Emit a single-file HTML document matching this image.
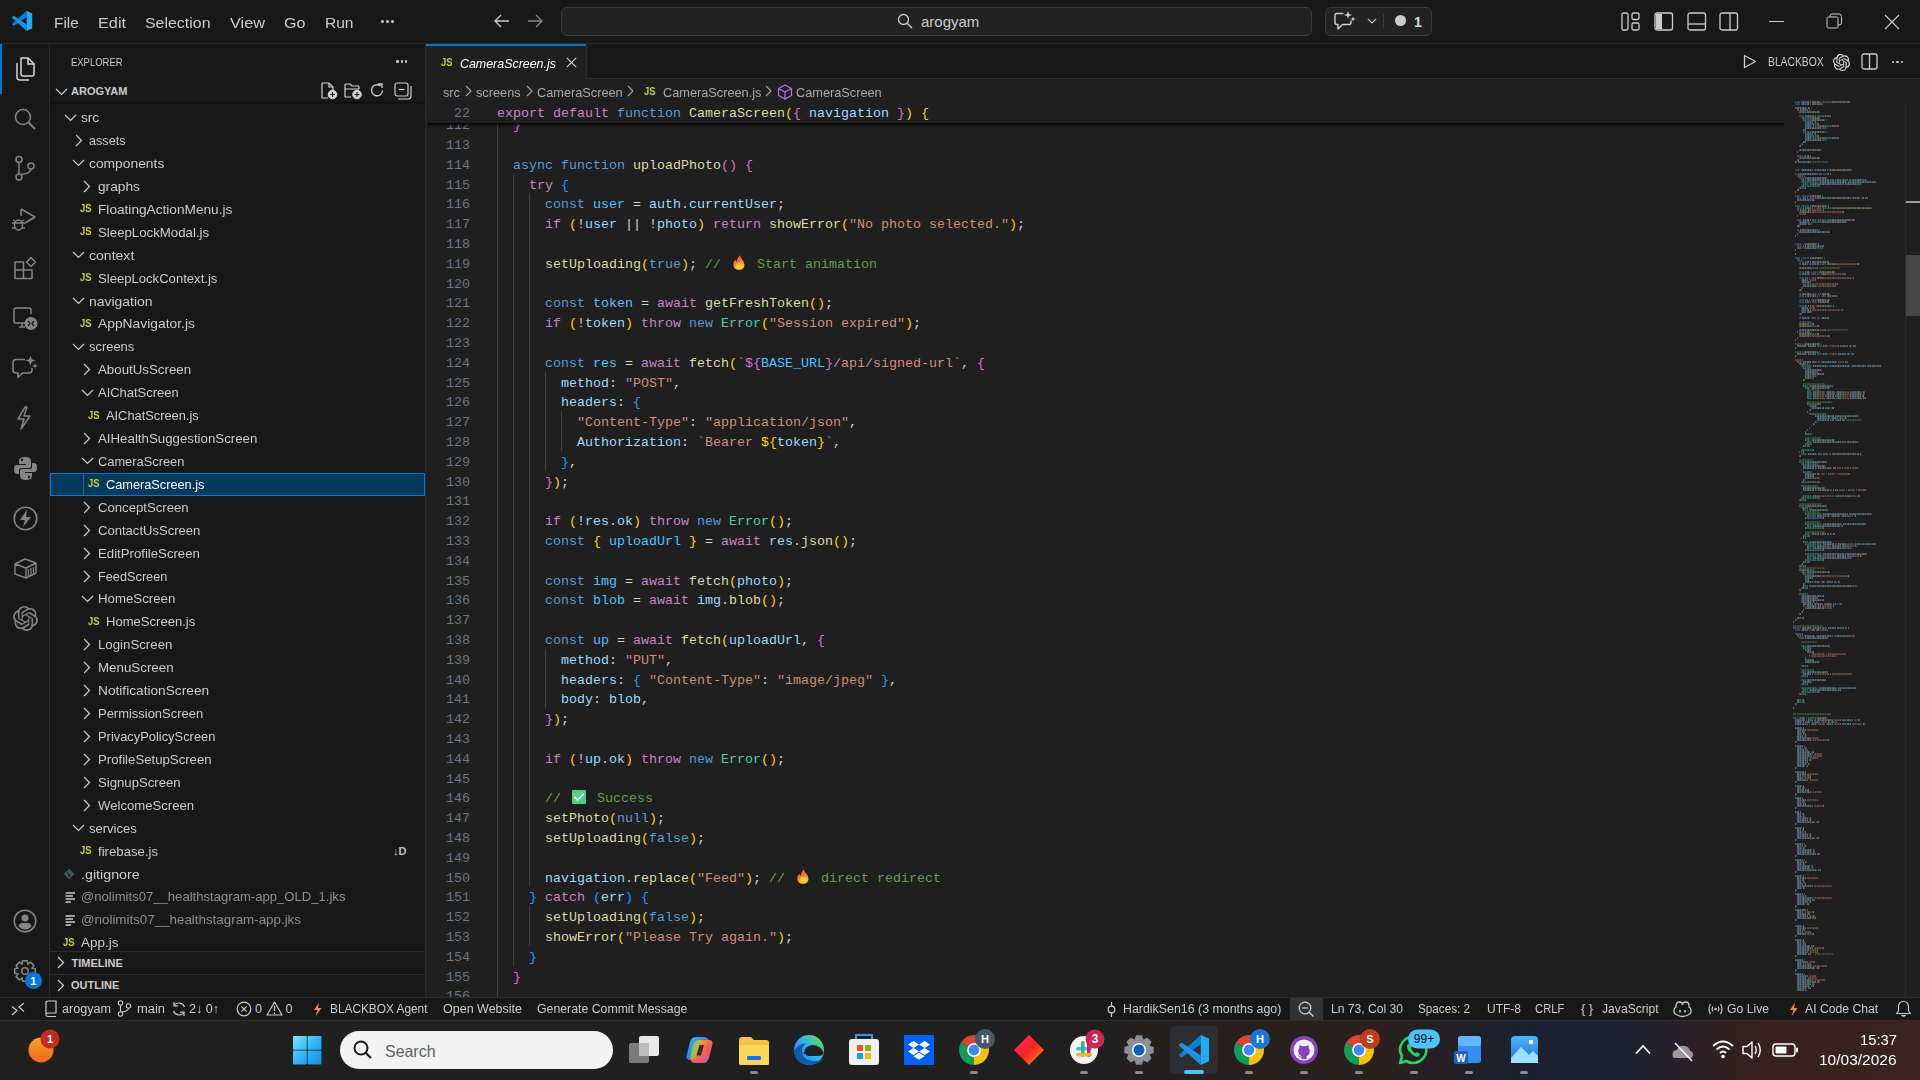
<!DOCTYPE html>
<html><head><meta charset="utf-8"><title>VS Code</title>
<style>
html,body{margin:0;padding:0;}
body{width:1920px;height:1080px;overflow:hidden;position:relative;background:#1f1f1f;font-family:"Liberation Sans",sans-serif;}
body div, body svg{position:absolute;}
svg{overflow:visible;}
</style></head><body>
<div style="left:0px;top:0px;width:1920px;height:43px;background:#181818;"></div>
<div style="left:0px;top:43px;width:1920px;height:1px;background:#2b2b2b;"></div>
<svg style="left:0px;top:0px;" width="44" height="44" viewBox="0 0 44 44"><polygon points="26.69,10.80 26.69,17.20 13.80,25.99 11.80,24.29" fill="#0f7fcf"/><polygon points="26.69,31.00 26.69,24.60 13.80,15.81 11.80,17.51" fill="#1b93e3"/><polygon points="26.69,10.80 32.20,13.39 32.20,28.41 26.69,31.00" fill="#24aaf2"/></svg>
<div style="left:53.5px;top:15.30px;font-family:'Liberation Sans', sans-serif;font-size:15px;line-height:15px;color:#cccccc;white-space:pre;transform:scaleX(1.0240496508921644);transform-origin:0 0;">File</div>
<div style="left:97.5px;top:15.30px;font-family:'Liberation Sans', sans-serif;font-size:15px;line-height:15px;color:#cccccc;white-space:pre;transform:scaleX(1.0833031072421715);transform-origin:0 0;">Edit</div>
<div style="left:145.0px;top:15.30px;font-family:'Liberation Sans', sans-serif;font-size:15px;line-height:15px;color:#cccccc;white-space:pre;transform:scaleX(1.0615211253339412);transform-origin:0 0;">Selection</div>
<div style="left:230.0px;top:15.30px;font-family:'Liberation Sans', sans-serif;font-size:15px;line-height:15px;color:#cccccc;white-space:pre;transform:scaleX(1.0855868954153338);transform-origin:0 0;">View</div>
<div style="left:284.0px;top:15.30px;font-family:'Liberation Sans', sans-serif;font-size:15px;line-height:15px;color:#cccccc;white-space:pre;transform:scaleX(1.0745382843309514);transform-origin:0 0;">Go</div>
<div style="left:325.0px;top:15.30px;font-family:'Liberation Sans', sans-serif;font-size:15px;line-height:15px;color:#cccccc;white-space:pre;transform:scaleX(1.0357751277683134);transform-origin:0 0;">Run</div>
<div style="left:381px;top:19.5px;width:3px;height:3px;background:#cccccc;border-radius:50%;"></div>
<div style="left:386px;top:19.5px;width:3px;height:3px;background:#cccccc;border-radius:50%;"></div>
<div style="left:391px;top:19.5px;width:3px;height:3px;background:#cccccc;border-radius:50%;"></div>
<svg style="left:493px;top:12px;" width="18" height="18" viewBox="0 0 18 18"><path d="M16 9 H2 M8 3 L2 9 L8 15" stroke="#cccccc" stroke-width="1.4" fill="none"/></svg>
<svg style="left:526px;top:12px;" width="18" height="18" viewBox="0 0 18 18"><path d="M2 9 H16 M10 3 L16 9 L10 15" stroke="#858585" stroke-width="1.4" fill="none"/></svg>
<div style="left:561px;top:7px;width:751px;height:29px;background:#222222;box-sizing:border-box;border:1px solid #3a3a3a;border-radius:6px;"></div>
<svg style="left:897px;top:13px;" width="16" height="16" viewBox="0 0 16 16"><circle cx="6.5" cy="6.5" r="5" stroke="#cccccc" stroke-width="1.3" fill="none"/><path d="M10.2 10.2 L15 15" stroke="#cccccc" stroke-width="1.4"/></svg>
<div style="left:921px;top:13.80px;font-family:'Liberation Sans', sans-serif;font-size:15px;line-height:15px;color:#cccccc;white-space:pre;">arogyam</div>
<div style="left:1325px;top:7px;width:107px;height:29px;background:#222222;box-sizing:border-box;border:1px solid #3a3a3a;border-radius:6px;"></div>
<svg style="left:1333px;top:10px;" width="24" height="22" viewBox="0 0 24 22"><path d="M10.5 3.5 H4 Q2 3.5 2 5.5 V12.5 Q2 14.5 4 14.5 H5 V19 L9.5 14.5 H16 Q18 14.5 18 12.5 V10.5" stroke="#d0d0d0" stroke-width="1.4" fill="none" stroke-linejoin="round"/><path d="M15 1 L16 4 L19 5 L16 6 L15 9 L14 6 L11 5 L14 4 Z M20 6.5 L20.7 8.3 L22.5 9 L20.7 9.7 L20 11.5 L19.3 9.7 L17.5 9 L19.3 8.3 Z" fill="#d0d0d0"/></svg>
<svg style="left:1367px;top:18px;" width="10" height="6" viewBox="0 0 10 6"><path d="M0.8 0.8 L5 5 L9.2 0.8" stroke="#cccccc" stroke-width="1.1" fill="none"/></svg>
<div style="left:1383px;top:14px;width:1px;height:14px;background:#3a3a3a;"></div>
<div style="left:1395px;top:15px;width:11px;height:11px;background:#cccccc;border-radius:50%;"></div>
<div style="left:1414px;top:15.15px;font-family:'Liberation Sans', sans-serif;font-size:14px;line-height:14px;color:#d8d8d8;white-space:pre;font-weight:700;">1</div>
<svg style="left:1621px;top:12px;" width="20" height="19" viewBox="0 0 20 19"><rect x="1" y="1" width="6" height="17" rx="1.5" stroke="#cccccc" stroke-width="1.3" fill="none"/><rect x="11" y="1" width="7" height="6.5" rx="1.5" stroke="#cccccc" stroke-width="1.3" fill="none"/><rect x="11" y="11" width="7" height="7" rx="1.5" stroke="#cccccc" stroke-width="1.3" fill="none"/></svg>
<svg style="left:1654px;top:12px;" width="20" height="19" viewBox="0 0 20 19"><rect x="1" y="1" width="17.5" height="17" rx="2" stroke="#cccccc" stroke-width="1.3" fill="none"/><path d="M2 2 H8 V17 H2 Z" fill="#cccccc"/></svg>
<svg style="left:1687px;top:12px;" width="20" height="19" viewBox="0 0 20 19"><rect x="1" y="1" width="17.5" height="17" rx="2" stroke="#cccccc" stroke-width="1.3" fill="none"/><path d="M1 12 H18.5" stroke="#cccccc" stroke-width="1.3"/></svg>
<svg style="left:1719px;top:12px;" width="20" height="19" viewBox="0 0 20 19"><rect x="1" y="1" width="17.5" height="17" rx="2" stroke="#cccccc" stroke-width="1.3" fill="none"/><path d="M11 1 V18" stroke="#cccccc" stroke-width="1.3"/></svg>
<div style="left:1769px;top:20.5px;width:15px;height:1px;background:#cccccc;"></div>
<svg style="left:1826px;top:13px;" width="17" height="17" viewBox="0 0 17 17"><rect x="1" y="4" width="11" height="11" rx="1.5" stroke="#cccccc" stroke-width="1" fill="none"/><path d="M4 4 V3 Q4 1 6 1 H13 Q15.5 1 15.5 3.5 V10 Q15.5 12 13 12 H12" stroke="#cccccc" stroke-width="1" fill="none"/></svg>
<svg style="left:1884px;top:14px;" width="16" height="16" viewBox="0 0 16 16"><path d="M1 1 L15 15 M15 1 L1 15" stroke="#cccccc" stroke-width="1.1"/></svg>
<div style="left:0px;top:44px;width:49px;height:953px;background:#181818;"></div>
<div style="left:49px;top:44px;width:1px;height:953px;background:#2b2b2b;"></div>
<div style="left:0px;top:44px;width:2px;height:50px;background:#0078d4;"></div>
<svg style="left:13px;top:56px;" width="24" height="26" viewBox="0 0 24 26"><path d="M8 2 H15 L21 8 V18 Q21 20 19 20 H10 Q8 20 8 18 Z" stroke="#d7d7d7" stroke-width="1.5" fill="none"/>
      <path d="M15 2 V8 H21" stroke="#d7d7d7" stroke-width="1.5" fill="none"/>
      <path d="M4 7 V21 Q4 24 7 24 H16" stroke="#d7d7d7" stroke-width="1.5" fill="none"/></svg>
<svg style="left:13px;top:107px;" width="24" height="24" viewBox="0 0 24 24"><circle cx="10" cy="10" r="7.5" stroke="#858585" stroke-width="1.6" fill="none"/><path d="M15.5 15.5 L22 22" stroke="#858585" stroke-width="1.8"/></svg>
<svg style="left:14px;top:155px;" width="22" height="27" viewBox="0 0 22 27"><circle cx="5" cy="4.5" r="3" stroke="#858585" stroke-width="1.5" fill="none"/><circle cx="5" cy="22" r="3" stroke="#858585" stroke-width="1.5" fill="none"/><circle cx="17" cy="11" r="3" stroke="#858585" stroke-width="1.5" fill="none"/><path d="M5 7.5 V19 M17 14 Q17 18 7.5 19.5" stroke="#858585" stroke-width="1.5" fill="none"/></svg>
<svg style="left:11px;top:207px;" width="26" height="26" viewBox="0 0 26 26"><path d="M10 2 L24 10 L14 16" stroke="#858585" stroke-width="1.5" fill="none" stroke-linejoin="round"/><path d="M10 2 V9" stroke="#858585" stroke-width="1.5"/><ellipse cx="7.5" cy="18" rx="4" ry="5" stroke="#858585" stroke-width="1.5" fill="none"/><path d="M1 16 H14 M1 21 H4 M11 21 H14 M2 13 L4 14 M13 13 L11 14" stroke="#858585" stroke-width="1.3"/></svg>
<svg style="left:13px;top:256px;" width="24" height="24" viewBox="0 0 24 24"><path d="M2 6 H10.5 V14 H19 V22.5 H2 Z M2 14 H10.5 V22.5" stroke="#858585" stroke-width="1.5" fill="none" stroke-linejoin="round"/><path d="M18 1.5 L22.5 6 L18 10.5 L13.5 6 Z" stroke="#858585" stroke-width="1.5" fill="none" stroke-linejoin="round"/></svg>
<svg style="left:12px;top:306px;" width="26" height="26" viewBox="0 0 26 26"><path d="M15 17 H4 Q2 17 2 15 V4 Q2 2 4 2 H17 Q19 2 19 4 V8" stroke="#858585" stroke-width="1.5" fill="none"/><path d="M7 21 H13 M10 17 V21" stroke="#858585" stroke-width="1.5"/><circle cx="19" cy="17.5" r="6.5" fill="#858585"/><path d="M16 15 L18 17.5 L16 20 M22 15 L20 17.5 L22 20" stroke="#181818" stroke-width="1.3" fill="none"/></svg>
<svg style="left:11px;top:355px;" width="27" height="25" viewBox="0 0 27 25"><path d="M14 4.5 H5 Q2 4.5 2 7.5 V15 Q2 18 5 18 H7 V22.5 L11.5 18 H18 Q21 18 21 15 V13" stroke="#858585" stroke-width="1.6" fill="none" stroke-linejoin="round"/><path d="M19.5 0.5 L20.8 4.2 L24.5 5.5 L20.8 6.8 L19.5 10.5 L18.2 6.8 L14.5 5.5 L18.2 4.2 Z M24 8 L24.8 10.2 L27 11 L24.8 11.8 L24 14 L23.2 11.8 L21 11 L23.2 10.2 Z" fill="#858585"/></svg>
<svg style="left:15px;top:406px;" width="18" height="24" viewBox="0 0 18 24"><path d="M10 1 L3 13 H9 L6 23 L15 10 H9 L12 1 Z" stroke="#858585" stroke-width="1.5" fill="none" stroke-linejoin="round"/></svg>
<svg style="left:13px;top:456px;" width="25" height="25" viewBox="0 0 25 25"><path d="M12 1 Q6 1 6 5 V8 H13 V9 H4 Q1 9 1 13 Q1 18 4 18 H6 V14 Q6 12 9 12 H16 Q18 12 18 10 V5 Q18 1 12 1 Z" fill="#858585"/><path d="M13 24 Q19 24 19 20 V17 H12 V16 H21 Q24 16 24 12 Q24 7 21 7 H19 V11 Q19 13 16 13 H9 Q7 13 7 15 V20 Q7 24 13 24 Z" fill="#858585"/><circle cx="9" cy="4" r="1.2" fill="#181818"/><circle cx="16" cy="21" r="1.2" fill="#181818"/></svg>
<svg style="left:13px;top:506px;" width="26" height="26" viewBox="0 0 26 26"><circle cx="12.5" cy="12.5" r="11.3" stroke="#858585" stroke-width="1.6" fill="none"/><path d="M14 4 L7 14 H12 L10 21 L18 11 H13 Z" fill="#858585"/></svg>
<svg style="left:13px;top:557px;" width="25" height="23" viewBox="0 0 25 23"><path d="M2 7 L12 2 L23 6 V16 L13 21 L2 17 Z M2 7 L13 11 L23 6 M13 11 V21" stroke="#858585" stroke-width="1.4" fill="none" stroke-linejoin="round"/><path d="M15.5 12 V19 M18 11 V18 M20.5 10 V17" stroke="#858585" stroke-width="1.2"/></svg>
<svg style="left:13px;top:606px;" width="25" height="25" viewBox="0 0 24 24"><path d="M22.2819 9.8211a5.9847 5.9847 0 0 0-.5157-4.9108 6.0462 6.0462 0 0 0-6.5098-2.9A6.0651 6.0651 0 0 0 4.9807 4.1818a5.9847 5.9847 0 0 0-3.9977 2.9 6.0462 6.0462 0 0 0 .7427 7.0966 5.98 5.98 0 0 0 .511 4.9107 6.051 6.051 0 0 0 6.5146 2.9001A5.9847 5.9847 0 0 0 13.2599 24a6.0557 6.0557 0 0 0 5.7718-4.2058 5.9894 5.9894 0 0 0 3.9977-2.9001 6.0557 6.0557 0 0 0-.7475-7.0729zm-9.022 12.6081a4.4755 4.4755 0 0 1-2.8764-1.0408l.1419-.0804 4.7783-2.7582a.7948.7948 0 0 0 .3927-.6813v-6.7369l2.02 1.1686a.071.071 0 0 1 .038.052v5.5826a4.504 4.504 0 0 1-4.4945 4.4944zm-9.6607-4.1254a4.4708 4.4708 0 0 1-.5346-3.0137l.142.0852 4.783 2.7582a.7712.7712 0 0 0 .7806 0l5.8428-3.3685v2.3324a.0804.0804 0 0 1-.0332.0615L9.74 19.9502a4.4992 4.4992 0 0 1-6.1408-1.6464zM2.3408 7.8956a4.485 4.485 0 0 1 2.3655-1.9728V11.6a.7664.7664 0 0 0 .3879.6765l5.8144 3.3543-2.0201 1.1685a.0757.0757 0 0 1-.071 0l-4.8303-2.7865A4.504 4.504 0 0 1 2.3408 7.872zm16.5963 3.8558L13.1038 8.364 15.1192 7.2a.0757.0757 0 0 1 .071 0l4.8303 2.7913a4.4944 4.4944 0 0 1-.6765 8.1042v-5.6772a.79.79 0 0 0-.407-.667zm2.0107-3.0231l-.142-.0852-4.7735-2.7818a.7759.7759 0 0 0-.7854 0L9.409 9.2297V6.8974a.0662.0662 0 0 1 .0284-.0615l4.8303-2.7866a4.4992 4.4992 0 0 1 6.6802 4.66zM8.3065 12.863l-2.02-1.1638a.0804.0804 0 0 1-.038-.0567V6.0742a4.4992 4.4992 0 0 1 7.3757-3.4537l-.142.0805L8.704 5.459a.7948.7948 0 0 0-.3927.6813zm1.0976-2.3654l2.602-1.4998 2.6069 1.4998v2.9994l-2.5974 1.5-2.6067-1.5Z" fill="#858585"/></svg>
<svg style="left:13px;top:909px;" width="24" height="24" viewBox="0 0 24 24"><circle cx="12" cy="12" r="10.8" stroke="#858585" stroke-width="1.5" fill="none"/><circle cx="12" cy="9" r="3.5" fill="#858585"/><path d="M5.5 17.5 Q6 14 9 14 H15 Q18 14 18.5 17.5 Q15.5 20.5 12 20.5 Q8.5 20.5 5.5 17.5 Z" fill="#858585"/></svg>
<svg style="left:14px;top:960px;" width="23" height="23" viewBox="0 0 23 23"><polygon points="21.25,8.71 21.25,13.29 17.85,14.06 18.00,13.68 19.87,16.63 16.63,19.87 13.68,18.00 14.06,17.85 13.29,21.25 8.71,21.25 7.94,17.85 8.32,18.00 5.37,19.87 2.13,16.63 4.00,13.68 4.15,14.06 0.75,13.29 0.75,8.71 4.15,7.94 4.00,8.32 2.13,5.37 5.37,2.13 8.32,4.00 7.94,4.15 8.71,0.75 13.29,0.75 14.06,4.15 13.68,4.00 16.63,2.13 19.87,5.37 18.00,8.32 17.85,7.94" stroke="#858585" stroke-width="1.5" fill="none" stroke-linejoin="round"/><circle cx="11" cy="11" r="3.3" stroke="#858585" stroke-width="1.5" fill="none"/></svg>
<div style="left:25px;top:972px;width:17px;height:17px;background:#0078d4;border-radius:50%;"></div>
<div style="left:30.3px;top:975.69px;font-family:'Liberation Sans', sans-serif;font-size:11px;line-height:11px;color:#ffffff;white-space:pre;font-weight:700;">1</div>
<div style="left:50px;top:44px;width:375px;height:953px;background:#181818;"></div>
<div style="left:425px;top:44px;width:1px;height:953px;background:#2b2b2b;"></div>
<div style="left:71px;top:56.69px;font-family:'Liberation Sans', sans-serif;font-size:11px;line-height:11px;color:#cccccc;white-space:pre;transform:scaleX(0.86);transform-origin:0 0;">EXPLORER</div>
<div style="left:396.2px;top:60.2px;width:2.6px;height:2.6px;background:#cccccc;border-radius:50%;"></div>
<div style="left:400.5px;top:60.2px;width:2.6px;height:2.6px;background:#cccccc;border-radius:50%;"></div>
<div style="left:404.8px;top:60.2px;width:2.6px;height:2.6px;background:#cccccc;border-radius:50%;"></div>
<svg style="left:54.5px;top:87.5px;" width="13" height="8" viewBox="0 0 13 8"><path d="M1 1 L6.5 6.5 L12 1" stroke="#cccccc" stroke-width="1.2" fill="none"/></svg>
<div style="left:71px;top:85.69px;font-family:'Liberation Sans', sans-serif;font-size:11px;line-height:11px;color:#cccccc;white-space:pre;font-weight:700;">AROGYAM</div>
<svg style="left:320px;top:81px;" width="18" height="19" viewBox="0 0 18 19"><path d="M8 17 H3 Q2 17 2 16 V3 Q2 2 3 2 H9 L13 6 V9" stroke="#d4d4d4" stroke-width="1.2" fill="none"/><path d="M9 2 V6 H13" stroke="#d4d4d4" stroke-width="1.2" fill="none"/><circle cx="12.5" cy="13.5" r="4.3" stroke="#d4d4d4" stroke-width="1" fill="#d4d4d4"/><path d="M12.5 11 V16 M10 13.5 H15" stroke="#181818" stroke-width="1.1"/></svg>
<svg style="left:343px;top:81px;" width="20" height="19" viewBox="0 0 20 19"><path d="M8 16 H3 Q2 16 2 15 V4 Q2 3 3 3 H7 L9 5 H15 Q16 5 16 6 V8 M2 8 H16" stroke="#d4d4d4" stroke-width="1.2" fill="none"/><circle cx="14" cy="13.5" r="4.3" stroke="#d4d4d4" stroke-width="1" fill="#d4d4d4"/><path d="M14 11 V16 M11.5 13.5 H16.5" stroke="#181818" stroke-width="1.1"/></svg>
<svg style="left:369px;top:82px;" width="17" height="17" viewBox="0 0 17 17"><path d="M13.5 8.5 A5.5 5.5 0 1 1 11.5 4" stroke="#d4d4d4" stroke-width="1.3" fill="none"/><path d="M9 2 H13 V6" stroke="#d4d4d4" stroke-width="1.3" fill="none"/></svg>
<svg style="left:394px;top:82px;" width="18" height="17" viewBox="0 0 18 17"><rect x="1" y="1" width="13" height="13" rx="2" stroke="#d4d4d4" stroke-width="1.2" fill="none"/><path d="M4 17 H14 Q17 17 17 14 V4" stroke="#d4d4d4" stroke-width="1.2" fill="none"/><path d="M4.5 7.5 H10.5" stroke="#d4d4d4" stroke-width="1.2"/></svg>
<div style="left:50px;top:102px;width:375px;height:3px;background:linear-gradient(#0e0e0e,rgba(24,24,24,0));"></div>
<svg style="left:63.75px;top:113.6px;" width="13" height="8" viewBox="0 0 13 8"><path d="M1 1 L6.5 6.5 L12 1" stroke="#cccccc" stroke-width="1.2" fill="none"/></svg>
<div style="left:80.75px;top:111.17px;font-family:'Liberation Sans', sans-serif;font-size:13.5px;line-height:13.5px;color:#cccccc;white-space:pre;transform:scaleX(1.0113876624250555);transform-origin:0 0;">src</div>
<svg style="left:74.67px;top:134.22px;" width="8" height="13" viewBox="0 0 8 13"><path d="M1 1 L6.5 6.5 L1 12" stroke="#cccccc" stroke-width="1.2" fill="none"/></svg>
<div style="left:89.17px;top:134.09px;font-family:'Liberation Sans', sans-serif;font-size:13.5px;line-height:13.5px;color:#cccccc;white-space:pre;transform:scaleX(0.9363065487632962);transform-origin:0 0;">assets</div>
<svg style="left:72.17px;top:159.44px;" width="13" height="8" viewBox="0 0 13 8"><path d="M1 1 L6.5 6.5 L12 1" stroke="#cccccc" stroke-width="1.2" fill="none"/></svg>
<div style="left:89.17px;top:157.01px;font-family:'Liberation Sans', sans-serif;font-size:13.5px;line-height:13.5px;color:#cccccc;white-space:pre;transform:scaleX(1.0236725553250237);transform-origin:0 0;">components</div>
<svg style="left:83.09px;top:180.06px;" width="8" height="13" viewBox="0 0 8 13"><path d="M1 1 L6.5 6.5 L1 12" stroke="#cccccc" stroke-width="1.2" fill="none"/></svg>
<div style="left:97.59px;top:179.93px;font-family:'Liberation Sans', sans-serif;font-size:13.5px;line-height:13.5px;color:#cccccc;white-space:pre;transform:scaleX(1.0141943445975747);transform-origin:0 0;">graphs</div>
<div style="left:79.59px;top:203.39px;font-family:'Liberation Sans', sans-serif;font-size:10.5px;line-height:10.5px;color:#cbcb41;white-space:pre;font-weight:700;transform:scaleX(0.9);transform-origin:0 0;">JS</div>
<div style="left:97.59px;top:202.85px;font-family:'Liberation Sans', sans-serif;font-size:13.5px;line-height:13.5px;color:#cccccc;white-space:pre;transform:scaleX(1.0116672372636286);transform-origin:0 0;">FloatingActionMenu.js</div>
<div style="left:79.59px;top:226.31px;font-family:'Liberation Sans', sans-serif;font-size:10.5px;line-height:10.5px;color:#cbcb41;white-space:pre;font-weight:700;transform:scaleX(0.9);transform-origin:0 0;">JS</div>
<div style="left:97.59px;top:225.77px;font-family:'Liberation Sans', sans-serif;font-size:13.5px;line-height:13.5px;color:#cccccc;white-space:pre;transform:scaleX(0.9806085778980261);transform-origin:0 0;">SleepLockModal.js</div>
<svg style="left:72.17px;top:251.12px;" width="13" height="8" viewBox="0 0 13 8"><path d="M1 1 L6.5 6.5 L12 1" stroke="#cccccc" stroke-width="1.2" fill="none"/></svg>
<div style="left:89.17px;top:248.69px;font-family:'Liberation Sans', sans-serif;font-size:13.5px;line-height:13.5px;color:#cccccc;white-space:pre;transform:scaleX(1.040375809338151);transform-origin:0 0;">context</div>
<div style="left:79.59px;top:272.15px;font-family:'Liberation Sans', sans-serif;font-size:10.5px;line-height:10.5px;color:#cbcb41;white-space:pre;font-weight:700;transform:scaleX(0.9);transform-origin:0 0;">JS</div>
<div style="left:97.59px;top:271.61px;font-family:'Liberation Sans', sans-serif;font-size:13.5px;line-height:13.5px;color:#cccccc;white-space:pre;transform:scaleX(0.9699093515963298);transform-origin:0 0;">SleepLockContext.js</div>
<svg style="left:72.17px;top:296.96000000000004px;" width="13" height="8" viewBox="0 0 13 8"><path d="M1 1 L6.5 6.5 L12 1" stroke="#cccccc" stroke-width="1.2" fill="none"/></svg>
<div style="left:89.17px;top:294.53px;font-family:'Liberation Sans', sans-serif;font-size:13.5px;line-height:13.5px;color:#cccccc;white-space:pre;transform:scaleX(1.032284272207497);transform-origin:0 0;">navigation</div>
<div style="left:79.59px;top:317.99px;font-family:'Liberation Sans', sans-serif;font-size:10.5px;line-height:10.5px;color:#cbcb41;white-space:pre;font-weight:700;transform:scaleX(0.9);transform-origin:0 0;">JS</div>
<div style="left:97.59px;top:317.45px;font-family:'Liberation Sans', sans-serif;font-size:13.5px;line-height:13.5px;color:#cccccc;white-space:pre;transform:scaleX(1.0244476008927295);transform-origin:0 0;">AppNavigator.js</div>
<svg style="left:72.17px;top:342.8px;" width="13" height="8" viewBox="0 0 13 8"><path d="M1 1 L6.5 6.5 L12 1" stroke="#cccccc" stroke-width="1.2" fill="none"/></svg>
<div style="left:89.17px;top:340.37px;font-family:'Liberation Sans', sans-serif;font-size:13.5px;line-height:13.5px;color:#cccccc;white-space:pre;transform:scaleX(0.9579647480397212);transform-origin:0 0;">screens</div>
<svg style="left:83.09px;top:363.42px;" width="8" height="13" viewBox="0 0 8 13"><path d="M1 1 L6.5 6.5 L1 12" stroke="#cccccc" stroke-width="1.2" fill="none"/></svg>
<div style="left:97.59px;top:363.29px;font-family:'Liberation Sans', sans-serif;font-size:13.5px;line-height:13.5px;color:#cccccc;white-space:pre;transform:scaleX(0.9847854234887676);transform-origin:0 0;">AboutUsScreen</div>
<svg style="left:80.59px;top:388.64000000000004px;" width="13" height="8" viewBox="0 0 13 8"><path d="M1 1 L6.5 6.5 L12 1" stroke="#cccccc" stroke-width="1.2" fill="none"/></svg>
<div style="left:97.59px;top:386.21px;font-family:'Liberation Sans', sans-serif;font-size:13.5px;line-height:13.5px;color:#cccccc;white-space:pre;transform:scaleX(0.9591664853950883);transform-origin:0 0;">AIChatScreen</div>
<div style="left:88.00999999999999px;top:409.67px;font-family:'Liberation Sans', sans-serif;font-size:10.5px;line-height:10.5px;color:#cbcb41;white-space:pre;font-weight:700;transform:scaleX(0.9);transform-origin:0 0;">JS</div>
<div style="left:106.00999999999999px;top:409.13px;font-family:'Liberation Sans', sans-serif;font-size:13.5px;line-height:13.5px;color:#cccccc;white-space:pre;transform:scaleX(0.9502600650042371);transform-origin:0 0;">AIChatScreen.js</div>
<svg style="left:83.09px;top:432.18px;" width="8" height="13" viewBox="0 0 8 13"><path d="M1 1 L6.5 6.5 L1 12" stroke="#cccccc" stroke-width="1.2" fill="none"/></svg>
<div style="left:97.59px;top:432.05px;font-family:'Liberation Sans', sans-serif;font-size:13.5px;line-height:13.5px;color:#cccccc;white-space:pre;transform:scaleX(0.9831148588663617);transform-origin:0 0;">AIHealthSuggestionScreen</div>
<svg style="left:80.59px;top:457.40000000000003px;" width="13" height="8" viewBox="0 0 13 8"><path d="M1 1 L6.5 6.5 L12 1" stroke="#cccccc" stroke-width="1.2" fill="none"/></svg>
<div style="left:97.59px;top:454.97px;font-family:'Liberation Sans', sans-serif;font-size:13.5px;line-height:13.5px;color:#cccccc;white-space:pre;transform:scaleX(0.9512764774626385);transform-origin:0 0;">CameraScreen</div>
<div style="left:50px;top:473px;width:375px;height:23px;background:#04395e;box-sizing:border-box;border:1px solid #0078d4;"></div>
<div style="left:83px;top:474px;width:1px;height:21px;background:#585858;"></div>
<div style="left:88.00999999999999px;top:478.43px;font-family:'Liberation Sans', sans-serif;font-size:10.5px;line-height:10.5px;color:#cbcb41;white-space:pre;font-weight:700;transform:scaleX(0.9);transform-origin:0 0;">JS</div>
<div style="left:106.00999999999999px;top:477.89px;font-family:'Liberation Sans', sans-serif;font-size:13.5px;line-height:13.5px;color:#ffffff;white-space:pre;transform:scaleX(0.9439672286874845);transform-origin:0 0;">CameraScreen.js</div>
<svg style="left:83.09px;top:500.94000000000005px;" width="8" height="13" viewBox="0 0 8 13"><path d="M1 1 L6.5 6.5 L1 12" stroke="#cccccc" stroke-width="1.2" fill="none"/></svg>
<div style="left:97.59px;top:500.81px;font-family:'Liberation Sans', sans-serif;font-size:13.5px;line-height:13.5px;color:#cccccc;white-space:pre;transform:scaleX(0.9737685455954447);transform-origin:0 0;">ConceptScreen</div>
<svg style="left:83.09px;top:523.86px;" width="8" height="13" viewBox="0 0 8 13"><path d="M1 1 L6.5 6.5 L1 12" stroke="#cccccc" stroke-width="1.2" fill="none"/></svg>
<div style="left:97.59px;top:523.73px;font-family:'Liberation Sans', sans-serif;font-size:13.5px;line-height:13.5px;color:#cccccc;white-space:pre;transform:scaleX(0.9675444076688244);transform-origin:0 0;">ContactUsScreen</div>
<svg style="left:83.09px;top:546.78px;" width="8" height="13" viewBox="0 0 8 13"><path d="M1 1 L6.5 6.5 L1 12" stroke="#cccccc" stroke-width="1.2" fill="none"/></svg>
<div style="left:97.59px;top:546.65px;font-family:'Liberation Sans', sans-serif;font-size:13.5px;line-height:13.5px;color:#cccccc;white-space:pre;transform:scaleX(0.9766242326865241);transform-origin:0 0;">EditProfileScreen</div>
<svg style="left:83.09px;top:569.7px;" width="8" height="13" viewBox="0 0 8 13"><path d="M1 1 L6.5 6.5 L1 12" stroke="#cccccc" stroke-width="1.2" fill="none"/></svg>
<div style="left:97.59px;top:569.57px;font-family:'Liberation Sans', sans-serif;font-size:13.5px;line-height:13.5px;color:#cccccc;white-space:pre;transform:scaleX(0.9431712066597188);transform-origin:0 0;">FeedScreen</div>
<svg style="left:80.59px;top:594.92px;" width="13" height="8" viewBox="0 0 13 8"><path d="M1 1 L6.5 6.5 L12 1" stroke="#cccccc" stroke-width="1.2" fill="none"/></svg>
<div style="left:97.59px;top:592.49px;font-family:'Liberation Sans', sans-serif;font-size:13.5px;line-height:13.5px;color:#cccccc;white-space:pre;transform:scaleX(0.981963434999742);transform-origin:0 0;">HomeScreen</div>
<div style="left:88.00999999999999px;top:615.95px;font-family:'Liberation Sans', sans-serif;font-size:10.5px;line-height:10.5px;color:#cbcb41;white-space:pre;font-weight:700;transform:scaleX(0.9);transform-origin:0 0;">JS</div>
<div style="left:106.00999999999999px;top:615.41px;font-family:'Liberation Sans', sans-serif;font-size:13.5px;line-height:13.5px;color:#cccccc;white-space:pre;transform:scaleX(0.9665051354728598);transform-origin:0 0;">HomeScreen.js</div>
<svg style="left:83.09px;top:638.46px;" width="8" height="13" viewBox="0 0 8 13"><path d="M1 1 L6.5 6.5 L1 12" stroke="#cccccc" stroke-width="1.2" fill="none"/></svg>
<div style="left:97.59px;top:638.33px;font-family:'Liberation Sans', sans-serif;font-size:13.5px;line-height:13.5px;color:#cccccc;white-space:pre;transform:scaleX(0.9809975830846848);transform-origin:0 0;">LoginScreen</div>
<svg style="left:83.09px;top:661.38px;" width="8" height="13" viewBox="0 0 8 13"><path d="M1 1 L6.5 6.5 L1 12" stroke="#cccccc" stroke-width="1.2" fill="none"/></svg>
<div style="left:97.59px;top:661.25px;font-family:'Liberation Sans', sans-serif;font-size:13.5px;line-height:13.5px;color:#cccccc;white-space:pre;transform:scaleX(0.9878666319619881);transform-origin:0 0;">MenuScreen</div>
<svg style="left:83.09px;top:684.3px;" width="8" height="13" viewBox="0 0 8 13"><path d="M1 1 L6.5 6.5 L1 12" stroke="#cccccc" stroke-width="1.2" fill="none"/></svg>
<div style="left:97.59px;top:684.17px;font-family:'Liberation Sans', sans-serif;font-size:13.5px;line-height:13.5px;color:#cccccc;white-space:pre;transform:scaleX(1.0142364565393351);transform-origin:0 0;">NotificationScreen</div>
<svg style="left:83.09px;top:707.22px;" width="8" height="13" viewBox="0 0 8 13"><path d="M1 1 L6.5 6.5 L1 12" stroke="#cccccc" stroke-width="1.2" fill="none"/></svg>
<div style="left:97.59px;top:707.09px;font-family:'Liberation Sans', sans-serif;font-size:13.5px;line-height:13.5px;color:#cccccc;white-space:pre;transform:scaleX(0.9595779993053194);transform-origin:0 0;">PermissionScreen</div>
<svg style="left:83.09px;top:730.14px;" width="8" height="13" viewBox="0 0 8 13"><path d="M1 1 L6.5 6.5 L1 12" stroke="#cccccc" stroke-width="1.2" fill="none"/></svg>
<div style="left:97.59px;top:730.01px;font-family:'Liberation Sans', sans-serif;font-size:13.5px;line-height:13.5px;color:#cccccc;white-space:pre;transform:scaleX(0.9538373621349793);transform-origin:0 0;">PrivacyPolicyScreen</div>
<svg style="left:83.09px;top:753.06px;" width="8" height="13" viewBox="0 0 8 13"><path d="M1 1 L6.5 6.5 L1 12" stroke="#cccccc" stroke-width="1.2" fill="none"/></svg>
<div style="left:97.59px;top:752.93px;font-family:'Liberation Sans', sans-serif;font-size:13.5px;line-height:13.5px;color:#cccccc;white-space:pre;transform:scaleX(0.9767605875039546);transform-origin:0 0;">ProfileSetupScreen</div>
<svg style="left:83.09px;top:775.98px;" width="8" height="13" viewBox="0 0 8 13"><path d="M1 1 L6.5 6.5 L1 12" stroke="#cccccc" stroke-width="1.2" fill="none"/></svg>
<div style="left:97.59px;top:775.85px;font-family:'Liberation Sans', sans-serif;font-size:13.5px;line-height:13.5px;color:#cccccc;white-space:pre;transform:scaleX(0.974113502618129);transform-origin:0 0;">SignupScreen</div>
<svg style="left:83.09px;top:798.9px;" width="8" height="13" viewBox="0 0 8 13"><path d="M1 1 L6.5 6.5 L1 12" stroke="#cccccc" stroke-width="1.2" fill="none"/></svg>
<div style="left:97.59px;top:798.77px;font-family:'Liberation Sans', sans-serif;font-size:13.5px;line-height:13.5px;color:#cccccc;white-space:pre;transform:scaleX(0.9729086790924851);transform-origin:0 0;">WelcomeScreen</div>
<svg style="left:72.17px;top:824.12px;" width="13" height="8" viewBox="0 0 13 8"><path d="M1 1 L6.5 6.5 L12 1" stroke="#cccccc" stroke-width="1.2" fill="none"/></svg>
<div style="left:89.17px;top:821.69px;font-family:'Liberation Sans', sans-serif;font-size:13.5px;line-height:13.5px;color:#cccccc;white-space:pre;transform:scaleX(0.965074315506764);transform-origin:0 0;">services</div>
<div style="left:79.59px;top:845.15px;font-family:'Liberation Sans', sans-serif;font-size:10.5px;line-height:10.5px;color:#cbcb41;white-space:pre;font-weight:700;transform:scaleX(0.9);transform-origin:0 0;">JS</div>
<div style="left:97.59px;top:844.61px;font-family:'Liberation Sans', sans-serif;font-size:13.5px;line-height:13.5px;color:#cccccc;white-space:pre;transform:scaleX(0.9770148658618505);transform-origin:0 0;">firebase.js</div>
<svg style="left:63.25px;top:867.66px;" width="12" height="12" viewBox="0 0 12 12"><path d="M6 0.5 L11.5 6 L6 11.5 L0.5 6 Z" fill="#41535b"/><path d="M4 4 L7.5 7.5 M6 6 V9" stroke="#181818" stroke-width="1"/></svg>
<div style="left:80.75px;top:867.53px;font-family:'Liberation Sans', sans-serif;font-size:13.5px;line-height:13.5px;color:#cccccc;white-space:pre;transform:scaleX(1.0570594905472974);transform-origin:0 0;">.gitignore</div>
<svg style="left:64.75px;top:891.58px;" width="11" height="11" viewBox="0 0 11 11"><path d="M0.5 1 H10 M0.5 4 H8 M0.5 7 H10 M0.5 10 H6" stroke="#cccccc" stroke-width="1.3"/></svg>
<div style="left:80.75px;top:890.45px;font-family:'Liberation Sans', sans-serif;font-size:13.5px;line-height:13.5px;color:#8f8f8f;white-space:pre;transform:scaleX(0.9701747280970794);transform-origin:0 0;">@nolimits07__healthstagram-app_OLD_1.jks</div>
<svg style="left:64.75px;top:914.5px;" width="11" height="11" viewBox="0 0 11 11"><path d="M0.5 1 H10 M0.5 4 H8 M0.5 7 H10 M0.5 10 H6" stroke="#cccccc" stroke-width="1.3"/></svg>
<div style="left:80.75px;top:913.37px;font-family:'Liberation Sans', sans-serif;font-size:13.5px;line-height:13.5px;color:#8f8f8f;white-space:pre;transform:scaleX(0.9894255704459999);transform-origin:0 0;">@nolimits07__healthstagram-app.jks</div>
<div style="left:62.75px;top:936.83px;font-family:'Liberation Sans', sans-serif;font-size:10.5px;line-height:10.5px;color:#cbcb41;white-space:pre;font-weight:700;transform:scaleX(0.9);transform-origin:0 0;">JS</div>
<div style="left:80.75px;top:936.29px;font-family:'Liberation Sans', sans-serif;font-size:13.5px;line-height:13.5px;color:#cccccc;white-space:pre;transform:scaleX(0.9981488769367558);transform-origin:0 0;">App.js</div>
<div style="left:393px;top:846.43px;font-family:'Liberation Sans', sans-serif;font-size:11px;line-height:11px;color:#c5c5c5;white-space:pre;font-weight:700;">↓D</div>
<div style="left:50px;top:951px;width:375px;height:1px;background:#2b2b2b;"></div>
<svg style="left:57px;top:956px;" width="8" height="13" viewBox="0 0 8 13"><path d="M1 1 L6.5 6.5 L1 12" stroke="#cccccc" stroke-width="1.2" fill="none"/></svg>
<div style="left:71.5px;top:958.19px;font-family:'Liberation Sans', sans-serif;font-size:11px;line-height:11px;color:#cccccc;white-space:pre;font-weight:700;">TIMELINE</div>
<div style="left:50px;top:974px;width:375px;height:1px;background:#2b2b2b;"></div>
<svg style="left:57px;top:979px;" width="8" height="13" viewBox="0 0 8 13"><path d="M1 1 L6.5 6.5 L1 12" stroke="#cccccc" stroke-width="1.2" fill="none"/></svg>
<div style="left:71px;top:980.19px;font-family:'Liberation Sans', sans-serif;font-size:11px;line-height:11px;color:#cccccc;white-space:pre;font-weight:700;">OUTLINE</div>
<div style="left:426px;top:44px;width:1494px;height:35px;background:#181818;"></div>
<div style="left:426px;top:78px;width:1494px;height:1px;background:#2b2b2b;"></div>
<div style="left:426px;top:44px;width:160px;height:35px;background:#1f1f1f;"></div>
<div style="left:426px;top:44px;width:160px;height:2px;background:#0078d4;"></div>
<div style="left:586px;top:44px;width:1px;height:35px;background:#2b2b2b;"></div>
<div style="left:440.5px;top:57.11px;font-family:'Liberation Sans', sans-serif;font-size:10.5px;line-height:10.5px;color:#cbcb41;white-space:pre;font-weight:700;transform:scaleX(0.9);transform-origin:0 0;">JS</div>
<div style="left:459.5px;top:56.50px;font-family:'Liberation Sans', sans-serif;font-size:13px;line-height:13px;color:#ffffff;white-space:pre;font-style:italic;transform:scaleX(0.955);transform-origin:0 0;">CameraScreen.js</div>
<svg style="left:566px;top:56.5px;" width="11" height="11" viewBox="0 0 11 11"><path d="M0.8 0.8 L10.2 10.2 M10.2 0.8 L0.8 10.2" stroke="#cccccc" stroke-width="1.2"/></svg>
<svg style="left:1743px;top:54px;" width="14" height="15" viewBox="0 0 14 15"><path d="M1.5 1.5 L12.5 7.5 L1.5 13.5 Z" stroke="#cccccc" stroke-width="1.3" fill="none" stroke-linejoin="round"/></svg>
<div style="left:1768px;top:56.34px;font-family:'Liberation Sans', sans-serif;font-size:12px;line-height:12px;color:#cccccc;white-space:pre;transform:scaleX(0.86);transform-origin:0 0;">BLACKBOX</div>
<svg style="left:1833px;top:54px;" width="17" height="17" viewBox="0 0 24 24"><path d="M22.2819 9.8211a5.9847 5.9847 0 0 0-.5157-4.9108 6.0462 6.0462 0 0 0-6.5098-2.9A6.0651 6.0651 0 0 0 4.9807 4.1818a5.9847 5.9847 0 0 0-3.9977 2.9 6.0462 6.0462 0 0 0 .7427 7.0966 5.98 5.98 0 0 0 .511 4.9107 6.051 6.051 0 0 0 6.5146 2.9001A5.9847 5.9847 0 0 0 13.2599 24a6.0557 6.0557 0 0 0 5.7718-4.2058 5.9894 5.9894 0 0 0 3.9977-2.9001 6.0557 6.0557 0 0 0-.7475-7.0729zm-9.022 12.6081a4.4755 4.4755 0 0 1-2.8764-1.0408l.1419-.0804 4.7783-2.7582a.7948.7948 0 0 0 .3927-.6813v-6.7369l2.02 1.1686a.071.071 0 0 1 .038.052v5.5826a4.504 4.504 0 0 1-4.4945 4.4944zm-9.6607-4.1254a4.4708 4.4708 0 0 1-.5346-3.0137l.142.0852 4.783 2.7582a.7712.7712 0 0 0 .7806 0l5.8428-3.3685v2.3324a.0804.0804 0 0 1-.0332.0615L9.74 19.9502a4.4992 4.4992 0 0 1-6.1408-1.6464zM2.3408 7.8956a4.485 4.485 0 0 1 2.3655-1.9728V11.6a.7664.7664 0 0 0 .3879.6765l5.8144 3.3543-2.0201 1.1685a.0757.0757 0 0 1-.071 0l-4.8303-2.7865A4.504 4.504 0 0 1 2.3408 7.872zm16.5963 3.8558L13.1038 8.364 15.1192 7.2a.0757.0757 0 0 1 .071 0l4.8303 2.7913a4.4944 4.4944 0 0 1-.6765 8.1042v-5.6772a.79.79 0 0 0-.407-.667zm2.0107-3.0231l-.142-.0852-4.7735-2.7818a.7759.7759 0 0 0-.7854 0L9.409 9.2297V6.8974a.0662.0662 0 0 1 .0284-.0615l4.8303-2.7866a4.4992 4.4992 0 0 1 6.6802 4.66zM8.3065 12.863l-2.02-1.1638a.0804.0804 0 0 1-.038-.0567V6.0742a4.4992 4.4992 0 0 1 7.3757-3.4537l-.142.0805L8.704 5.459a.7948.7948 0 0 0-.3927.6813zm1.0976-2.3654l2.602-1.4998 2.6069 1.4998v2.9994l-2.5974 1.5-2.6067-1.5Z" fill="#e8e8e8"/></svg>
<svg style="left:1861px;top:53px;" width="17" height="17" viewBox="0 0 17 17"><rect x="1" y="1" width="15" height="15" rx="2" stroke="#cccccc" stroke-width="1.3" fill="none"/><path d="M8.5 1 V16" stroke="#cccccc" stroke-width="1.3"/></svg>
<div style="left:1891.5px;top:60.5px;width:2.6px;height:2.6px;background:#cccccc;border-radius:50%;"></div>
<div style="left:1896.1px;top:60.5px;width:2.6px;height:2.6px;background:#cccccc;border-radius:50%;"></div>
<div style="left:1900.7px;top:60.5px;width:2.6px;height:2.6px;background:#cccccc;border-radius:50%;"></div>
<div style="left:0px;top:997px;width:1920px;height:23px;background:#181818;"></div>
<div style="left:0px;top:997px;width:1920px;height:1px;background:#2b2b2b;"></div>
<svg style="left:11px;top:1002px;" width="14" height="14" viewBox="0 0 14 14"><path d="M1 13 L6 8.5 L1 4.5 M13 1 L8 5 L13 9.5" stroke="#cccccc" stroke-width="1.2" fill="none"/></svg>
<svg style="left:44px;top:1000px;" width="13" height="17" viewBox="0 0 13 17"><path d="M2 14 V3 Q2 1 4 1 H12 V13 H4 Q2 13 2 15 Q2 16.5 4 16.5 H12" stroke="#cccccc" stroke-width="1.2" fill="none"/></svg>
<div style="left:61.5px;top:1002.72px;font-family:'Liberation Sans', sans-serif;font-size:12.5px;line-height:12.5px;color:#cccccc;white-space:pre;transform:scaleX(1.0076311350309262);transform-origin:0 0;">arogyam</div>
<svg style="left:117px;top:1000px;" width="15" height="17" viewBox="0 0 15 17"><circle cx="3.5" cy="3" r="2.2" stroke="#cccccc" stroke-width="1.1" fill="none"/><circle cx="3.5" cy="14" r="2.2" stroke="#cccccc" stroke-width="1.1" fill="none"/><circle cx="11.5" cy="6" r="2.2" stroke="#cccccc" stroke-width="1.1" fill="none"/><path d="M3.5 5.2 V11.8 M11.5 8.2 Q11.5 11 4.5 12" stroke="#cccccc" stroke-width="1.1" fill="none"/></svg>
<div style="left:136.5px;top:1002.72px;font-family:'Liberation Sans', sans-serif;font-size:12.5px;line-height:12.5px;color:#cccccc;white-space:pre;transform:scaleX(1.0335231778530747);transform-origin:0 0;">main</div>
<svg style="left:171px;top:1001px;" width="16" height="16" viewBox="0 0 16 16"><path d="M13.5 6 A6 6 0 0 0 3 4.5 M2.5 10 A6 6 0 0 0 13 11.5" stroke="#cccccc" stroke-width="1.2" fill="none"/><path d="M3 1 V4.8 H6.8 M13 15 V11.2 H9.2" stroke="#cccccc" stroke-width="1.2" fill="none"/></svg>
<div style="left:189px;top:1002.72px;font-family:'Liberation Sans', sans-serif;font-size:12.5px;line-height:12.5px;color:#cccccc;white-space:pre;transform:scaleX(1.00418410041841);transform-origin:0 0;">2↓ 0↑</div>
<svg style="left:236px;top:1001px;" width="16" height="16" viewBox="0 0 16 16"><circle cx="8" cy="8" r="6.8" stroke="#cccccc" stroke-width="1.2" fill="none"/><path d="M5.3 5.3 L10.7 10.7 M10.7 5.3 L5.3 10.7" stroke="#cccccc" stroke-width="1.2"/></svg>
<div style="left:255px;top:1002.72px;font-family:'Liberation Sans', sans-serif;font-size:12.5px;line-height:12.5px;color:#cccccc;white-space:pre;">0</div>
<svg style="left:266px;top:1001px;" width="17" height="15" viewBox="0 0 17 15"><path d="M8.5 1 L16 14 H1 Z" stroke="#cccccc" stroke-width="1.2" fill="none" stroke-linejoin="round"/><path d="M8.5 5 V10 M8.5 11.5 V13" stroke="#cccccc" stroke-width="1.3"/></svg>
<div style="left:285.5px;top:1002.72px;font-family:'Liberation Sans', sans-serif;font-size:12.5px;line-height:12.5px;color:#cccccc;white-space:pre;">0</div>
<svg style="left:313px;top:1002px;" width="9" height="15" viewBox="0 0 9 15"><path d="M6 0.5 L1 8 H4.5 L2.5 14.5 L8.5 6 H5 Z" fill="#f0883e"/></svg>
<div style="left:329.5px;top:1002.72px;font-family:'Liberation Sans', sans-serif;font-size:12.5px;line-height:12.5px;color:#cccccc;white-space:pre;transform:scaleX(0.9480941256908438);transform-origin:0 0;">BLACKBOX Agent</div>
<div style="left:442.5px;top:1002.72px;font-family:'Liberation Sans', sans-serif;font-size:12.5px;line-height:12.5px;color:#cccccc;white-space:pre;transform:scaleX(1.00032150364783);transform-origin:0 0;">Open Website</div>
<div style="left:537.2px;top:1002.72px;font-family:'Liberation Sans', sans-serif;font-size:12.5px;line-height:12.5px;color:#cccccc;white-space:pre;transform:scaleX(0.9834577241590841);transform-origin:0 0;">Generate Commit Message</div>
<svg style="left:1106px;top:1001px;" width="11" height="17" viewBox="0 0 11 17"><circle cx="5.5" cy="8.5" r="3.3" stroke="#cccccc" stroke-width="1.2" fill="none"/><path d="M5.5 1 V5.2 M5.5 11.8 V16" stroke="#cccccc" stroke-width="1.2"/></svg>
<div style="left:1123.2px;top:1002.72px;font-family:'Liberation Sans', sans-serif;font-size:12.5px;line-height:12.5px;color:#cccccc;white-space:pre;transform:scaleX(0.9906326390925981);transform-origin:0 0;">HardikSen16 (3 months ago)</div>
<div style="left:1290px;top:998px;width:33px;height:22px;background:#333333;"></div>
<svg style="left:1298px;top:1001px;" width="17" height="17" viewBox="0 0 17 17"><circle cx="7" cy="7" r="5.8" stroke="#cccccc" stroke-width="1.3" fill="none"/><path d="M4.3 7 H9.7" stroke="#cccccc" stroke-width="1.3"/><path d="M11.2 11.2 L15.5 15.5" stroke="#cccccc" stroke-width="1.4"/></svg>
<div style="left:1330.5px;top:1002.72px;font-family:'Liberation Sans', sans-serif;font-size:12.5px;line-height:12.5px;color:#cccccc;white-space:pre;transform:scaleX(0.968346948961097);transform-origin:0 0;">Ln 73, Col 30</div>
<div style="left:1418.1px;top:1002.72px;font-family:'Liberation Sans', sans-serif;font-size:12.5px;line-height:12.5px;color:#cccccc;white-space:pre;transform:scaleX(0.935455535645269);transform-origin:0 0;">Spaces: 2</div>
<div style="left:1486.5px;top:1002.72px;font-family:'Liberation Sans', sans-serif;font-size:12.5px;line-height:12.5px;color:#cccccc;white-space:pre;transform:scaleX(0.9601765030336459);transform-origin:0 0;">UTF-8</div>
<div style="left:1534.5px;top:1002.72px;font-family:'Liberation Sans', sans-serif;font-size:12.5px;line-height:12.5px;color:#cccccc;white-space:pre;transform:scaleX(0.9007180469123982);transform-origin:0 0;">CRLF</div>
<div style="left:1581px;top:1002.72px;font-family:'Liberation Sans', sans-serif;font-size:12.5px;line-height:12.5px;color:#cccccc;white-space:pre;">{ }</div>
<div style="left:1601.5px;top:1002.72px;font-family:'Liberation Sans', sans-serif;font-size:12.5px;line-height:12.5px;color:#cccccc;white-space:pre;transform:scaleX(0.9716638216688424);transform-origin:0 0;">JavaScript</div>
<svg style="left:1673px;top:1001px;" width="19" height="16" viewBox="0 0 19 16"><path d="M3 5 Q3 1 6.5 1 Q9.5 1 9.5 4 Q9.5 1 12.5 1 Q16 1 16 5 V6 Q18 7 18 9 V11 Q18 12 16 13.5 Q12 15.5 9.5 15.5 Q7 15.5 3 13.5 Q1 12 1 11 V9 Q1 7 3 6 Z" stroke="#cccccc" stroke-width="1.3" fill="none"/><path d="M7 9 V11.5 M12 9 V11.5" stroke="#cccccc" stroke-width="1.6"/></svg>
<svg style="left:1707px;top:1002px;" width="17" height="14" viewBox="0 0 17 14"><path d="M3.5 2 Q0.5 7 3.5 12 M13.5 2 Q16.5 7 13.5 12 M5.8 4.5 Q4.3 7 5.8 9.5 M11.2 4.5 Q12.7 7 11.2 9.5" stroke="#cccccc" stroke-width="1.2" fill="none"/><circle cx="8.5" cy="7" r="1.3" fill="#cccccc"/></svg>
<div style="left:1727.2px;top:1002.72px;font-family:'Liberation Sans', sans-serif;font-size:12.5px;line-height:12.5px;color:#cccccc;white-space:pre;transform:scaleX(0.9773384720018137);transform-origin:0 0;">Go Live</div>
<svg style="left:1789px;top:1002px;" width="9" height="15" viewBox="0 0 9 15"><path d="M6 0.5 L1 8 H4.5 L2.5 14.5 L8.5 6 H5 Z" fill="#f0883e"/></svg>
<div style="left:1805px;top:1002.72px;font-family:'Liberation Sans', sans-serif;font-size:12.5px;line-height:12.5px;color:#cccccc;white-space:pre;transform:scaleX(0.9754919312857887);transform-origin:0 0;">AI Code Chat</div>
<svg style="left:1895px;top:1000px;" width="17" height="17" viewBox="0 0 17 17"><path d="M8.5 1.5 Q3.5 1.5 3.5 7 V11 L1.5 13.5 H15.5 L13.5 11 V7 Q13.5 1.5 8.5 1.5 Z" stroke="#cccccc" stroke-width="1.2" fill="none" stroke-linejoin="round"/><path d="M6.5 15 Q8.5 17 10.5 15" stroke="#cccccc" stroke-width="1.2" fill="none"/></svg>
<div style="left:426px;top:102px;width:1494px;height:895px;overflow:hidden;">
<div style="left:71.0px;top:12.1px;width:1px;height:891.0px;background:#404040"></div>
<div style="left:87.0px;top:71.5px;width:1px;height:792.0px;background:#404040"></div>
<div style="left:103.0px;top:91.3px;width:1px;height:693.0px;background:#404040"></div>
<div style="left:103.0px;top:804.1px;width:1px;height:39.6px;background:#404040"></div>
<div style="left:119.0px;top:269.5px;width:1px;height:99.0px;background:#404040"></div>
<div style="left:135.0px;top:309.1px;width:1px;height:39.6px;background:#404040"></div>
<div style="left:119.0px;top:546.7px;width:1px;height:59.4px;background:#404040"></div>
<div style="left:20.0px;top:17.18px;font-family:'Liberation Mono', monospace;font-size:13.33px;line-height:13.33px;color:#6e7681;white-space:pre">112</div>
<div style="left:71px;top:17.18px;font-family:'Liberation Mono', monospace;font-size:13.33px;line-height:13.33px;color:#d4d4d4;white-space:pre">  <span style="color:#da70d6">}</span></div>
<div style="left:20.0px;top:36.98px;font-family:'Liberation Mono', monospace;font-size:13.33px;line-height:13.33px;color:#6e7681;white-space:pre">113</div>
<div style="left:20.0px;top:56.78px;font-family:'Liberation Mono', monospace;font-size:13.33px;line-height:13.33px;color:#6e7681;white-space:pre">114</div>
<div style="left:71px;top:56.78px;font-family:'Liberation Mono', monospace;font-size:13.33px;line-height:13.33px;color:#d4d4d4;white-space:pre">  <span style="color:#569cd6">async</span> <span style="color:#569cd6">function</span> <span style="color:#dcdcaa">uploadPhoto</span><span style="color:#da70d6">(</span><span style="color:#da70d6">)</span> <span style="color:#da70d6">{</span></div>
<div style="left:20.0px;top:76.58px;font-family:'Liberation Mono', monospace;font-size:13.33px;line-height:13.33px;color:#6e7681;white-space:pre">115</div>
<div style="left:71px;top:76.58px;font-family:'Liberation Mono', monospace;font-size:13.33px;line-height:13.33px;color:#d4d4d4;white-space:pre">    <span style="color:#c586c0">try</span> <span style="color:#179fff">{</span></div>
<div style="left:20.0px;top:96.38px;font-family:'Liberation Mono', monospace;font-size:13.33px;line-height:13.33px;color:#6e7681;white-space:pre">116</div>
<div style="left:71px;top:96.38px;font-family:'Liberation Mono', monospace;font-size:13.33px;line-height:13.33px;color:#d4d4d4;white-space:pre">      <span style="color:#569cd6">const</span> <span style="color:#4fc1ff">user</span> <span style="color:#d4d4d4">=</span> <span style="color:#9cdcfe">auth</span><span style="color:#d4d4d4">.</span><span style="color:#9cdcfe">currentUser</span><span style="color:#d4d4d4">;</span></div>
<div style="left:20.0px;top:116.18px;font-family:'Liberation Mono', monospace;font-size:13.33px;line-height:13.33px;color:#6e7681;white-space:pre">117</div>
<div style="left:71px;top:116.18px;font-family:'Liberation Mono', monospace;font-size:13.33px;line-height:13.33px;color:#d4d4d4;white-space:pre">      <span style="color:#c586c0">if</span> <span style="color:#ffd700">(</span><span style="color:#d4d4d4">!</span><span style="color:#9cdcfe">user</span> <span style="color:#d4d4d4">|</span><span style="color:#d4d4d4">|</span> <span style="color:#d4d4d4">!</span><span style="color:#9cdcfe">photo</span><span style="color:#ffd700">)</span> <span style="color:#c586c0">return</span> <span style="color:#dcdcaa">showError</span><span style="color:#ffd700">(</span><span style="color:#ce9178">"No photo selected."</span><span style="color:#ffd700">)</span><span style="color:#d4d4d4">;</span></div>
<div style="left:20.0px;top:135.98px;font-family:'Liberation Mono', monospace;font-size:13.33px;line-height:13.33px;color:#6e7681;white-space:pre">118</div>
<div style="left:20.0px;top:155.78px;font-family:'Liberation Mono', monospace;font-size:13.33px;line-height:13.33px;color:#6e7681;white-space:pre">119</div>
<div style="left:71px;top:155.78px;font-family:'Liberation Mono', monospace;font-size:13.33px;line-height:13.33px;color:#d4d4d4;white-space:pre">      <span style="color:#dcdcaa">setUploading</span><span style="color:#ffd700">(</span><span style="color:#569cd6">true</span><span style="color:#ffd700">)</span><span style="color:#d4d4d4">;</span> <span style="color:#6a9955">// </span><span style="display:inline-block;position:relative;width:20px;height:0px"><svg width="12" height="15" viewBox="0 0 12 15" style="position:absolute;left:4.5px;top:-13px"><defs><linearGradient id="fg" x1="0" y1="0" x2="0.3" y2="1"><stop offset="0" stop-color="#f0473a"/><stop offset="0.55" stop-color="#f57a2a"/><stop offset="1" stop-color="#fdc62e"/></linearGradient></defs><path d="M6.8 0.3 Q7.2 2.2 9 4.2 Q11.8 7.2 11.5 10.3 Q11 14.6 6 14.8 Q0.8 14.6 0.3 10 Q0.1 7 2.3 4.6 Q2.6 6.3 3.6 6.8 Q3.8 3.2 6.8 0.3 Z" fill="url(#fg)"/><ellipse cx="6.5" cy="11" rx="3.3" ry="3.4" fill="#ffd23a" opacity="0.7"/></svg></span><span style="color:#6a9955"> Start animation</span></div>
<div style="left:20.0px;top:175.58px;font-family:'Liberation Mono', monospace;font-size:13.33px;line-height:13.33px;color:#6e7681;white-space:pre">120</div>
<div style="left:20.0px;top:195.38px;font-family:'Liberation Mono', monospace;font-size:13.33px;line-height:13.33px;color:#6e7681;white-space:pre">121</div>
<div style="left:71px;top:195.38px;font-family:'Liberation Mono', monospace;font-size:13.33px;line-height:13.33px;color:#d4d4d4;white-space:pre">      <span style="color:#569cd6">const</span> <span style="color:#4fc1ff">token</span> <span style="color:#d4d4d4">=</span> <span style="color:#c586c0">await</span> <span style="color:#dcdcaa">getFreshToken</span><span style="color:#ffd700">(</span><span style="color:#ffd700">)</span><span style="color:#d4d4d4">;</span></div>
<div style="left:20.0px;top:215.18px;font-family:'Liberation Mono', monospace;font-size:13.33px;line-height:13.33px;color:#6e7681;white-space:pre">122</div>
<div style="left:71px;top:215.18px;font-family:'Liberation Mono', monospace;font-size:13.33px;line-height:13.33px;color:#d4d4d4;white-space:pre">      <span style="color:#c586c0">if</span> <span style="color:#ffd700">(</span><span style="color:#d4d4d4">!</span><span style="color:#9cdcfe">token</span><span style="color:#ffd700">)</span> <span style="color:#c586c0">throw</span> <span style="color:#569cd6">new</span> <span style="color:#4ec9b0">Error</span><span style="color:#ffd700">(</span><span style="color:#ce9178">"Session expired"</span><span style="color:#ffd700">)</span><span style="color:#d4d4d4">;</span></div>
<div style="left:20.0px;top:234.98px;font-family:'Liberation Mono', monospace;font-size:13.33px;line-height:13.33px;color:#6e7681;white-space:pre">123</div>
<div style="left:20.0px;top:254.78px;font-family:'Liberation Mono', monospace;font-size:13.33px;line-height:13.33px;color:#6e7681;white-space:pre">124</div>
<div style="left:71px;top:254.78px;font-family:'Liberation Mono', monospace;font-size:13.33px;line-height:13.33px;color:#d4d4d4;white-space:pre">      <span style="color:#569cd6">const</span> <span style="color:#4fc1ff">res</span> <span style="color:#d4d4d4">=</span> <span style="color:#c586c0">await</span> <span style="color:#dcdcaa">fetch</span><span style="color:#ffd700">(</span><span style="color:#ce9178">`</span><span style="color:#da70d6">$</span><span style="color:#da70d6">{</span><span style="color:#4fc1ff">BASE_URL</span><span style="color:#da70d6">}</span><span style="color:#ce9178">/api/signed-url`</span><span style="color:#d4d4d4">,</span> <span style="color:#da70d6">{</span></div>
<div style="left:20.0px;top:274.58px;font-family:'Liberation Mono', monospace;font-size:13.33px;line-height:13.33px;color:#6e7681;white-space:pre">125</div>
<div style="left:71px;top:274.58px;font-family:'Liberation Mono', monospace;font-size:13.33px;line-height:13.33px;color:#d4d4d4;white-space:pre">        <span style="color:#9cdcfe">method</span><span style="color:#d4d4d4">:</span> <span style="color:#ce9178">"POST"</span><span style="color:#d4d4d4">,</span></div>
<div style="left:20.0px;top:294.38px;font-family:'Liberation Mono', monospace;font-size:13.33px;line-height:13.33px;color:#6e7681;white-space:pre">126</div>
<div style="left:71px;top:294.38px;font-family:'Liberation Mono', monospace;font-size:13.33px;line-height:13.33px;color:#d4d4d4;white-space:pre">        <span style="color:#9cdcfe">headers</span><span style="color:#d4d4d4">:</span> <span style="color:#179fff">{</span></div>
<div style="left:20.0px;top:314.18px;font-family:'Liberation Mono', monospace;font-size:13.33px;line-height:13.33px;color:#6e7681;white-space:pre">127</div>
<div style="left:71px;top:314.18px;font-family:'Liberation Mono', monospace;font-size:13.33px;line-height:13.33px;color:#d4d4d4;white-space:pre">          <span style="color:#ce9178">"Content-Type"</span><span style="color:#d4d4d4">:</span> <span style="color:#ce9178">"application/json"</span><span style="color:#d4d4d4">,</span></div>
<div style="left:20.0px;top:333.98px;font-family:'Liberation Mono', monospace;font-size:13.33px;line-height:13.33px;color:#6e7681;white-space:pre">128</div>
<div style="left:71px;top:333.98px;font-family:'Liberation Mono', monospace;font-size:13.33px;line-height:13.33px;color:#d4d4d4;white-space:pre">          <span style="color:#9cdcfe">Authorization</span><span style="color:#d4d4d4">:</span> <span style="color:#ce9178">`Bearer </span><span style="color:#ffd700">$</span><span style="color:#ffd700">{</span><span style="color:#9cdcfe">token</span><span style="color:#ffd700">}</span><span style="color:#ce9178">`</span><span style="color:#d4d4d4">,</span></div>
<div style="left:20.0px;top:353.78px;font-family:'Liberation Mono', monospace;font-size:13.33px;line-height:13.33px;color:#6e7681;white-space:pre">129</div>
<div style="left:71px;top:353.78px;font-family:'Liberation Mono', monospace;font-size:13.33px;line-height:13.33px;color:#d4d4d4;white-space:pre">        <span style="color:#179fff">}</span><span style="color:#d4d4d4">,</span></div>
<div style="left:20.0px;top:373.58px;font-family:'Liberation Mono', monospace;font-size:13.33px;line-height:13.33px;color:#6e7681;white-space:pre">130</div>
<div style="left:71px;top:373.58px;font-family:'Liberation Mono', monospace;font-size:13.33px;line-height:13.33px;color:#d4d4d4;white-space:pre">      <span style="color:#da70d6">}</span><span style="color:#ffd700">)</span><span style="color:#d4d4d4">;</span></div>
<div style="left:20.0px;top:393.38px;font-family:'Liberation Mono', monospace;font-size:13.33px;line-height:13.33px;color:#6e7681;white-space:pre">131</div>
<div style="left:20.0px;top:413.18px;font-family:'Liberation Mono', monospace;font-size:13.33px;line-height:13.33px;color:#6e7681;white-space:pre">132</div>
<div style="left:71px;top:413.18px;font-family:'Liberation Mono', monospace;font-size:13.33px;line-height:13.33px;color:#d4d4d4;white-space:pre">      <span style="color:#c586c0">if</span> <span style="color:#ffd700">(</span><span style="color:#d4d4d4">!</span><span style="color:#9cdcfe">res</span><span style="color:#d4d4d4">.</span><span style="color:#9cdcfe">ok</span><span style="color:#ffd700">)</span> <span style="color:#c586c0">throw</span> <span style="color:#569cd6">new</span> <span style="color:#4ec9b0">Error</span><span style="color:#ffd700">(</span><span style="color:#ffd700">)</span><span style="color:#d4d4d4">;</span></div>
<div style="left:20.0px;top:432.98px;font-family:'Liberation Mono', monospace;font-size:13.33px;line-height:13.33px;color:#6e7681;white-space:pre">133</div>
<div style="left:71px;top:432.98px;font-family:'Liberation Mono', monospace;font-size:13.33px;line-height:13.33px;color:#d4d4d4;white-space:pre">      <span style="color:#569cd6">const</span> <span style="color:#ffd700">{</span> <span style="color:#4fc1ff">uploadUrl</span> <span style="color:#ffd700">}</span> <span style="color:#d4d4d4">=</span> <span style="color:#c586c0">await</span> <span style="color:#9cdcfe">res</span><span style="color:#d4d4d4">.</span><span style="color:#dcdcaa">json</span><span style="color:#ffd700">(</span><span style="color:#ffd700">)</span><span style="color:#d4d4d4">;</span></div>
<div style="left:20.0px;top:452.78px;font-family:'Liberation Mono', monospace;font-size:13.33px;line-height:13.33px;color:#6e7681;white-space:pre">134</div>
<div style="left:20.0px;top:472.58px;font-family:'Liberation Mono', monospace;font-size:13.33px;line-height:13.33px;color:#6e7681;white-space:pre">135</div>
<div style="left:71px;top:472.58px;font-family:'Liberation Mono', monospace;font-size:13.33px;line-height:13.33px;color:#d4d4d4;white-space:pre">      <span style="color:#569cd6">const</span> <span style="color:#4fc1ff">img</span> <span style="color:#d4d4d4">=</span> <span style="color:#c586c0">await</span> <span style="color:#dcdcaa">fetch</span><span style="color:#ffd700">(</span><span style="color:#9cdcfe">photo</span><span style="color:#ffd700">)</span><span style="color:#d4d4d4">;</span></div>
<div style="left:20.0px;top:492.38px;font-family:'Liberation Mono', monospace;font-size:13.33px;line-height:13.33px;color:#6e7681;white-space:pre">136</div>
<div style="left:71px;top:492.38px;font-family:'Liberation Mono', monospace;font-size:13.33px;line-height:13.33px;color:#d4d4d4;white-space:pre">      <span style="color:#569cd6">const</span> <span style="color:#4fc1ff">blob</span> <span style="color:#d4d4d4">=</span> <span style="color:#c586c0">await</span> <span style="color:#9cdcfe">img</span><span style="color:#d4d4d4">.</span><span style="color:#dcdcaa">blob</span><span style="color:#ffd700">(</span><span style="color:#ffd700">)</span><span style="color:#d4d4d4">;</span></div>
<div style="left:20.0px;top:512.18px;font-family:'Liberation Mono', monospace;font-size:13.33px;line-height:13.33px;color:#6e7681;white-space:pre">137</div>
<div style="left:20.0px;top:531.98px;font-family:'Liberation Mono', monospace;font-size:13.33px;line-height:13.33px;color:#6e7681;white-space:pre">138</div>
<div style="left:71px;top:531.98px;font-family:'Liberation Mono', monospace;font-size:13.33px;line-height:13.33px;color:#d4d4d4;white-space:pre">      <span style="color:#569cd6">const</span> <span style="color:#4fc1ff">up</span> <span style="color:#d4d4d4">=</span> <span style="color:#c586c0">await</span> <span style="color:#dcdcaa">fetch</span><span style="color:#ffd700">(</span><span style="color:#9cdcfe">uploadUrl</span><span style="color:#d4d4d4">,</span> <span style="color:#da70d6">{</span></div>
<div style="left:20.0px;top:551.78px;font-family:'Liberation Mono', monospace;font-size:13.33px;line-height:13.33px;color:#6e7681;white-space:pre">139</div>
<div style="left:71px;top:551.78px;font-family:'Liberation Mono', monospace;font-size:13.33px;line-height:13.33px;color:#d4d4d4;white-space:pre">        <span style="color:#9cdcfe">method</span><span style="color:#d4d4d4">:</span> <span style="color:#ce9178">"PUT"</span><span style="color:#d4d4d4">,</span></div>
<div style="left:20.0px;top:571.58px;font-family:'Liberation Mono', monospace;font-size:13.33px;line-height:13.33px;color:#6e7681;white-space:pre">140</div>
<div style="left:71px;top:571.58px;font-family:'Liberation Mono', monospace;font-size:13.33px;line-height:13.33px;color:#d4d4d4;white-space:pre">        <span style="color:#9cdcfe">headers</span><span style="color:#d4d4d4">:</span> <span style="color:#179fff">{</span> <span style="color:#ce9178">"Content-Type"</span><span style="color:#d4d4d4">:</span> <span style="color:#ce9178">"image/jpeg"</span> <span style="color:#179fff">}</span><span style="color:#d4d4d4">,</span></div>
<div style="left:20.0px;top:591.38px;font-family:'Liberation Mono', monospace;font-size:13.33px;line-height:13.33px;color:#6e7681;white-space:pre">141</div>
<div style="left:71px;top:591.38px;font-family:'Liberation Mono', monospace;font-size:13.33px;line-height:13.33px;color:#d4d4d4;white-space:pre">        <span style="color:#9cdcfe">body</span><span style="color:#d4d4d4">:</span> <span style="color:#9cdcfe">blob</span><span style="color:#d4d4d4">,</span></div>
<div style="left:20.0px;top:611.18px;font-family:'Liberation Mono', monospace;font-size:13.33px;line-height:13.33px;color:#6e7681;white-space:pre">142</div>
<div style="left:71px;top:611.18px;font-family:'Liberation Mono', monospace;font-size:13.33px;line-height:13.33px;color:#d4d4d4;white-space:pre">      <span style="color:#da70d6">}</span><span style="color:#ffd700">)</span><span style="color:#d4d4d4">;</span></div>
<div style="left:20.0px;top:630.98px;font-family:'Liberation Mono', monospace;font-size:13.33px;line-height:13.33px;color:#6e7681;white-space:pre">143</div>
<div style="left:20.0px;top:650.78px;font-family:'Liberation Mono', monospace;font-size:13.33px;line-height:13.33px;color:#6e7681;white-space:pre">144</div>
<div style="left:71px;top:650.78px;font-family:'Liberation Mono', monospace;font-size:13.33px;line-height:13.33px;color:#d4d4d4;white-space:pre">      <span style="color:#c586c0">if</span> <span style="color:#ffd700">(</span><span style="color:#d4d4d4">!</span><span style="color:#9cdcfe">up</span><span style="color:#d4d4d4">.</span><span style="color:#9cdcfe">ok</span><span style="color:#ffd700">)</span> <span style="color:#c586c0">throw</span> <span style="color:#569cd6">new</span> <span style="color:#4ec9b0">Error</span><span style="color:#ffd700">(</span><span style="color:#ffd700">)</span><span style="color:#d4d4d4">;</span></div>
<div style="left:20.0px;top:670.58px;font-family:'Liberation Mono', monospace;font-size:13.33px;line-height:13.33px;color:#6e7681;white-space:pre">145</div>
<div style="left:20.0px;top:690.38px;font-family:'Liberation Mono', monospace;font-size:13.33px;line-height:13.33px;color:#6e7681;white-space:pre">146</div>
<div style="left:71px;top:690.38px;font-family:'Liberation Mono', monospace;font-size:13.33px;line-height:13.33px;color:#d4d4d4;white-space:pre">      <span style="color:#6a9955">// </span><span style="display:inline-block;position:relative;width:20px;height:0px"><svg width="14" height="14" viewBox="0 0 14 14" style="position:absolute;left:3px;top:-12.4px"><rect x="0" y="0" width="14" height="14" rx="1" fill="#4fcf86"/><path d="M2.6 7.2 L5.6 10 L11.6 4" stroke="#ffffff" stroke-width="1.6" fill="none" stroke-linecap="round" stroke-linejoin="round"/></svg></span><span style="color:#6a9955"> Success</span></div>
<div style="left:20.0px;top:710.18px;font-family:'Liberation Mono', monospace;font-size:13.33px;line-height:13.33px;color:#6e7681;white-space:pre">147</div>
<div style="left:71px;top:710.18px;font-family:'Liberation Mono', monospace;font-size:13.33px;line-height:13.33px;color:#d4d4d4;white-space:pre">      <span style="color:#dcdcaa">setPhoto</span><span style="color:#ffd700">(</span><span style="color:#569cd6">null</span><span style="color:#ffd700">)</span><span style="color:#d4d4d4">;</span></div>
<div style="left:20.0px;top:729.98px;font-family:'Liberation Mono', monospace;font-size:13.33px;line-height:13.33px;color:#6e7681;white-space:pre">148</div>
<div style="left:71px;top:729.98px;font-family:'Liberation Mono', monospace;font-size:13.33px;line-height:13.33px;color:#d4d4d4;white-space:pre">      <span style="color:#dcdcaa">setUploading</span><span style="color:#ffd700">(</span><span style="color:#569cd6">false</span><span style="color:#ffd700">)</span><span style="color:#d4d4d4">;</span></div>
<div style="left:20.0px;top:749.78px;font-family:'Liberation Mono', monospace;font-size:13.33px;line-height:13.33px;color:#6e7681;white-space:pre">149</div>
<div style="left:20.0px;top:769.58px;font-family:'Liberation Mono', monospace;font-size:13.33px;line-height:13.33px;color:#6e7681;white-space:pre">150</div>
<div style="left:71px;top:769.58px;font-family:'Liberation Mono', monospace;font-size:13.33px;line-height:13.33px;color:#d4d4d4;white-space:pre">      <span style="color:#9cdcfe">navigation</span><span style="color:#d4d4d4">.</span><span style="color:#dcdcaa">replace</span><span style="color:#ffd700">(</span><span style="color:#ce9178">"Feed"</span><span style="color:#ffd700">)</span><span style="color:#d4d4d4">;</span> <span style="color:#6a9955">// </span><span style="display:inline-block;position:relative;width:20px;height:0px"><svg width="12" height="15" viewBox="0 0 12 15" style="position:absolute;left:4.5px;top:-13px"><defs><linearGradient id="fg" x1="0" y1="0" x2="0.3" y2="1"><stop offset="0" stop-color="#f0473a"/><stop offset="0.55" stop-color="#f57a2a"/><stop offset="1" stop-color="#fdc62e"/></linearGradient></defs><path d="M6.8 0.3 Q7.2 2.2 9 4.2 Q11.8 7.2 11.5 10.3 Q11 14.6 6 14.8 Q0.8 14.6 0.3 10 Q0.1 7 2.3 4.6 Q2.6 6.3 3.6 6.8 Q3.8 3.2 6.8 0.3 Z" fill="url(#fg)"/><ellipse cx="6.5" cy="11" rx="3.3" ry="3.4" fill="#ffd23a" opacity="0.7"/></svg></span><span style="color:#6a9955"> direct redirect</span></div>
<div style="left:20.0px;top:789.38px;font-family:'Liberation Mono', monospace;font-size:13.33px;line-height:13.33px;color:#6e7681;white-space:pre">151</div>
<div style="left:71px;top:789.38px;font-family:'Liberation Mono', monospace;font-size:13.33px;line-height:13.33px;color:#d4d4d4;white-space:pre">    <span style="color:#179fff">}</span> <span style="color:#c586c0">catch</span> <span style="color:#179fff">(</span><span style="color:#9cdcfe">err</span><span style="color:#179fff">)</span> <span style="color:#179fff">{</span></div>
<div style="left:20.0px;top:809.18px;font-family:'Liberation Mono', monospace;font-size:13.33px;line-height:13.33px;color:#6e7681;white-space:pre">152</div>
<div style="left:71px;top:809.18px;font-family:'Liberation Mono', monospace;font-size:13.33px;line-height:13.33px;color:#d4d4d4;white-space:pre">      <span style="color:#dcdcaa">setUploading</span><span style="color:#ffd700">(</span><span style="color:#569cd6">false</span><span style="color:#ffd700">)</span><span style="color:#d4d4d4">;</span></div>
<div style="left:20.0px;top:828.98px;font-family:'Liberation Mono', monospace;font-size:13.33px;line-height:13.33px;color:#6e7681;white-space:pre">153</div>
<div style="left:71px;top:828.98px;font-family:'Liberation Mono', monospace;font-size:13.33px;line-height:13.33px;color:#d4d4d4;white-space:pre">      <span style="color:#dcdcaa">showError</span><span style="color:#ffd700">(</span><span style="color:#ce9178">"Please Try again."</span><span style="color:#ffd700">)</span><span style="color:#d4d4d4">;</span></div>
<div style="left:20.0px;top:848.78px;font-family:'Liberation Mono', monospace;font-size:13.33px;line-height:13.33px;color:#6e7681;white-space:pre">154</div>
<div style="left:71px;top:848.78px;font-family:'Liberation Mono', monospace;font-size:13.33px;line-height:13.33px;color:#d4d4d4;white-space:pre">    <span style="color:#179fff">}</span></div>
<div style="left:20.0px;top:868.58px;font-family:'Liberation Mono', monospace;font-size:13.33px;line-height:13.33px;color:#6e7681;white-space:pre">155</div>
<div style="left:71px;top:868.58px;font-family:'Liberation Mono', monospace;font-size:13.33px;line-height:13.33px;color:#d4d4d4;white-space:pre">  <span style="color:#da70d6">}</span></div>
<div style="left:20.0px;top:888.38px;font-family:'Liberation Mono', monospace;font-size:13.33px;line-height:13.33px;color:#6e7681;white-space:pre">156</div>
</div>
<div style="left:442.5px;top:85.50px;font-family:'Liberation Sans', sans-serif;font-size:13px;line-height:13px;color:#a9a9a9;white-space:pre;transform:scaleX(0.98);transform-origin:0 0;">src</div>
<svg style="left:465px;top:85px;" width="7" height="12" viewBox="0 0 7 12"><path d="M1 1 L6 6 L1 11" stroke="#a9a9a9" stroke-width="1.1" fill="none"/></svg>
<div style="left:475.8px;top:85.50px;font-family:'Liberation Sans', sans-serif;font-size:13px;line-height:13px;color:#a9a9a9;white-space:pre;transform:scaleX(0.98);transform-origin:0 0;">screens</div>
<svg style="left:526px;top:85px;" width="7" height="12" viewBox="0 0 7 12"><path d="M1 1 L6 6 L1 11" stroke="#a9a9a9" stroke-width="1.1" fill="none"/></svg>
<div style="left:536.7px;top:85.50px;font-family:'Liberation Sans', sans-serif;font-size:13px;line-height:13px;color:#a9a9a9;white-space:pre;transform:scaleX(0.98);transform-origin:0 0;">CameraScreen</div>
<svg style="left:627px;top:85px;" width="7" height="12" viewBox="0 0 7 12"><path d="M1 1 L6 6 L1 11" stroke="#a9a9a9" stroke-width="1.1" fill="none"/></svg>
<div style="left:644px;top:86.11px;font-family:'Liberation Sans', sans-serif;font-size:10.5px;line-height:10.5px;color:#cbcb41;white-space:pre;font-weight:700;transform:scaleX(0.9);transform-origin:0 0;">JS</div>
<div style="left:662.5px;top:85.50px;font-family:'Liberation Sans', sans-serif;font-size:13px;line-height:13px;color:#a9a9a9;white-space:pre;transform:scaleX(0.98);transform-origin:0 0;">CameraScreen.js</div>
<svg style="left:765px;top:85px;" width="7" height="12" viewBox="0 0 7 12"><path d="M1 1 L6 6 L1 11" stroke="#a9a9a9" stroke-width="1.1" fill="none"/></svg>
<svg style="left:777px;top:84px;" width="16" height="16" viewBox="0 0 16 16"><path d="M8 1 L14.5 4.5 V11.5 L8 15 L1.5 11.5 V4.5 Z M1.5 4.5 L8 8 L14.5 4.5 M8 8 V15" stroke="#b180d7" stroke-width="1.2" fill="none" stroke-linejoin="round"/></svg>
<div style="left:796px;top:85.50px;font-family:'Liberation Sans', sans-serif;font-size:13px;line-height:13px;color:#a9a9a9;white-space:pre;transform:scaleX(0.98);transform-origin:0 0;">CameraScreen</div>
<div style="left:426px;top:102px;width:1358px;height:21px;background:#1f1f1f;"></div>
<div style="left:454px;top:107.38px;font-family:'Liberation Mono', monospace;font-size:13.33px;line-height:13.33px;color:#6e7681;white-space:pre">22</div>
<div style="left:497px;top:107.38px;font-family:'Liberation Mono', monospace;font-size:13.33px;line-height:13.33px;color:#d4d4d4;white-space:pre"><span style="color:#c586c0">export</span> <span style="color:#c586c0">default</span> <span style="color:#569cd6">function</span> <span style="color:#dcdcaa">CameraScreen</span><span style="color:#ffd700">(</span><span style="color:#da70d6">{</span> <span style="color:#9cdcfe">navigation</span> <span style="color:#da70d6">}</span><span style="color:#ffd700">)</span> <span style="color:#ffd700">{</span></div>
<div style="left:428px;top:123px;width:1356px;height:4px;background:linear-gradient(rgba(0,0,0,0.95),rgba(0,0,0,0));"></div>
<div style="left:1905px;top:102px;width:1px;height:895px;background:#2b2b2b;"></div>
<div style="left:1906px;top:255px;width:14px;height:61px;background:#464646;"></div>
<div style="left:1906px;top:201px;width:14px;height:2px;background:#a0a0a0;"></div>
<svg style="left:1793px;top:101px;opacity:0.58" width="100" height="895" viewBox="0 0 100 895"><defs><pattern id="mmtx" width="5" height="2" patternUnits="userSpaceOnUse"><rect x="0" y="0" width="1" height="2" fill="#fff" fill-opacity="0.95"/><rect x="1" y="0" width="1" height="2" fill="#fff" fill-opacity="0.55"/><rect x="2" y="0" width="1" height="2" fill="#fff" fill-opacity="0.85"/><rect x="3" y="0" width="1" height="2" fill="#fff" fill-opacity="0.45"/><rect x="4" y="0" width="1" height="2" fill="#fff" fill-opacity="0.75"/></pattern><mask id="mmmask" maskUnits="userSpaceOnUse" x="0" y="0" width="100" height="895"><rect x="0" y="0" width="100" height="895" fill="url(#mmtx)"/></mask></defs><g mask="url(#mmmask)"><rect x="2" y="0.3" width="5" height="1.5" fill="#569cd6"/><rect x="8" y="0.3" width="8" height="1.5" fill="#9cdcfe"/><rect x="17" y="0.3" width="1" height="1.5" fill="#d4d4d4"/><rect x="19" y="0.3" width="6" height="1.5" fill="#dcdcaa"/><rect x="25" y="0.3" width="1" height="1.5" fill="#d4d4d4"/><rect x="26" y="0.3" width="3" height="1.5" fill="#569cd6"/><rect x="30" y="0.3" width="8" height="1.5" fill="#4ec9b0"/><rect x="38" y="0.3" width="1" height="1.5" fill="#d4d4d4"/><rect x="39" y="0.3" width="5" height="1.5" fill="#dcdcaa"/><rect x="44" y="0.3" width="1" height="1.5" fill="#d4d4d4"/><rect x="45" y="0.3" width="1" height="1.5" fill="#b5cea8"/><rect x="46" y="0.3" width="1" height="1.5" fill="#d4d4d4"/><rect x="47" y="0.3" width="1" height="1.5" fill="#d4d4d4"/><rect x="48" y="0.3" width="1" height="1.5" fill="#d4d4d4"/><rect x="49" y="0.3" width="7" height="1.5" fill="#9cdcfe"/><rect x="56" y="0.3" width="1" height="1.5" fill="#d4d4d4"/><rect x="2" y="2.3" width="5" height="1.5" fill="#569cd6"/><rect x="8" y="2.3" width="8" height="1.5" fill="#9cdcfe"/><rect x="17" y="2.3" width="1" height="1.5" fill="#d4d4d4"/><rect x="19" y="2.3" width="8" height="1.5" fill="#dcdcaa"/><rect x="27" y="2.3" width="1" height="1.5" fill="#d4d4d4"/><rect x="28" y="2.3" width="1" height="1.5" fill="#d4d4d4"/><rect x="29" y="2.3" width="1" height="1.5" fill="#d4d4d4"/><rect x="2" y="6.3" width="9" height="1.5" fill="#dcdcaa"/><rect x="11" y="6.3" width="1" height="1.5" fill="#d4d4d4"/><rect x="12" y="6.3" width="1" height="1.5" fill="#d4d4d4"/><rect x="13" y="6.3" width="1" height="1.5" fill="#d4d4d4"/><rect x="15" y="6.3" width="1" height="1.5" fill="#d4d4d4"/><rect x="16" y="6.3" width="1" height="1.5" fill="#d4d4d4"/><rect x="18" y="6.3" width="1" height="1.5" fill="#d4d4d4"/><rect x="4" y="8.3" width="2" height="1.5" fill="#c586c0"/><rect x="7" y="8.3" width="1" height="1.5" fill="#d4d4d4"/><rect x="8" y="8.3" width="6" height="1.5" fill="#9cdcfe"/><rect x="14" y="8.3" width="1" height="1.5" fill="#d4d4d4"/><rect x="16" y="8.3" width="1" height="1.5" fill="#d4d4d4"/><rect x="6" y="10.3" width="8" height="1.5" fill="#9cdcfe"/><rect x="14" y="10.3" width="1" height="1.5" fill="#d4d4d4"/><rect x="15" y="10.3" width="8" height="1.5" fill="#dcdcaa"/><rect x="23" y="10.3" width="1" height="1.5" fill="#d4d4d4"/><rect x="24" y="10.3" width="1" height="1.5" fill="#b5cea8"/><rect x="25" y="10.3" width="1" height="1.5" fill="#d4d4d4"/><rect x="26" y="10.3" width="1" height="1.5" fill="#d4d4d4"/><rect x="6" y="14.3" width="5" height="1.5" fill="#569cd6"/><rect x="12" y="14.3" width="9" height="1.5" fill="#9cdcfe"/><rect x="22" y="14.3" width="1" height="1.5" fill="#d4d4d4"/><rect x="24" y="14.3" width="8" height="1.5" fill="#4ec9b0"/><rect x="32" y="14.3" width="1" height="1.5" fill="#d4d4d4"/><rect x="33" y="14.3" width="4" height="1.5" fill="#dcdcaa"/><rect x="37" y="14.3" width="1" height="1.5" fill="#d4d4d4"/><rect x="8" y="16.3" width="8" height="1.5" fill="#4ec9b0"/><rect x="16" y="16.3" width="1" height="1.5" fill="#d4d4d4"/><rect x="17" y="16.3" width="8" height="1.5" fill="#dcdcaa"/><rect x="25" y="16.3" width="1" height="1.5" fill="#d4d4d4"/><rect x="26" y="16.3" width="1" height="1.5" fill="#d4d4d4"/><rect x="10" y="18.3" width="8" height="1.5" fill="#4ec9b0"/><rect x="18" y="18.3" width="1" height="1.5" fill="#d4d4d4"/><rect x="19" y="18.3" width="6" height="1.5" fill="#dcdcaa"/><rect x="25" y="18.3" width="1" height="1.5" fill="#d4d4d4"/><rect x="26" y="18.3" width="5" height="1.5" fill="#9cdcfe"/><rect x="31" y="18.3" width="1" height="1.5" fill="#d4d4d4"/><rect x="33" y="18.3" width="1" height="1.5" fill="#d4d4d4"/><rect x="12" y="20.3" width="7" height="1.5" fill="#9cdcfe"/><rect x="19" y="20.3" width="1" height="1.5" fill="#d4d4d4"/><rect x="21" y="20.3" width="1" height="1.5" fill="#b5cea8"/><rect x="22" y="20.3" width="1" height="1.5" fill="#d4d4d4"/><rect x="12" y="22.3" width="8" height="1.5" fill="#9cdcfe"/><rect x="20" y="22.3" width="1" height="1.5" fill="#d4d4d4"/><rect x="22" y="22.3" width="3" height="1.5" fill="#b5cea8"/><rect x="25" y="22.3" width="1" height="1.5" fill="#d4d4d4"/><rect x="12" y="24.3" width="6" height="1.5" fill="#9cdcfe"/><rect x="18" y="24.3" width="1" height="1.5" fill="#d4d4d4"/><rect x="20" y="24.3" width="6" height="1.5" fill="#4ec9b0"/><rect x="26" y="24.3" width="1" height="1.5" fill="#d4d4d4"/><rect x="27" y="24.3" width="5" height="1.5" fill="#dcdcaa"/><rect x="32" y="24.3" width="1" height="1.5" fill="#d4d4d4"/><rect x="33" y="24.3" width="6" height="1.5" fill="#4ec9b0"/><rect x="39" y="24.3" width="1" height="1.5" fill="#d4d4d4"/><rect x="40" y="24.3" width="4" height="1.5" fill="#9cdcfe"/><rect x="44" y="24.3" width="1" height="1.5" fill="#d4d4d4"/><rect x="45" y="24.3" width="1" height="1.5" fill="#d4d4d4"/><rect x="12" y="26.3" width="15" height="1.5" fill="#9cdcfe"/><rect x="27" y="26.3" width="1" height="1.5" fill="#d4d4d4"/><rect x="29" y="26.3" width="4" height="1.5" fill="#569cd6"/><rect x="33" y="26.3" width="1" height="1.5" fill="#d4d4d4"/><rect x="10" y="28.3" width="1" height="1.5" fill="#d4d4d4"/><rect x="11" y="28.3" width="1" height="1.5" fill="#d4d4d4"/><rect x="12" y="28.3" width="1" height="1.5" fill="#d4d4d4"/><rect x="10" y="30.3" width="8" height="1.5" fill="#4ec9b0"/><rect x="18" y="30.3" width="1" height="1.5" fill="#d4d4d4"/><rect x="19" y="30.3" width="6" height="1.5" fill="#dcdcaa"/><rect x="25" y="30.3" width="1" height="1.5" fill="#d4d4d4"/><rect x="26" y="30.3" width="5" height="1.5" fill="#9cdcfe"/><rect x="31" y="30.3" width="1" height="1.5" fill="#d4d4d4"/><rect x="33" y="30.3" width="1" height="1.5" fill="#d4d4d4"/><rect x="12" y="32.3" width="7" height="1.5" fill="#9cdcfe"/><rect x="19" y="32.3" width="1" height="1.5" fill="#d4d4d4"/><rect x="21" y="32.3" width="1" height="1.5" fill="#b5cea8"/><rect x="22" y="32.3" width="1" height="1.5" fill="#d4d4d4"/><rect x="12" y="34.3" width="8" height="1.5" fill="#9cdcfe"/><rect x="20" y="34.3" width="1" height="1.5" fill="#d4d4d4"/><rect x="22" y="34.3" width="3" height="1.5" fill="#b5cea8"/><rect x="25" y="34.3" width="1" height="1.5" fill="#d4d4d4"/><rect x="12" y="36.3" width="6" height="1.5" fill="#9cdcfe"/><rect x="18" y="36.3" width="1" height="1.5" fill="#d4d4d4"/><rect x="20" y="36.3" width="6" height="1.5" fill="#4ec9b0"/><rect x="26" y="36.3" width="1" height="1.5" fill="#d4d4d4"/><rect x="27" y="36.3" width="5" height="1.5" fill="#dcdcaa"/><rect x="32" y="36.3" width="1" height="1.5" fill="#d4d4d4"/><rect x="33" y="36.3" width="6" height="1.5" fill="#4ec9b0"/><rect x="39" y="36.3" width="1" height="1.5" fill="#d4d4d4"/><rect x="40" y="36.3" width="4" height="1.5" fill="#9cdcfe"/><rect x="44" y="36.3" width="1" height="1.5" fill="#d4d4d4"/><rect x="45" y="36.3" width="1" height="1.5" fill="#d4d4d4"/><rect x="12" y="38.3" width="15" height="1.5" fill="#9cdcfe"/><rect x="27" y="38.3" width="1" height="1.5" fill="#d4d4d4"/><rect x="29" y="38.3" width="4" height="1.5" fill="#569cd6"/><rect x="33" y="38.3" width="1" height="1.5" fill="#d4d4d4"/><rect x="10" y="40.3" width="1" height="1.5" fill="#d4d4d4"/><rect x="11" y="40.3" width="1" height="1.5" fill="#d4d4d4"/><rect x="12" y="40.3" width="1" height="1.5" fill="#d4d4d4"/><rect x="8" y="42.3" width="1" height="1.5" fill="#d4d4d4"/><rect x="9" y="42.3" width="1" height="1.5" fill="#d4d4d4"/><rect x="6" y="44.3" width="1" height="1.5" fill="#d4d4d4"/><rect x="7" y="44.3" width="1" height="1.5" fill="#d4d4d4"/><rect x="6" y="48.3" width="13" height="1.5" fill="#9cdcfe"/><rect x="19" y="48.3" width="1" height="1.5" fill="#d4d4d4"/><rect x="20" y="48.3" width="5" height="1.5" fill="#dcdcaa"/><rect x="25" y="48.3" width="1" height="1.5" fill="#d4d4d4"/><rect x="26" y="48.3" width="1" height="1.5" fill="#d4d4d4"/><rect x="27" y="48.3" width="1" height="1.5" fill="#d4d4d4"/><rect x="4" y="50.3" width="1" height="1.5" fill="#d4d4d4"/><rect x="4" y="54.3" width="6" height="1.5" fill="#c586c0"/><rect x="11" y="54.3" width="1" height="1.5" fill="#d4d4d4"/><rect x="12" y="54.3" width="1" height="1.5" fill="#d4d4d4"/><rect x="14" y="54.3" width="1" height="1.5" fill="#d4d4d4"/><rect x="15" y="54.3" width="1" height="1.5" fill="#d4d4d4"/><rect x="17" y="54.3" width="1" height="1.5" fill="#d4d4d4"/><rect x="6" y="56.3" width="13" height="1.5" fill="#9cdcfe"/><rect x="19" y="56.3" width="1" height="1.5" fill="#d4d4d4"/><rect x="20" y="56.3" width="4" height="1.5" fill="#dcdcaa"/><rect x="24" y="56.3" width="1" height="1.5" fill="#d4d4d4"/><rect x="25" y="56.3" width="1" height="1.5" fill="#d4d4d4"/><rect x="26" y="56.3" width="1" height="1.5" fill="#d4d4d4"/><rect x="4" y="58.3" width="1" height="1.5" fill="#d4d4d4"/><rect x="5" y="58.3" width="1" height="1.5" fill="#d4d4d4"/><rect x="2" y="60.3" width="1" height="1.5" fill="#d4d4d4"/><rect x="3" y="60.3" width="1" height="1.5" fill="#d4d4d4"/><rect x="5" y="60.3" width="1" height="1.5" fill="#d4d4d4"/><rect x="6" y="60.3" width="9" height="1.5" fill="#9cdcfe"/><rect x="15" y="60.3" width="1" height="1.5" fill="#d4d4d4"/><rect x="16" y="60.3" width="1" height="1.5" fill="#d4d4d4"/><rect x="17" y="60.3" width="1" height="1.5" fill="#d4d4d4"/><rect x="19" y="60.3" width="16" height="1.5" fill="#6a9955"/><rect x="2" y="68.3" width="5" height="1.5" fill="#569cd6"/><rect x="8" y="68.3" width="1" height="1.5" fill="#d4d4d4"/><rect x="9" y="68.3" width="10" height="1.5" fill="#9cdcfe"/><rect x="19" y="68.3" width="1" height="1.5" fill="#d4d4d4"/><rect x="21" y="68.3" width="11" height="1.5" fill="#9cdcfe"/><rect x="32" y="68.3" width="1" height="1.5" fill="#d4d4d4"/><rect x="34" y="68.3" width="1" height="1.5" fill="#d4d4d4"/><rect x="36" y="68.3" width="20" height="1.5" fill="#dcdcaa"/><rect x="56" y="68.3" width="1" height="1.5" fill="#d4d4d4"/><rect x="57" y="68.3" width="1" height="1.5" fill="#d4d4d4"/><rect x="58" y="68.3" width="1" height="1.5" fill="#d4d4d4"/><rect x="2" y="72.3" width="2" height="1.5" fill="#c586c0"/><rect x="5" y="72.3" width="1" height="1.5" fill="#d4d4d4"/><rect x="6" y="72.3" width="10" height="1.5" fill="#9cdcfe"/><rect x="16" y="72.3" width="1" height="1.5" fill="#d4d4d4"/><rect x="17" y="72.3" width="1" height="1.5" fill="#d4d4d4"/><rect x="18" y="72.3" width="7" height="1.5" fill="#9cdcfe"/><rect x="26" y="72.3" width="1" height="1.5" fill="#d4d4d4"/><rect x="27" y="72.3" width="1" height="1.5" fill="#d4d4d4"/><rect x="28" y="72.3" width="1" height="1.5" fill="#d4d4d4"/><rect x="30" y="72.3" width="5" height="1.5" fill="#569cd6"/><rect x="35" y="72.3" width="1" height="1.5" fill="#d4d4d4"/><rect x="37" y="72.3" width="1" height="1.5" fill="#d4d4d4"/><rect x="4" y="74.3" width="6" height="1.5" fill="#c586c0"/><rect x="11" y="74.3" width="1" height="1.5" fill="#d4d4d4"/><rect x="6" y="76.3" width="1" height="1.5" fill="#d4d4d4"/><rect x="7" y="76.3" width="4" height="1.5" fill="#4ec9b0"/><rect x="12" y="76.3" width="5" height="1.5" fill="#9cdcfe"/><rect x="17" y="76.3" width="1" height="1.5" fill="#d4d4d4"/><rect x="18" y="76.3" width="1" height="1.5" fill="#d4d4d4"/><rect x="19" y="76.3" width="6" height="1.5" fill="#9cdcfe"/><rect x="25" y="76.3" width="1" height="1.5" fill="#d4d4d4"/><rect x="26" y="76.3" width="6" height="1.5" fill="#9cdcfe"/><rect x="32" y="76.3" width="1" height="1.5" fill="#d4d4d4"/><rect x="33" y="76.3" width="1" height="1.5" fill="#d4d4d4"/><rect x="8" y="78.3" width="1" height="1.5" fill="#d4d4d4"/><rect x="9" y="78.3" width="4" height="1.5" fill="#4ec9b0"/><rect x="14" y="78.3" width="5" height="1.5" fill="#9cdcfe"/><rect x="19" y="78.3" width="1" height="1.5" fill="#d4d4d4"/><rect x="20" y="78.3" width="1" height="1.5" fill="#d4d4d4"/><rect x="21" y="78.3" width="6" height="1.5" fill="#9cdcfe"/><rect x="27" y="78.3" width="1" height="1.5" fill="#d4d4d4"/><rect x="28" y="78.3" width="4" height="1.5" fill="#9cdcfe"/><rect x="32" y="78.3" width="1" height="1.5" fill="#d4d4d4"/><rect x="33" y="78.3" width="1" height="1.5" fill="#d4d4d4"/><rect x="34" y="78.3" width="2" height="1.5" fill="#9cdcfe"/><rect x="37" y="78.3" width="4" height="1.5" fill="#9cdcfe"/><rect x="42" y="78.3" width="6" height="1.5" fill="#9cdcfe"/><rect x="49" y="78.3" width="6" height="1.5" fill="#9cdcfe"/><rect x="56" y="78.3" width="2" height="1.5" fill="#9cdcfe"/><rect x="59" y="78.3" width="8" height="1.5" fill="#9cdcfe"/><rect x="67" y="78.3" width="1" height="1.5" fill="#d4d4d4"/><rect x="68" y="78.3" width="1" height="1.5" fill="#d4d4d4"/><rect x="69" y="78.3" width="4" height="1.5" fill="#4ec9b0"/><rect x="73" y="78.3" width="1" height="1.5" fill="#d4d4d4"/><rect x="8" y="80.3" width="1" height="1.5" fill="#d4d4d4"/><rect x="9" y="80.3" width="16" height="1.5" fill="#4ec9b0"/><rect x="26" y="80.3" width="5" height="1.5" fill="#9cdcfe"/><rect x="31" y="80.3" width="1" height="1.5" fill="#d4d4d4"/><rect x="32" y="80.3" width="1" height="1.5" fill="#d4d4d4"/><rect x="33" y="80.3" width="6" height="1.5" fill="#9cdcfe"/><rect x="39" y="80.3" width="1" height="1.5" fill="#d4d4d4"/><rect x="40" y="80.3" width="13" height="1.5" fill="#9cdcfe"/><rect x="53" y="80.3" width="1" height="1.5" fill="#d4d4d4"/><rect x="55" y="80.3" width="7" height="1.5" fill="#9cdcfe"/><rect x="62" y="80.3" width="1" height="1.5" fill="#d4d4d4"/><rect x="63" y="80.3" width="1" height="1.5" fill="#d4d4d4"/><rect x="64" y="80.3" width="17" height="1.5" fill="#9cdcfe"/><rect x="81" y="80.3" width="1" height="1.5" fill="#d4d4d4"/><rect x="82" y="80.3" width="1" height="1.5" fill="#d4d4d4"/><rect x="10" y="82.3" width="1" height="1.5" fill="#d4d4d4"/><rect x="11" y="82.3" width="4" height="1.5" fill="#4ec9b0"/><rect x="16" y="82.3" width="5" height="1.5" fill="#9cdcfe"/><rect x="21" y="82.3" width="1" height="1.5" fill="#d4d4d4"/><rect x="22" y="82.3" width="1" height="1.5" fill="#d4d4d4"/><rect x="23" y="82.3" width="6" height="1.5" fill="#9cdcfe"/><rect x="29" y="82.3" width="1" height="1.5" fill="#d4d4d4"/><rect x="30" y="82.3" width="14" height="1.5" fill="#9cdcfe"/><rect x="44" y="82.3" width="1" height="1.5" fill="#d4d4d4"/><rect x="45" y="82.3" width="1" height="1.5" fill="#d4d4d4"/><rect x="46" y="82.3" width="5" height="1.5" fill="#9cdcfe"/><rect x="52" y="82.3" width="10" height="1.5" fill="#9cdcfe"/><rect x="62" y="82.3" width="1" height="1.5" fill="#d4d4d4"/><rect x="63" y="82.3" width="1" height="1.5" fill="#d4d4d4"/><rect x="64" y="82.3" width="4" height="1.5" fill="#4ec9b0"/><rect x="68" y="82.3" width="1" height="1.5" fill="#d4d4d4"/><rect x="8" y="84.3" width="1" height="1.5" fill="#d4d4d4"/><rect x="9" y="84.3" width="1" height="1.5" fill="#d4d4d4"/><rect x="10" y="84.3" width="16" height="1.5" fill="#4ec9b0"/><rect x="26" y="84.3" width="1" height="1.5" fill="#d4d4d4"/><rect x="6" y="86.3" width="1" height="1.5" fill="#d4d4d4"/><rect x="7" y="86.3" width="1" height="1.5" fill="#d4d4d4"/><rect x="8" y="86.3" width="4" height="1.5" fill="#4ec9b0"/><rect x="12" y="86.3" width="1" height="1.5" fill="#d4d4d4"/><rect x="4" y="88.3" width="1" height="1.5" fill="#d4d4d4"/><rect x="5" y="88.3" width="1" height="1.5" fill="#d4d4d4"/><rect x="2" y="90.3" width="1" height="1.5" fill="#d4d4d4"/><rect x="2" y="94.3" width="5" height="1.5" fill="#569cd6"/><rect x="8" y="94.3" width="8" height="1.5" fill="#569cd6"/><rect x="17" y="94.3" width="9" height="1.5" fill="#dcdcaa"/><rect x="26" y="94.3" width="1" height="1.5" fill="#d4d4d4"/><rect x="27" y="94.3" width="1" height="1.5" fill="#d4d4d4"/><rect x="29" y="94.3" width="1" height="1.5" fill="#d4d4d4"/><rect x="4" y="96.3" width="5" height="1.5" fill="#569cd6"/><rect x="10" y="96.3" width="3" height="1.5" fill="#9cdcfe"/><rect x="14" y="96.3" width="1" height="1.5" fill="#d4d4d4"/><rect x="16" y="96.3" width="5" height="1.5" fill="#c586c0"/><rect x="22" y="96.3" width="9" height="1.5" fill="#9cdcfe"/><rect x="31" y="96.3" width="1" height="1.5" fill="#d4d4d4"/><rect x="32" y="96.3" width="7" height="1.5" fill="#9cdcfe"/><rect x="39" y="96.3" width="1" height="1.5" fill="#d4d4d4"/><rect x="40" y="96.3" width="16" height="1.5" fill="#dcdcaa"/><rect x="56" y="96.3" width="1" height="1.5" fill="#d4d4d4"/><rect x="57" y="96.3" width="1" height="1.5" fill="#d4d4d4"/><rect x="59" y="96.3" width="7" height="1.5" fill="#9cdcfe"/><rect x="66" y="96.3" width="1" height="1.5" fill="#d4d4d4"/><rect x="68" y="96.3" width="3" height="1.5" fill="#b5cea8"/><rect x="72" y="96.3" width="1" height="1.5" fill="#d4d4d4"/><rect x="73" y="96.3" width="1" height="1.5" fill="#d4d4d4"/><rect x="74" y="96.3" width="1" height="1.5" fill="#d4d4d4"/><rect x="4" y="98.3" width="8" height="1.5" fill="#dcdcaa"/><rect x="12" y="98.3" width="1" height="1.5" fill="#d4d4d4"/><rect x="13" y="98.3" width="3" height="1.5" fill="#9cdcfe"/><rect x="16" y="98.3" width="1" height="1.5" fill="#d4d4d4"/><rect x="17" y="98.3" width="3" height="1.5" fill="#9cdcfe"/><rect x="20" y="98.3" width="1" height="1.5" fill="#d4d4d4"/><rect x="21" y="98.3" width="1" height="1.5" fill="#d4d4d4"/><rect x="2" y="100.3" width="1" height="1.5" fill="#d4d4d4"/><rect x="2" y="104.3" width="5" height="1.5" fill="#569cd6"/><rect x="8" y="104.3" width="8" height="1.5" fill="#569cd6"/><rect x="17" y="104.3" width="15" height="1.5" fill="#dcdcaa"/><rect x="32" y="104.3" width="1" height="1.5" fill="#d4d4d4"/><rect x="33" y="104.3" width="1" height="1.5" fill="#d4d4d4"/><rect x="35" y="104.3" width="1" height="1.5" fill="#d4d4d4"/><rect x="4" y="106.3" width="5" height="1.5" fill="#569cd6"/><rect x="10" y="106.3" width="1" height="1.5" fill="#d4d4d4"/><rect x="12" y="106.3" width="6" height="1.5" fill="#9cdcfe"/><rect x="19" y="106.3" width="1" height="1.5" fill="#d4d4d4"/><rect x="21" y="106.3" width="1" height="1.5" fill="#d4d4d4"/><rect x="23" y="106.3" width="5" height="1.5" fill="#c586c0"/><rect x="29" y="106.3" width="11" height="1.5" fill="#4ec9b0"/><rect x="40" y="106.3" width="1" height="1.5" fill="#d4d4d4"/><rect x="41" y="106.3" width="35" height="1.5" fill="#dcdcaa"/><rect x="76" y="106.3" width="1" height="1.5" fill="#d4d4d4"/><rect x="77" y="106.3" width="1" height="1.5" fill="#d4d4d4"/><rect x="78" y="106.3" width="1" height="1.5" fill="#d4d4d4"/><rect x="4" y="108.3" width="2" height="1.5" fill="#c586c0"/><rect x="7" y="108.3" width="1" height="1.5" fill="#d4d4d4"/><rect x="8" y="108.3" width="6" height="1.5" fill="#9cdcfe"/><rect x="15" y="108.3" width="1" height="1.5" fill="#d4d4d4"/><rect x="16" y="108.3" width="1" height="1.5" fill="#d4d4d4"/><rect x="17" y="108.3" width="1" height="1.5" fill="#d4d4d4"/><rect x="19" y="108.3" width="9" height="1.5" fill="#ce9178"/><rect x="28" y="108.3" width="1" height="1.5" fill="#d4d4d4"/><rect x="30" y="108.3" width="1" height="1.5" fill="#d4d4d4"/><rect x="6" y="110.3" width="9" height="1.5" fill="#dcdcaa"/><rect x="15" y="110.3" width="1" height="1.5" fill="#d4d4d4"/><rect x="16" y="110.3" width="33" height="1.5" fill="#ce9178"/><rect x="49" y="110.3" width="1" height="1.5" fill="#d4d4d4"/><rect x="50" y="110.3" width="1" height="1.5" fill="#d4d4d4"/><rect x="6" y="112.3" width="6" height="1.5" fill="#c586c0"/><rect x="12" y="112.3" width="1" height="1.5" fill="#d4d4d4"/><rect x="4" y="114.3" width="1" height="1.5" fill="#d4d4d4"/><rect x="4" y="118.3" width="5" height="1.5" fill="#569cd6"/><rect x="10" y="118.3" width="6" height="1.5" fill="#9cdcfe"/><rect x="17" y="118.3" width="1" height="1.5" fill="#d4d4d4"/><rect x="19" y="118.3" width="5" height="1.5" fill="#c586c0"/><rect x="25" y="118.3" width="11" height="1.5" fill="#4ec9b0"/><rect x="36" y="118.3" width="1" height="1.5" fill="#d4d4d4"/><rect x="37" y="118.3" width="23" height="1.5" fill="#dcdcaa"/><rect x="60" y="118.3" width="1" height="1.5" fill="#d4d4d4"/><rect x="61" y="118.3" width="1" height="1.5" fill="#d4d4d4"/><rect x="6" y="120.3" width="10" height="1.5" fill="#9cdcfe"/><rect x="16" y="120.3" width="1" height="1.5" fill="#d4d4d4"/><rect x="18" y="120.3" width="11" height="1.5" fill="#4ec9b0"/><rect x="29" y="120.3" width="1" height="1.5" fill="#d4d4d4"/><rect x="30" y="120.3" width="16" height="1.5" fill="#9cdcfe"/><rect x="46" y="120.3" width="1" height="1.5" fill="#d4d4d4"/><rect x="47" y="120.3" width="6" height="1.5" fill="#9cdcfe"/><rect x="53" y="120.3" width="1" height="1.5" fill="#d4d4d4"/><rect x="6" y="122.3" width="7" height="1.5" fill="#9cdcfe"/><rect x="13" y="122.3" width="1" height="1.5" fill="#d4d4d4"/><rect x="15" y="122.3" width="3" height="1.5" fill="#b5cea8"/><rect x="18" y="122.3" width="1" height="1.5" fill="#d4d4d4"/><rect x="4" y="124.3" width="1" height="1.5" fill="#d4d4d4"/><rect x="5" y="124.3" width="1" height="1.5" fill="#d4d4d4"/><rect x="6" y="124.3" width="1" height="1.5" fill="#d4d4d4"/><rect x="4" y="128.3" width="2" height="1.5" fill="#c586c0"/><rect x="7" y="128.3" width="1" height="1.5" fill="#d4d4d4"/><rect x="8" y="128.3" width="1" height="1.5" fill="#d4d4d4"/><rect x="9" y="128.3" width="6" height="1.5" fill="#9cdcfe"/><rect x="15" y="128.3" width="1" height="1.5" fill="#d4d4d4"/><rect x="16" y="128.3" width="8" height="1.5" fill="#9cdcfe"/><rect x="24" y="128.3" width="1" height="1.5" fill="#d4d4d4"/><rect x="26" y="128.3" width="1" height="1.5" fill="#d4d4d4"/><rect x="6" y="130.3" width="8" height="1.5" fill="#dcdcaa"/><rect x="14" y="130.3" width="1" height="1.5" fill="#d4d4d4"/><rect x="15" y="130.3" width="6" height="1.5" fill="#9cdcfe"/><rect x="21" y="130.3" width="1" height="1.5" fill="#d4d4d4"/><rect x="22" y="130.3" width="6" height="1.5" fill="#9cdcfe"/><rect x="28" y="130.3" width="1" height="1.5" fill="#d4d4d4"/><rect x="29" y="130.3" width="1" height="1.5" fill="#b5cea8"/><rect x="30" y="130.3" width="1" height="1.5" fill="#d4d4d4"/><rect x="31" y="130.3" width="1" height="1.5" fill="#d4d4d4"/><rect x="32" y="130.3" width="3" height="1.5" fill="#9cdcfe"/><rect x="35" y="130.3" width="1" height="1.5" fill="#d4d4d4"/><rect x="36" y="130.3" width="1" height="1.5" fill="#d4d4d4"/><rect x="4" y="132.3" width="1" height="1.5" fill="#d4d4d4"/><rect x="2" y="134.3" width="1" height="1.5" fill="#d4d4d4"/><rect x="2" y="142.3" width="8" height="1.5" fill="#569cd6"/><rect x="11" y="142.3" width="11" height="1.5" fill="#dcdcaa"/><rect x="22" y="142.3" width="1" height="1.5" fill="#d4d4d4"/><rect x="23" y="142.3" width="1" height="1.5" fill="#d4d4d4"/><rect x="25" y="142.3" width="1" height="1.5" fill="#d4d4d4"/><rect x="4" y="144.3" width="5" height="1.5" fill="#569cd6"/><rect x="10" y="144.3" width="1" height="1.5" fill="#9cdcfe"/><rect x="12" y="144.3" width="1" height="1.5" fill="#d4d4d4"/><rect x="14" y="144.3" width="4" height="1.5" fill="#9cdcfe"/><rect x="18" y="144.3" width="1" height="1.5" fill="#d4d4d4"/><rect x="19" y="144.3" width="11" height="1.5" fill="#9cdcfe"/><rect x="30" y="144.3" width="1" height="1.5" fill="#d4d4d4"/><rect x="4" y="146.3" width="6" height="1.5" fill="#c586c0"/><rect x="11" y="146.3" width="1" height="1.5" fill="#9cdcfe"/><rect x="12" y="146.3" width="1" height="1.5" fill="#d4d4d4"/><rect x="13" y="146.3" width="10" height="1.5" fill="#dcdcaa"/><rect x="23" y="146.3" width="1" height="1.5" fill="#d4d4d4"/><rect x="24" y="146.3" width="4" height="1.5" fill="#569cd6"/><rect x="28" y="146.3" width="1" height="1.5" fill="#d4d4d4"/><rect x="29" y="146.3" width="1" height="1.5" fill="#d4d4d4"/><rect x="2" y="148.3" width="1" height="1.5" fill="#d4d4d4"/><rect x="2" y="152.3" width="1" height="1.5" fill="#d4d4d4"/><rect x="2" y="156.3" width="5" height="1.5" fill="#569cd6"/><rect x="8" y="156.3" width="8" height="1.5" fill="#569cd6"/><rect x="17" y="156.3" width="11" height="1.5" fill="#dcdcaa"/><rect x="28" y="156.3" width="1" height="1.5" fill="#d4d4d4"/><rect x="29" y="156.3" width="1" height="1.5" fill="#d4d4d4"/><rect x="31" y="156.3" width="1" height="1.5" fill="#d4d4d4"/><rect x="4" y="158.3" width="3" height="1.5" fill="#c586c0"/><rect x="8" y="158.3" width="1" height="1.5" fill="#d4d4d4"/><rect x="6" y="160.3" width="5" height="1.5" fill="#569cd6"/><rect x="12" y="160.3" width="4" height="1.5" fill="#9cdcfe"/><rect x="17" y="160.3" width="1" height="1.5" fill="#d4d4d4"/><rect x="19" y="160.3" width="4" height="1.5" fill="#9cdcfe"/><rect x="23" y="160.3" width="1" height="1.5" fill="#d4d4d4"/><rect x="24" y="160.3" width="11" height="1.5" fill="#9cdcfe"/><rect x="35" y="160.3" width="1" height="1.5" fill="#d4d4d4"/><rect x="6" y="162.3" width="2" height="1.5" fill="#c586c0"/><rect x="9" y="162.3" width="1" height="1.5" fill="#d4d4d4"/><rect x="10" y="162.3" width="1" height="1.5" fill="#d4d4d4"/><rect x="11" y="162.3" width="4" height="1.5" fill="#9cdcfe"/><rect x="16" y="162.3" width="1" height="1.5" fill="#d4d4d4"/><rect x="17" y="162.3" width="1" height="1.5" fill="#d4d4d4"/><rect x="19" y="162.3" width="1" height="1.5" fill="#d4d4d4"/><rect x="20" y="162.3" width="5" height="1.5" fill="#9cdcfe"/><rect x="25" y="162.3" width="1" height="1.5" fill="#d4d4d4"/><rect x="27" y="162.3" width="6" height="1.5" fill="#c586c0"/><rect x="34" y="162.3" width="9" height="1.5" fill="#dcdcaa"/><rect x="43" y="162.3" width="1" height="1.5" fill="#d4d4d4"/><rect x="44" y="162.3" width="20" height="1.5" fill="#ce9178"/><rect x="64" y="162.3" width="1" height="1.5" fill="#d4d4d4"/><rect x="65" y="162.3" width="1" height="1.5" fill="#d4d4d4"/><rect x="6" y="166.3" width="12" height="1.5" fill="#dcdcaa"/><rect x="18" y="166.3" width="1" height="1.5" fill="#d4d4d4"/><rect x="19" y="166.3" width="4" height="1.5" fill="#569cd6"/><rect x="23" y="166.3" width="1" height="1.5" fill="#d4d4d4"/><rect x="24" y="166.3" width="1" height="1.5" fill="#d4d4d4"/><rect x="26" y="166.3" width="21" height="1.5" fill="#6a9955"/><rect x="6" y="170.3" width="5" height="1.5" fill="#569cd6"/><rect x="12" y="170.3" width="5" height="1.5" fill="#9cdcfe"/><rect x="18" y="170.3" width="1" height="1.5" fill="#d4d4d4"/><rect x="20" y="170.3" width="5" height="1.5" fill="#c586c0"/><rect x="26" y="170.3" width="13" height="1.5" fill="#dcdcaa"/><rect x="39" y="170.3" width="1" height="1.5" fill="#d4d4d4"/><rect x="40" y="170.3" width="1" height="1.5" fill="#d4d4d4"/><rect x="41" y="170.3" width="1" height="1.5" fill="#d4d4d4"/><rect x="6" y="172.3" width="2" height="1.5" fill="#c586c0"/><rect x="9" y="172.3" width="1" height="1.5" fill="#d4d4d4"/><rect x="10" y="172.3" width="1" height="1.5" fill="#d4d4d4"/><rect x="11" y="172.3" width="5" height="1.5" fill="#9cdcfe"/><rect x="16" y="172.3" width="1" height="1.5" fill="#d4d4d4"/><rect x="18" y="172.3" width="5" height="1.5" fill="#c586c0"/><rect x="24" y="172.3" width="3" height="1.5" fill="#569cd6"/><rect x="28" y="172.3" width="5" height="1.5" fill="#dcdcaa"/><rect x="33" y="172.3" width="1" height="1.5" fill="#d4d4d4"/><rect x="34" y="172.3" width="17" height="1.5" fill="#ce9178"/><rect x="51" y="172.3" width="1" height="1.5" fill="#d4d4d4"/><rect x="52" y="172.3" width="1" height="1.5" fill="#d4d4d4"/><rect x="6" y="176.3" width="5" height="1.5" fill="#569cd6"/><rect x="12" y="176.3" width="3" height="1.5" fill="#9cdcfe"/><rect x="16" y="176.3" width="1" height="1.5" fill="#d4d4d4"/><rect x="18" y="176.3" width="5" height="1.5" fill="#c586c0"/><rect x="24" y="176.3" width="5" height="1.5" fill="#dcdcaa"/><rect x="29" y="176.3" width="1" height="1.5" fill="#d4d4d4"/><rect x="30" y="176.3" width="28" height="1.5" fill="#ce9178"/><rect x="58" y="176.3" width="1" height="1.5" fill="#d4d4d4"/><rect x="60" y="176.3" width="1" height="1.5" fill="#d4d4d4"/><rect x="8" y="178.3" width="6" height="1.5" fill="#9cdcfe"/><rect x="14" y="178.3" width="1" height="1.5" fill="#d4d4d4"/><rect x="16" y="178.3" width="6" height="1.5" fill="#ce9178"/><rect x="22" y="178.3" width="1" height="1.5" fill="#d4d4d4"/><rect x="8" y="180.3" width="7" height="1.5" fill="#9cdcfe"/><rect x="15" y="180.3" width="1" height="1.5" fill="#d4d4d4"/><rect x="17" y="180.3" width="1" height="1.5" fill="#d4d4d4"/><rect x="10" y="182.3" width="14" height="1.5" fill="#ce9178"/><rect x="24" y="182.3" width="1" height="1.5" fill="#d4d4d4"/><rect x="26" y="182.3" width="18" height="1.5" fill="#ce9178"/><rect x="44" y="182.3" width="1" height="1.5" fill="#d4d4d4"/><rect x="10" y="184.3" width="13" height="1.5" fill="#9cdcfe"/><rect x="23" y="184.3" width="1" height="1.5" fill="#d4d4d4"/><rect x="25" y="184.3" width="17" height="1.5" fill="#ce9178"/><rect x="42" y="184.3" width="1" height="1.5" fill="#d4d4d4"/><rect x="8" y="186.3" width="1" height="1.5" fill="#d4d4d4"/><rect x="9" y="186.3" width="1" height="1.5" fill="#d4d4d4"/><rect x="6" y="188.3" width="1" height="1.5" fill="#d4d4d4"/><rect x="7" y="188.3" width="1" height="1.5" fill="#d4d4d4"/><rect x="8" y="188.3" width="1" height="1.5" fill="#d4d4d4"/><rect x="6" y="192.3" width="2" height="1.5" fill="#c586c0"/><rect x="9" y="192.3" width="1" height="1.5" fill="#d4d4d4"/><rect x="10" y="192.3" width="1" height="1.5" fill="#d4d4d4"/><rect x="11" y="192.3" width="3" height="1.5" fill="#9cdcfe"/><rect x="14" y="192.3" width="1" height="1.5" fill="#d4d4d4"/><rect x="15" y="192.3" width="2" height="1.5" fill="#9cdcfe"/><rect x="17" y="192.3" width="1" height="1.5" fill="#d4d4d4"/><rect x="19" y="192.3" width="5" height="1.5" fill="#c586c0"/><rect x="25" y="192.3" width="3" height="1.5" fill="#569cd6"/><rect x="29" y="192.3" width="5" height="1.5" fill="#dcdcaa"/><rect x="34" y="192.3" width="1" height="1.5" fill="#d4d4d4"/><rect x="35" y="192.3" width="1" height="1.5" fill="#d4d4d4"/><rect x="36" y="192.3" width="1" height="1.5" fill="#d4d4d4"/><rect x="6" y="194.3" width="5" height="1.5" fill="#569cd6"/><rect x="12" y="194.3" width="1" height="1.5" fill="#d4d4d4"/><rect x="14" y="194.3" width="9" height="1.5" fill="#9cdcfe"/><rect x="24" y="194.3" width="1" height="1.5" fill="#d4d4d4"/><rect x="26" y="194.3" width="1" height="1.5" fill="#d4d4d4"/><rect x="28" y="194.3" width="5" height="1.5" fill="#c586c0"/><rect x="34" y="194.3" width="3" height="1.5" fill="#9cdcfe"/><rect x="37" y="194.3" width="1" height="1.5" fill="#d4d4d4"/><rect x="38" y="194.3" width="4" height="1.5" fill="#dcdcaa"/><rect x="42" y="194.3" width="1" height="1.5" fill="#d4d4d4"/><rect x="43" y="194.3" width="1" height="1.5" fill="#d4d4d4"/><rect x="44" y="194.3" width="1" height="1.5" fill="#d4d4d4"/><rect x="6" y="198.3" width="5" height="1.5" fill="#569cd6"/><rect x="12" y="198.3" width="3" height="1.5" fill="#9cdcfe"/><rect x="16" y="198.3" width="1" height="1.5" fill="#d4d4d4"/><rect x="18" y="198.3" width="5" height="1.5" fill="#c586c0"/><rect x="24" y="198.3" width="5" height="1.5" fill="#dcdcaa"/><rect x="29" y="198.3" width="1" height="1.5" fill="#d4d4d4"/><rect x="30" y="198.3" width="5" height="1.5" fill="#9cdcfe"/><rect x="35" y="198.3" width="1" height="1.5" fill="#d4d4d4"/><rect x="36" y="198.3" width="1" height="1.5" fill="#d4d4d4"/><rect x="6" y="200.3" width="5" height="1.5" fill="#569cd6"/><rect x="12" y="200.3" width="4" height="1.5" fill="#9cdcfe"/><rect x="17" y="200.3" width="1" height="1.5" fill="#d4d4d4"/><rect x="19" y="200.3" width="5" height="1.5" fill="#c586c0"/><rect x="25" y="200.3" width="3" height="1.5" fill="#9cdcfe"/><rect x="28" y="200.3" width="1" height="1.5" fill="#d4d4d4"/><rect x="29" y="200.3" width="4" height="1.5" fill="#dcdcaa"/><rect x="33" y="200.3" width="1" height="1.5" fill="#d4d4d4"/><rect x="34" y="200.3" width="1" height="1.5" fill="#d4d4d4"/><rect x="35" y="200.3" width="1" height="1.5" fill="#d4d4d4"/><rect x="6" y="204.3" width="5" height="1.5" fill="#569cd6"/><rect x="12" y="204.3" width="2" height="1.5" fill="#9cdcfe"/><rect x="15" y="204.3" width="1" height="1.5" fill="#d4d4d4"/><rect x="17" y="204.3" width="5" height="1.5" fill="#c586c0"/><rect x="23" y="204.3" width="5" height="1.5" fill="#dcdcaa"/><rect x="28" y="204.3" width="1" height="1.5" fill="#d4d4d4"/><rect x="29" y="204.3" width="9" height="1.5" fill="#9cdcfe"/><rect x="38" y="204.3" width="1" height="1.5" fill="#d4d4d4"/><rect x="40" y="204.3" width="1" height="1.5" fill="#d4d4d4"/><rect x="8" y="206.3" width="6" height="1.5" fill="#9cdcfe"/><rect x="14" y="206.3" width="1" height="1.5" fill="#d4d4d4"/><rect x="16" y="206.3" width="5" height="1.5" fill="#ce9178"/><rect x="21" y="206.3" width="1" height="1.5" fill="#d4d4d4"/><rect x="8" y="208.3" width="7" height="1.5" fill="#9cdcfe"/><rect x="15" y="208.3" width="1" height="1.5" fill="#d4d4d4"/><rect x="17" y="208.3" width="1" height="1.5" fill="#d4d4d4"/><rect x="19" y="208.3" width="14" height="1.5" fill="#ce9178"/><rect x="33" y="208.3" width="1" height="1.5" fill="#d4d4d4"/><rect x="35" y="208.3" width="12" height="1.5" fill="#ce9178"/><rect x="48" y="208.3" width="1" height="1.5" fill="#d4d4d4"/><rect x="49" y="208.3" width="1" height="1.5" fill="#d4d4d4"/><rect x="8" y="210.3" width="4" height="1.5" fill="#9cdcfe"/><rect x="12" y="210.3" width="1" height="1.5" fill="#d4d4d4"/><rect x="14" y="210.3" width="4" height="1.5" fill="#9cdcfe"/><rect x="18" y="210.3" width="1" height="1.5" fill="#d4d4d4"/><rect x="6" y="212.3" width="1" height="1.5" fill="#d4d4d4"/><rect x="7" y="212.3" width="1" height="1.5" fill="#d4d4d4"/><rect x="8" y="212.3" width="1" height="1.5" fill="#d4d4d4"/><rect x="6" y="216.3" width="2" height="1.5" fill="#c586c0"/><rect x="9" y="216.3" width="1" height="1.5" fill="#d4d4d4"/><rect x="10" y="216.3" width="1" height="1.5" fill="#d4d4d4"/><rect x="11" y="216.3" width="2" height="1.5" fill="#9cdcfe"/><rect x="13" y="216.3" width="1" height="1.5" fill="#d4d4d4"/><rect x="14" y="216.3" width="2" height="1.5" fill="#9cdcfe"/><rect x="16" y="216.3" width="1" height="1.5" fill="#d4d4d4"/><rect x="18" y="216.3" width="5" height="1.5" fill="#c586c0"/><rect x="24" y="216.3" width="3" height="1.5" fill="#569cd6"/><rect x="28" y="216.3" width="5" height="1.5" fill="#dcdcaa"/><rect x="33" y="216.3" width="1" height="1.5" fill="#d4d4d4"/><rect x="34" y="216.3" width="1" height="1.5" fill="#d4d4d4"/><rect x="35" y="216.3" width="1" height="1.5" fill="#d4d4d4"/><rect x="6" y="220.3" width="13" height="1.5" fill="#6a9955"/><rect x="6" y="222.3" width="8" height="1.5" fill="#dcdcaa"/><rect x="14" y="222.3" width="1" height="1.5" fill="#d4d4d4"/><rect x="15" y="222.3" width="4" height="1.5" fill="#569cd6"/><rect x="19" y="222.3" width="1" height="1.5" fill="#d4d4d4"/><rect x="20" y="222.3" width="1" height="1.5" fill="#d4d4d4"/><rect x="6" y="224.3" width="12" height="1.5" fill="#dcdcaa"/><rect x="18" y="224.3" width="1" height="1.5" fill="#d4d4d4"/><rect x="19" y="224.3" width="5" height="1.5" fill="#569cd6"/><rect x="24" y="224.3" width="1" height="1.5" fill="#d4d4d4"/><rect x="25" y="224.3" width="1" height="1.5" fill="#d4d4d4"/><rect x="6" y="228.3" width="10" height="1.5" fill="#9cdcfe"/><rect x="16" y="228.3" width="1" height="1.5" fill="#d4d4d4"/><rect x="17" y="228.3" width="7" height="1.5" fill="#dcdcaa"/><rect x="24" y="228.3" width="1" height="1.5" fill="#d4d4d4"/><rect x="25" y="228.3" width="6" height="1.5" fill="#ce9178"/><rect x="31" y="228.3" width="1" height="1.5" fill="#d4d4d4"/><rect x="32" y="228.3" width="1" height="1.5" fill="#d4d4d4"/><rect x="34" y="228.3" width="21" height="1.5" fill="#6a9955"/><rect x="4" y="230.3" width="1" height="1.5" fill="#d4d4d4"/><rect x="6" y="230.3" width="5" height="1.5" fill="#c586c0"/><rect x="12" y="230.3" width="1" height="1.5" fill="#d4d4d4"/><rect x="13" y="230.3" width="3" height="1.5" fill="#9cdcfe"/><rect x="16" y="230.3" width="1" height="1.5" fill="#d4d4d4"/><rect x="18" y="230.3" width="1" height="1.5" fill="#d4d4d4"/><rect x="6" y="232.3" width="12" height="1.5" fill="#dcdcaa"/><rect x="18" y="232.3" width="1" height="1.5" fill="#d4d4d4"/><rect x="19" y="232.3" width="5" height="1.5" fill="#569cd6"/><rect x="24" y="232.3" width="1" height="1.5" fill="#d4d4d4"/><rect x="25" y="232.3" width="1" height="1.5" fill="#d4d4d4"/><rect x="6" y="234.3" width="9" height="1.5" fill="#dcdcaa"/><rect x="15" y="234.3" width="1" height="1.5" fill="#d4d4d4"/><rect x="16" y="234.3" width="19" height="1.5" fill="#ce9178"/><rect x="35" y="234.3" width="1" height="1.5" fill="#d4d4d4"/><rect x="36" y="234.3" width="1" height="1.5" fill="#d4d4d4"/><rect x="4" y="236.3" width="1" height="1.5" fill="#d4d4d4"/><rect x="2" y="238.3" width="1" height="1.5" fill="#d4d4d4"/><rect x="2" y="242.3" width="8" height="1.5" fill="#569cd6"/><rect x="11" y="242.3" width="11" height="1.5" fill="#dcdcaa"/><rect x="22" y="242.3" width="1" height="1.5" fill="#d4d4d4"/><rect x="23" y="242.3" width="3" height="1.5" fill="#9cdcfe"/><rect x="26" y="242.3" width="1" height="1.5" fill="#d4d4d4"/><rect x="28" y="242.3" width="1" height="1.5" fill="#d4d4d4"/><rect x="4" y="244.3" width="8" height="1.5" fill="#dcdcaa"/><rect x="12" y="244.3" width="1" height="1.5" fill="#d4d4d4"/><rect x="13" y="244.3" width="1" height="1.5" fill="#d4d4d4"/><rect x="15" y="244.3" width="7" height="1.5" fill="#9cdcfe"/><rect x="22" y="244.3" width="1" height="1.5" fill="#d4d4d4"/><rect x="24" y="244.3" width="4" height="1.5" fill="#569cd6"/><rect x="28" y="244.3" width="1" height="1.5" fill="#d4d4d4"/><rect x="30" y="244.3" width="4" height="1.5" fill="#9cdcfe"/><rect x="34" y="244.3" width="1" height="1.5" fill="#d4d4d4"/><rect x="36" y="244.3" width="9" height="1.5" fill="#ce9178"/><rect x="45" y="244.3" width="1" height="1.5" fill="#d4d4d4"/><rect x="47" y="244.3" width="7" height="1.5" fill="#9cdcfe"/><rect x="54" y="244.3" width="1" height="1.5" fill="#d4d4d4"/><rect x="56" y="244.3" width="3" height="1.5" fill="#9cdcfe"/><rect x="60" y="244.3" width="1" height="1.5" fill="#d4d4d4"/><rect x="61" y="244.3" width="1" height="1.5" fill="#d4d4d4"/><rect x="62" y="244.3" width="1" height="1.5" fill="#d4d4d4"/><rect x="2" y="246.3" width="1" height="1.5" fill="#d4d4d4"/><rect x="2" y="250.3" width="8" height="1.5" fill="#569cd6"/><rect x="11" y="250.3" width="9" height="1.5" fill="#dcdcaa"/><rect x="20" y="250.3" width="1" height="1.5" fill="#d4d4d4"/><rect x="21" y="250.3" width="3" height="1.5" fill="#9cdcfe"/><rect x="24" y="250.3" width="1" height="1.5" fill="#d4d4d4"/><rect x="26" y="250.3" width="1" height="1.5" fill="#d4d4d4"/><rect x="4" y="252.3" width="8" height="1.5" fill="#dcdcaa"/><rect x="12" y="252.3" width="1" height="1.5" fill="#d4d4d4"/><rect x="13" y="252.3" width="1" height="1.5" fill="#d4d4d4"/><rect x="15" y="252.3" width="7" height="1.5" fill="#9cdcfe"/><rect x="22" y="252.3" width="1" height="1.5" fill="#d4d4d4"/><rect x="24" y="252.3" width="4" height="1.5" fill="#569cd6"/><rect x="28" y="252.3" width="1" height="1.5" fill="#d4d4d4"/><rect x="30" y="252.3" width="4" height="1.5" fill="#9cdcfe"/><rect x="34" y="252.3" width="1" height="1.5" fill="#d4d4d4"/><rect x="36" y="252.3" width="7" height="1.5" fill="#ce9178"/><rect x="43" y="252.3" width="1" height="1.5" fill="#d4d4d4"/><rect x="45" y="252.3" width="7" height="1.5" fill="#9cdcfe"/><rect x="52" y="252.3" width="1" height="1.5" fill="#d4d4d4"/><rect x="54" y="252.3" width="3" height="1.5" fill="#9cdcfe"/><rect x="58" y="252.3" width="1" height="1.5" fill="#d4d4d4"/><rect x="59" y="252.3" width="1" height="1.5" fill="#d4d4d4"/><rect x="60" y="252.3" width="1" height="1.5" fill="#d4d4d4"/><rect x="2" y="254.3" width="1" height="1.5" fill="#d4d4d4"/><rect x="2" y="258.3" width="6" height="1.5" fill="#c586c0"/><rect x="9" y="258.3" width="1" height="1.5" fill="#d4d4d4"/><rect x="4" y="260.3" width="1" height="1.5" fill="#d4d4d4"/><rect x="5" y="260.3" width="4" height="1.5" fill="#4ec9b0"/><rect x="10" y="260.3" width="5" height="1.5" fill="#9cdcfe"/><rect x="15" y="260.3" width="1" height="1.5" fill="#d4d4d4"/><rect x="16" y="260.3" width="1" height="1.5" fill="#d4d4d4"/><rect x="17" y="260.3" width="1" height="1.5" fill="#d4d4d4"/><rect x="19" y="260.3" width="4" height="1.5" fill="#9cdcfe"/><rect x="23" y="260.3" width="1" height="1.5" fill="#d4d4d4"/><rect x="25" y="260.3" width="1" height="1.5" fill="#b5cea8"/><rect x="26" y="260.3" width="1" height="1.5" fill="#d4d4d4"/><rect x="28" y="260.3" width="15" height="1.5" fill="#9cdcfe"/><rect x="43" y="260.3" width="1" height="1.5" fill="#d4d4d4"/><rect x="45" y="260.3" width="6" height="1.5" fill="#ce9178"/><rect x="52" y="260.3" width="1" height="1.5" fill="#d4d4d4"/><rect x="53" y="260.3" width="1" height="1.5" fill="#d4d4d4"/><rect x="54" y="260.3" width="1" height="1.5" fill="#d4d4d4"/><rect x="6" y="262.3" width="1" height="1.5" fill="#d4d4d4"/><rect x="7" y="262.3" width="1" height="1.5" fill="#d4d4d4"/><rect x="8" y="262.3" width="5" height="1.5" fill="#9cdcfe"/><rect x="14" y="262.3" width="1" height="1.5" fill="#d4d4d4"/><rect x="16" y="262.3" width="1" height="1.5" fill="#d4d4d4"/><rect x="8" y="264.3" width="1" height="1.5" fill="#d4d4d4"/><rect x="9" y="264.3" width="10" height="1.5" fill="#4ec9b0"/><rect x="20" y="264.3" width="3" height="1.5" fill="#9cdcfe"/><rect x="23" y="264.3" width="1" height="1.5" fill="#d4d4d4"/><rect x="24" y="264.3" width="1" height="1.5" fill="#d4d4d4"/><rect x="25" y="264.3" width="9" height="1.5" fill="#9cdcfe"/><rect x="34" y="264.3" width="1" height="1.5" fill="#d4d4d4"/><rect x="36" y="264.3" width="5" height="1.5" fill="#9cdcfe"/><rect x="41" y="264.3" width="1" height="1.5" fill="#d4d4d4"/><rect x="42" y="264.3" width="1" height="1.5" fill="#d4d4d4"/><rect x="43" y="264.3" width="6" height="1.5" fill="#9cdcfe"/><rect x="49" y="264.3" width="1" height="1.5" fill="#d4d4d4"/><rect x="50" y="264.3" width="6" height="1.5" fill="#9cdcfe"/><rect x="56" y="264.3" width="1" height="1.5" fill="#d4d4d4"/><rect x="58" y="264.3" width="6" height="1.5" fill="#9cdcfe"/><rect x="64" y="264.3" width="1" height="1.5" fill="#d4d4d4"/><rect x="65" y="264.3" width="1" height="1.5" fill="#d4d4d4"/><rect x="66" y="264.3" width="6" height="1.5" fill="#9cdcfe"/><rect x="72" y="264.3" width="1" height="1.5" fill="#d4d4d4"/><rect x="74" y="264.3" width="5" height="1.5" fill="#9cdcfe"/><rect x="79" y="264.3" width="1" height="1.5" fill="#d4d4d4"/><rect x="80" y="264.3" width="1" height="1.5" fill="#d4d4d4"/><rect x="81" y="264.3" width="5" height="1.5" fill="#9cdcfe"/><rect x="86" y="264.3" width="1" height="1.5" fill="#d4d4d4"/><rect x="87" y="264.3" width="1" height="1.5" fill="#d4d4d4"/><rect x="10" y="266.3" width="1" height="1.5" fill="#d4d4d4"/><rect x="11" y="266.3" width="7" height="1.5" fill="#4ec9b0"/><rect x="12" y="268.3" width="5" height="1.5" fill="#9cdcfe"/><rect x="17" y="268.3" width="1" height="1.5" fill="#d4d4d4"/><rect x="18" y="268.3" width="1" height="1.5" fill="#d4d4d4"/><rect x="19" y="268.3" width="6" height="1.5" fill="#9cdcfe"/><rect x="25" y="268.3" width="1" height="1.5" fill="#d4d4d4"/><rect x="26" y="268.3" width="2" height="1.5" fill="#9cdcfe"/><rect x="28" y="268.3" width="1" height="1.5" fill="#d4d4d4"/><rect x="12" y="270.3" width="5" height="1.5" fill="#9cdcfe"/><rect x="17" y="270.3" width="1" height="1.5" fill="#d4d4d4"/><rect x="18" y="270.3" width="1" height="1.5" fill="#d4d4d4"/><rect x="19" y="270.3" width="5" height="1.5" fill="#9cdcfe"/><rect x="24" y="270.3" width="1" height="1.5" fill="#d4d4d4"/><rect x="12" y="272.3" width="7" height="1.5" fill="#9cdcfe"/><rect x="19" y="272.3" width="1" height="1.5" fill="#d4d4d4"/><rect x="20" y="272.3" width="1" height="1.5" fill="#d4d4d4"/><rect x="21" y="272.3" width="9" height="1.5" fill="#9cdcfe"/><rect x="30" y="272.3" width="1" height="1.5" fill="#d4d4d4"/><rect x="12" y="274.3" width="5" height="1.5" fill="#9cdcfe"/><rect x="17" y="274.3" width="1" height="1.5" fill="#d4d4d4"/><rect x="18" y="274.3" width="6" height="1.5" fill="#ce9178"/><rect x="12" y="276.3" width="4" height="1.5" fill="#9cdcfe"/><rect x="16" y="276.3" width="1" height="1.5" fill="#d4d4d4"/><rect x="17" y="276.3" width="4" height="1.5" fill="#ce9178"/><rect x="10" y="278.3" width="1" height="1.5" fill="#d4d4d4"/><rect x="11" y="278.3" width="1" height="1.5" fill="#d4d4d4"/><rect x="10" y="282.3" width="22" height="1.5" fill="#6a9955"/><rect x="10" y="284.3" width="1" height="1.5" fill="#d4d4d4"/><rect x="11" y="284.3" width="4" height="1.5" fill="#4ec9b0"/><rect x="16" y="284.3" width="5" height="1.5" fill="#9cdcfe"/><rect x="21" y="284.3" width="1" height="1.5" fill="#d4d4d4"/><rect x="22" y="284.3" width="1" height="1.5" fill="#d4d4d4"/><rect x="23" y="284.3" width="6" height="1.5" fill="#9cdcfe"/><rect x="29" y="284.3" width="1" height="1.5" fill="#d4d4d4"/><rect x="30" y="284.3" width="8" height="1.5" fill="#9cdcfe"/><rect x="38" y="284.3" width="1" height="1.5" fill="#d4d4d4"/><rect x="39" y="284.3" width="1" height="1.5" fill="#d4d4d4"/><rect x="12" y="286.3" width="1" height="1.5" fill="#d4d4d4"/><rect x="13" y="286.3" width="4" height="1.5" fill="#4ec9b0"/><rect x="18" y="286.3" width="5" height="1.5" fill="#9cdcfe"/><rect x="23" y="286.3" width="1" height="1.5" fill="#d4d4d4"/><rect x="24" y="286.3" width="1" height="1.5" fill="#d4d4d4"/><rect x="25" y="286.3" width="6" height="1.5" fill="#9cdcfe"/><rect x="31" y="286.3" width="1" height="1.5" fill="#d4d4d4"/><rect x="32" y="286.3" width="3" height="1.5" fill="#9cdcfe"/><rect x="35" y="286.3" width="1" height="1.5" fill="#d4d4d4"/><rect x="36" y="286.3" width="1" height="1.5" fill="#d4d4d4"/><rect x="14" y="288.3" width="13" height="1.5" fill="#6a9955"/><rect x="14" y="290.3" width="1" height="1.5" fill="#d4d4d4"/><rect x="15" y="290.3" width="4" height="1.5" fill="#4ec9b0"/><rect x="20" y="290.3" width="4" height="1.5" fill="#9cdcfe"/><rect x="24" y="290.3" width="1" height="1.5" fill="#d4d4d4"/><rect x="25" y="290.3" width="7" height="1.5" fill="#ce9178"/><rect x="33" y="290.3" width="4" height="1.5" fill="#9cdcfe"/><rect x="37" y="290.3" width="1" height="1.5" fill="#d4d4d4"/><rect x="38" y="290.3" width="1" height="1.5" fill="#d4d4d4"/><rect x="39" y="290.3" width="2" height="1.5" fill="#b5cea8"/><rect x="41" y="290.3" width="1" height="1.5" fill="#d4d4d4"/><rect x="43" y="290.3" width="5" height="1.5" fill="#9cdcfe"/><rect x="48" y="290.3" width="1" height="1.5" fill="#d4d4d4"/><rect x="49" y="290.3" width="7" height="1.5" fill="#ce9178"/><rect x="57" y="290.3" width="7" height="1.5" fill="#9cdcfe"/><rect x="64" y="290.3" width="1" height="1.5" fill="#d4d4d4"/><rect x="65" y="290.3" width="1" height="1.5" fill="#d4d4d4"/><rect x="66" y="290.3" width="2" height="1.5" fill="#9cdcfe"/><rect x="68" y="290.3" width="1" height="1.5" fill="#d4d4d4"/><rect x="70" y="290.3" width="1" height="1.5" fill="#d4d4d4"/><rect x="71" y="290.3" width="1" height="1.5" fill="#d4d4d4"/><rect x="14" y="292.3" width="1" height="1.5" fill="#d4d4d4"/><rect x="15" y="292.3" width="4" height="1.5" fill="#4ec9b0"/><rect x="20" y="292.3" width="4" height="1.5" fill="#9cdcfe"/><rect x="24" y="292.3" width="1" height="1.5" fill="#d4d4d4"/><rect x="25" y="292.3" width="7" height="1.5" fill="#ce9178"/><rect x="33" y="292.3" width="4" height="1.5" fill="#9cdcfe"/><rect x="37" y="292.3" width="1" height="1.5" fill="#d4d4d4"/><rect x="38" y="292.3" width="1" height="1.5" fill="#d4d4d4"/><rect x="39" y="292.3" width="2" height="1.5" fill="#b5cea8"/><rect x="41" y="292.3" width="1" height="1.5" fill="#d4d4d4"/><rect x="43" y="292.3" width="5" height="1.5" fill="#9cdcfe"/><rect x="48" y="292.3" width="1" height="1.5" fill="#d4d4d4"/><rect x="49" y="292.3" width="7" height="1.5" fill="#ce9178"/><rect x="57" y="292.3" width="7" height="1.5" fill="#9cdcfe"/><rect x="64" y="292.3" width="1" height="1.5" fill="#d4d4d4"/><rect x="65" y="292.3" width="1" height="1.5" fill="#d4d4d4"/><rect x="66" y="292.3" width="2" height="1.5" fill="#9cdcfe"/><rect x="68" y="292.3" width="1" height="1.5" fill="#d4d4d4"/><rect x="70" y="292.3" width="1" height="1.5" fill="#d4d4d4"/><rect x="71" y="292.3" width="1" height="1.5" fill="#d4d4d4"/><rect x="14" y="294.3" width="1" height="1.5" fill="#d4d4d4"/><rect x="15" y="294.3" width="4" height="1.5" fill="#4ec9b0"/><rect x="20" y="294.3" width="4" height="1.5" fill="#9cdcfe"/><rect x="24" y="294.3" width="1" height="1.5" fill="#d4d4d4"/><rect x="25" y="294.3" width="6" height="1.5" fill="#ce9178"/><rect x="32" y="294.3" width="4" height="1.5" fill="#9cdcfe"/><rect x="36" y="294.3" width="1" height="1.5" fill="#d4d4d4"/><rect x="37" y="294.3" width="1" height="1.5" fill="#d4d4d4"/><rect x="38" y="294.3" width="2" height="1.5" fill="#b5cea8"/><rect x="40" y="294.3" width="1" height="1.5" fill="#d4d4d4"/><rect x="42" y="294.3" width="5" height="1.5" fill="#9cdcfe"/><rect x="47" y="294.3" width="1" height="1.5" fill="#d4d4d4"/><rect x="48" y="294.3" width="7" height="1.5" fill="#ce9178"/><rect x="56" y="294.3" width="7" height="1.5" fill="#9cdcfe"/><rect x="63" y="294.3" width="1" height="1.5" fill="#d4d4d4"/><rect x="64" y="294.3" width="1" height="1.5" fill="#d4d4d4"/><rect x="65" y="294.3" width="2" height="1.5" fill="#9cdcfe"/><rect x="67" y="294.3" width="1" height="1.5" fill="#d4d4d4"/><rect x="69" y="294.3" width="1" height="1.5" fill="#d4d4d4"/><rect x="70" y="294.3" width="1" height="1.5" fill="#d4d4d4"/><rect x="14" y="296.3" width="1" height="1.5" fill="#d4d4d4"/><rect x="15" y="296.3" width="4" height="1.5" fill="#4ec9b0"/><rect x="20" y="296.3" width="4" height="1.5" fill="#9cdcfe"/><rect x="24" y="296.3" width="1" height="1.5" fill="#d4d4d4"/><rect x="25" y="296.3" width="7" height="1.5" fill="#ce9178"/><rect x="33" y="296.3" width="4" height="1.5" fill="#9cdcfe"/><rect x="37" y="296.3" width="1" height="1.5" fill="#d4d4d4"/><rect x="38" y="296.3" width="1" height="1.5" fill="#d4d4d4"/><rect x="39" y="296.3" width="2" height="1.5" fill="#b5cea8"/><rect x="41" y="296.3" width="1" height="1.5" fill="#d4d4d4"/><rect x="43" y="296.3" width="5" height="1.5" fill="#9cdcfe"/><rect x="48" y="296.3" width="1" height="1.5" fill="#d4d4d4"/><rect x="49" y="296.3" width="7" height="1.5" fill="#ce9178"/><rect x="57" y="296.3" width="7" height="1.5" fill="#9cdcfe"/><rect x="64" y="296.3" width="1" height="1.5" fill="#d4d4d4"/><rect x="65" y="296.3" width="1" height="1.5" fill="#d4d4d4"/><rect x="66" y="296.3" width="2" height="1.5" fill="#9cdcfe"/><rect x="68" y="296.3" width="1" height="1.5" fill="#d4d4d4"/><rect x="70" y="296.3" width="1" height="1.5" fill="#d4d4d4"/><rect x="71" y="296.3" width="1" height="1.5" fill="#d4d4d4"/><rect x="72" y="296.3" width="1" height="1.5" fill="#d4d4d4"/><rect x="14" y="300.3" width="25" height="1.5" fill="#6a9955"/><rect x="14" y="302.3" width="1" height="1.5" fill="#d4d4d4"/><rect x="15" y="302.3" width="8" height="1.5" fill="#4ec9b0"/><rect x="23" y="302.3" width="1" height="1.5" fill="#d4d4d4"/><rect x="24" y="302.3" width="4" height="1.5" fill="#9cdcfe"/><rect x="16" y="304.3" width="5" height="1.5" fill="#9cdcfe"/><rect x="21" y="304.3" width="1" height="1.5" fill="#d4d4d4"/><rect x="22" y="304.3" width="1" height="1.5" fill="#d4d4d4"/><rect x="23" y="304.3" width="1" height="1.5" fill="#d4d4d4"/><rect x="18" y="306.3" width="9" height="1.5" fill="#9cdcfe"/><rect x="27" y="306.3" width="1" height="1.5" fill="#d4d4d4"/><rect x="29" y="306.3" width="1" height="1.5" fill="#d4d4d4"/><rect x="30" y="306.3" width="1" height="1.5" fill="#d4d4d4"/><rect x="32" y="306.3" width="5" height="1.5" fill="#9cdcfe"/><rect x="38" y="306.3" width="1" height="1.5" fill="#d4d4d4"/><rect x="39" y="306.3" width="1" height="1.5" fill="#d4d4d4"/><rect x="40" y="306.3" width="1" height="1.5" fill="#d4d4d4"/><rect x="16" y="308.3" width="1" height="1.5" fill="#d4d4d4"/><rect x="17" y="308.3" width="1" height="1.5" fill="#d4d4d4"/><rect x="14" y="310.3" width="1" height="1.5" fill="#d4d4d4"/><rect x="16" y="312.3" width="1" height="1.5" fill="#d4d4d4"/><rect x="17" y="312.3" width="16" height="1.5" fill="#4ec9b0"/><rect x="22" y="314.3" width="7" height="1.5" fill="#9cdcfe"/><rect x="29" y="314.3" width="1" height="1.5" fill="#d4d4d4"/><rect x="30" y="314.3" width="1" height="1.5" fill="#d4d4d4"/><rect x="31" y="314.3" width="9" height="1.5" fill="#9cdcfe"/><rect x="40" y="314.3" width="1" height="1.5" fill="#d4d4d4"/><rect x="42" y="314.3" width="5" height="1.5" fill="#9cdcfe"/><rect x="47" y="314.3" width="1" height="1.5" fill="#d4d4d4"/><rect x="48" y="314.3" width="1" height="1.5" fill="#d4d4d4"/><rect x="49" y="314.3" width="6" height="1.5" fill="#9cdcfe"/><rect x="55" y="314.3" width="1" height="1.5" fill="#d4d4d4"/><rect x="56" y="314.3" width="7" height="1.5" fill="#9cdcfe"/><rect x="63" y="314.3" width="1" height="1.5" fill="#d4d4d4"/><rect x="64" y="314.3" width="1" height="1.5" fill="#d4d4d4"/><rect x="24" y="316.3" width="9" height="1.5" fill="#9cdcfe"/><rect x="33" y="316.3" width="1" height="1.5" fill="#d4d4d4"/><rect x="35" y="316.3" width="1" height="1.5" fill="#d4d4d4"/><rect x="36" y="316.3" width="1" height="1.5" fill="#d4d4d4"/><rect x="38" y="316.3" width="6" height="1.5" fill="#9cdcfe"/><rect x="44" y="316.3" width="1" height="1.5" fill="#d4d4d4"/><rect x="46" y="316.3" width="4" height="1.5" fill="#9cdcfe"/><rect x="51" y="316.3" width="1" height="1.5" fill="#d4d4d4"/><rect x="52" y="316.3" width="1" height="1.5" fill="#d4d4d4"/><rect x="53" y="316.3" width="1" height="1.5" fill="#d4d4d4"/><rect x="24" y="318.3" width="11" height="1.5" fill="#9cdcfe"/><rect x="35" y="318.3" width="1" height="1.5" fill="#d4d4d4"/><rect x="37" y="318.3" width="3" height="1.5" fill="#9cdcfe"/><rect x="40" y="318.3" width="1" height="1.5" fill="#d4d4d4"/><rect x="42" y="318.3" width="5" height="1.5" fill="#9cdcfe"/><rect x="47" y="318.3" width="1" height="1.5" fill="#d4d4d4"/><rect x="49" y="318.3" width="2" height="1.5" fill="#b5cea8"/><rect x="51" y="318.3" width="1" height="1.5" fill="#d4d4d4"/><rect x="53" y="318.3" width="16" height="1.5" fill="#6a9955"/><rect x="22" y="320.3" width="1" height="1.5" fill="#d4d4d4"/><rect x="23" y="320.3" width="1" height="1.5" fill="#d4d4d4"/><rect x="20" y="322.3" width="1" height="1.5" fill="#d4d4d4"/><rect x="21" y="322.3" width="1" height="1.5" fill="#d4d4d4"/><rect x="18" y="324.3" width="1" height="1.5" fill="#d4d4d4"/><rect x="16" y="326.3" width="1" height="1.5" fill="#d4d4d4"/><rect x="14" y="328.3" width="1" height="1.5" fill="#d4d4d4"/><rect x="12" y="330.3" width="1" height="1.5" fill="#d4d4d4"/><rect x="12" y="332.3" width="1" height="1.5" fill="#d4d4d4"/><rect x="13" y="332.3" width="1" height="1.5" fill="#d4d4d4"/><rect x="14" y="332.3" width="4" height="1.5" fill="#4ec9b0"/><rect x="18" y="332.3" width="1" height="1.5" fill="#d4d4d4"/><rect x="12" y="336.3" width="16" height="1.5" fill="#6a9955"/><rect x="12" y="338.3" width="1" height="1.5" fill="#d4d4d4"/><rect x="13" y="338.3" width="4" height="1.5" fill="#4ec9b0"/><rect x="18" y="338.3" width="5" height="1.5" fill="#9cdcfe"/><rect x="23" y="338.3" width="1" height="1.5" fill="#d4d4d4"/><rect x="24" y="338.3" width="1" height="1.5" fill="#d4d4d4"/><rect x="25" y="338.3" width="6" height="1.5" fill="#9cdcfe"/><rect x="31" y="338.3" width="1" height="1.5" fill="#d4d4d4"/><rect x="32" y="338.3" width="7" height="1.5" fill="#9cdcfe"/><rect x="39" y="338.3" width="1" height="1.5" fill="#d4d4d4"/><rect x="40" y="338.3" width="1" height="1.5" fill="#d4d4d4"/><rect x="14" y="340.3" width="1" height="1.5" fill="#d4d4d4"/><rect x="15" y="340.3" width="4" height="1.5" fill="#4ec9b0"/><rect x="20" y="340.3" width="5" height="1.5" fill="#9cdcfe"/><rect x="25" y="340.3" width="1" height="1.5" fill="#d4d4d4"/><rect x="26" y="340.3" width="1" height="1.5" fill="#d4d4d4"/><rect x="27" y="340.3" width="6" height="1.5" fill="#9cdcfe"/><rect x="33" y="340.3" width="1" height="1.5" fill="#d4d4d4"/><rect x="34" y="340.3" width="8" height="1.5" fill="#9cdcfe"/><rect x="42" y="340.3" width="1" height="1.5" fill="#d4d4d4"/><rect x="43" y="340.3" width="1" height="1.5" fill="#d4d4d4"/><rect x="44" y="340.3" width="1" height="1.5" fill="#b5cea8"/><rect x="45" y="340.3" width="1" height="1.5" fill="#9cdcfe"/><rect x="46" y="340.3" width="1" height="1.5" fill="#d4d4d4"/><rect x="47" y="340.3" width="1" height="1.5" fill="#d4d4d4"/><rect x="48" y="340.3" width="4" height="1.5" fill="#4ec9b0"/><rect x="52" y="340.3" width="1" height="1.5" fill="#d4d4d4"/><rect x="54" y="340.3" width="1" height="1.5" fill="#d4d4d4"/><rect x="55" y="340.3" width="9" height="1.5" fill="#9cdcfe"/><rect x="64" y="340.3" width="1" height="1.5" fill="#d4d4d4"/><rect x="12" y="342.3" width="1" height="1.5" fill="#d4d4d4"/><rect x="13" y="342.3" width="1" height="1.5" fill="#d4d4d4"/><rect x="14" y="342.3" width="4" height="1.5" fill="#4ec9b0"/><rect x="18" y="342.3" width="1" height="1.5" fill="#d4d4d4"/><rect x="10" y="344.3" width="1" height="1.5" fill="#d4d4d4"/><rect x="11" y="344.3" width="1" height="1.5" fill="#d4d4d4"/><rect x="12" y="344.3" width="4" height="1.5" fill="#4ec9b0"/><rect x="16" y="344.3" width="1" height="1.5" fill="#d4d4d4"/><rect x="8" y="348.3" width="1" height="1.5" fill="#d4d4d4"/><rect x="9" y="348.3" width="1" height="1.5" fill="#d4d4d4"/><rect x="10" y="348.3" width="10" height="1.5" fill="#4ec9b0"/><rect x="20" y="348.3" width="1" height="1.5" fill="#d4d4d4"/><rect x="6" y="350.3" width="1" height="1.5" fill="#d4d4d4"/><rect x="8" y="350.3" width="1" height="1.5" fill="#d4d4d4"/><rect x="10" y="350.3" width="1" height="1.5" fill="#d4d4d4"/><rect x="8" y="352.3" width="1" height="1.5" fill="#d4d4d4"/><rect x="9" y="352.3" width="5" height="1.5" fill="#4ec9b0"/><rect x="15" y="352.3" width="6" height="1.5" fill="#9cdcfe"/><rect x="21" y="352.3" width="1" height="1.5" fill="#d4d4d4"/><rect x="22" y="352.3" width="1" height="1.5" fill="#d4d4d4"/><rect x="23" y="352.3" width="1" height="1.5" fill="#d4d4d4"/><rect x="25" y="352.3" width="3" height="1.5" fill="#9cdcfe"/><rect x="28" y="352.3" width="1" height="1.5" fill="#d4d4d4"/><rect x="30" y="352.3" width="5" height="1.5" fill="#9cdcfe"/><rect x="36" y="352.3" width="1" height="1.5" fill="#d4d4d4"/><rect x="37" y="352.3" width="1" height="1.5" fill="#d4d4d4"/><rect x="39" y="352.3" width="5" height="1.5" fill="#9cdcfe"/><rect x="44" y="352.3" width="1" height="1.5" fill="#d4d4d4"/><rect x="45" y="352.3" width="1" height="1.5" fill="#d4d4d4"/><rect x="46" y="352.3" width="6" height="1.5" fill="#9cdcfe"/><rect x="52" y="352.3" width="1" height="1.5" fill="#d4d4d4"/><rect x="53" y="352.3" width="12" height="1.5" fill="#9cdcfe"/><rect x="65" y="352.3" width="1" height="1.5" fill="#d4d4d4"/><rect x="67" y="352.3" width="1" height="1.5" fill="#d4d4d4"/><rect x="68" y="352.3" width="1" height="1.5" fill="#d4d4d4"/><rect x="6" y="354.3" width="1" height="1.5" fill="#d4d4d4"/><rect x="7" y="354.3" width="1" height="1.5" fill="#d4d4d4"/><rect x="6" y="358.3" width="14" height="1.5" fill="#6a9955"/><rect x="6" y="360.3" width="1" height="1.5" fill="#d4d4d4"/><rect x="7" y="360.3" width="4" height="1.5" fill="#4ec9b0"/><rect x="12" y="360.3" width="5" height="1.5" fill="#9cdcfe"/><rect x="17" y="360.3" width="1" height="1.5" fill="#d4d4d4"/><rect x="18" y="360.3" width="1" height="1.5" fill="#d4d4d4"/><rect x="19" y="360.3" width="6" height="1.5" fill="#9cdcfe"/><rect x="25" y="360.3" width="1" height="1.5" fill="#d4d4d4"/><rect x="26" y="360.3" width="6" height="1.5" fill="#9cdcfe"/><rect x="32" y="360.3" width="1" height="1.5" fill="#d4d4d4"/><rect x="33" y="360.3" width="1" height="1.5" fill="#d4d4d4"/><rect x="8" y="362.3" width="1" height="1.5" fill="#d4d4d4"/><rect x="9" y="362.3" width="16" height="1.5" fill="#4ec9b0"/><rect x="10" y="364.3" width="5" height="1.5" fill="#9cdcfe"/><rect x="15" y="364.3" width="1" height="1.5" fill="#d4d4d4"/><rect x="16" y="364.3" width="1" height="1.5" fill="#d4d4d4"/><rect x="17" y="364.3" width="6" height="1.5" fill="#9cdcfe"/><rect x="23" y="364.3" width="1" height="1.5" fill="#d4d4d4"/><rect x="24" y="364.3" width="7" height="1.5" fill="#9cdcfe"/><rect x="31" y="364.3" width="1" height="1.5" fill="#d4d4d4"/><rect x="10" y="366.3" width="7" height="1.5" fill="#9cdcfe"/><rect x="17" y="366.3" width="1" height="1.5" fill="#d4d4d4"/><rect x="18" y="366.3" width="1" height="1.5" fill="#d4d4d4"/><rect x="19" y="366.3" width="1" height="1.5" fill="#d4d4d4"/><rect x="20" y="366.3" width="1" height="1.5" fill="#d4d4d4"/><rect x="22" y="366.3" width="1" height="1.5" fill="#d4d4d4"/><rect x="23" y="366.3" width="1" height="1.5" fill="#d4d4d4"/><rect x="25" y="366.3" width="8" height="1.5" fill="#dcdcaa"/><rect x="33" y="366.3" width="1" height="1.5" fill="#d4d4d4"/><rect x="34" y="366.3" width="5" height="1.5" fill="#9cdcfe"/><rect x="40" y="366.3" width="1" height="1.5" fill="#d4d4d4"/><rect x="41" y="366.3" width="1" height="1.5" fill="#d4d4d4"/><rect x="42" y="366.3" width="1" height="1.5" fill="#d4d4d4"/><rect x="44" y="366.3" width="4" height="1.5" fill="#ce9178"/><rect x="49" y="366.3" width="1" height="1.5" fill="#d4d4d4"/><rect x="51" y="366.3" width="5" height="1.5" fill="#ce9178"/><rect x="57" y="366.3" width="1" height="1.5" fill="#d4d4d4"/><rect x="59" y="366.3" width="4" height="1.5" fill="#ce9178"/><rect x="63" y="366.3" width="1" height="1.5" fill="#d4d4d4"/><rect x="64" y="366.3" width="1" height="1.5" fill="#d4d4d4"/><rect x="8" y="368.3" width="1" height="1.5" fill="#d4d4d4"/><rect x="10" y="370.3" width="1" height="1.5" fill="#d4d4d4"/><rect x="11" y="370.3" width="8" height="1.5" fill="#4ec9b0"/><rect x="12" y="372.3" width="4" height="1.5" fill="#9cdcfe"/><rect x="16" y="372.3" width="1" height="1.5" fill="#d4d4d4"/><rect x="17" y="372.3" width="1" height="1.5" fill="#d4d4d4"/><rect x="18" y="372.3" width="5" height="1.5" fill="#9cdcfe"/><rect x="24" y="372.3" width="1" height="1.5" fill="#d4d4d4"/><rect x="25" y="372.3" width="1" height="1.5" fill="#d4d4d4"/><rect x="26" y="372.3" width="1" height="1.5" fill="#d4d4d4"/><rect x="28" y="372.3" width="4" height="1.5" fill="#ce9178"/><rect x="33" y="372.3" width="1" height="1.5" fill="#d4d4d4"/><rect x="35" y="372.3" width="7" height="1.5" fill="#ce9178"/><rect x="43" y="372.3" width="1" height="1.5" fill="#d4d4d4"/><rect x="45" y="372.3" width="11" height="1.5" fill="#ce9178"/><rect x="56" y="372.3" width="1" height="1.5" fill="#d4d4d4"/><rect x="12" y="374.3" width="4" height="1.5" fill="#9cdcfe"/><rect x="16" y="374.3" width="1" height="1.5" fill="#d4d4d4"/><rect x="17" y="374.3" width="1" height="1.5" fill="#d4d4d4"/><rect x="18" y="374.3" width="2" height="1.5" fill="#b5cea8"/><rect x="20" y="374.3" width="1" height="1.5" fill="#d4d4d4"/><rect x="12" y="376.3" width="5" height="1.5" fill="#9cdcfe"/><rect x="17" y="376.3" width="1" height="1.5" fill="#d4d4d4"/><rect x="18" y="376.3" width="9" height="1.5" fill="#ce9178"/><rect x="10" y="378.3" width="1" height="1.5" fill="#d4d4d4"/><rect x="11" y="378.3" width="1" height="1.5" fill="#d4d4d4"/><rect x="8" y="380.3" width="1" height="1.5" fill="#d4d4d4"/><rect x="9" y="380.3" width="1" height="1.5" fill="#d4d4d4"/><rect x="10" y="380.3" width="16" height="1.5" fill="#4ec9b0"/><rect x="26" y="380.3" width="1" height="1.5" fill="#d4d4d4"/><rect x="8" y="384.3" width="1" height="1.5" fill="#d4d4d4"/><rect x="9" y="384.3" width="16" height="1.5" fill="#4ec9b0"/><rect x="10" y="386.3" width="5" height="1.5" fill="#9cdcfe"/><rect x="15" y="386.3" width="1" height="1.5" fill="#d4d4d4"/><rect x="16" y="386.3" width="1" height="1.5" fill="#d4d4d4"/><rect x="17" y="386.3" width="6" height="1.5" fill="#9cdcfe"/><rect x="23" y="386.3" width="1" height="1.5" fill="#d4d4d4"/><rect x="24" y="386.3" width="7" height="1.5" fill="#9cdcfe"/><rect x="31" y="386.3" width="1" height="1.5" fill="#d4d4d4"/><rect x="10" y="388.3" width="7" height="1.5" fill="#9cdcfe"/><rect x="17" y="388.3" width="1" height="1.5" fill="#d4d4d4"/><rect x="18" y="388.3" width="1" height="1.5" fill="#d4d4d4"/><rect x="19" y="388.3" width="1" height="1.5" fill="#d4d4d4"/><rect x="20" y="388.3" width="1" height="1.5" fill="#d4d4d4"/><rect x="22" y="388.3" width="1" height="1.5" fill="#d4d4d4"/><rect x="23" y="388.3" width="1" height="1.5" fill="#d4d4d4"/><rect x="25" y="388.3" width="9" height="1.5" fill="#dcdcaa"/><rect x="34" y="388.3" width="1" height="1.5" fill="#d4d4d4"/><rect x="35" y="388.3" width="1" height="1.5" fill="#9cdcfe"/><rect x="37" y="388.3" width="1" height="1.5" fill="#d4d4d4"/><rect x="38" y="388.3" width="1" height="1.5" fill="#d4d4d4"/><rect x="40" y="388.3" width="1" height="1.5" fill="#9cdcfe"/><rect x="42" y="388.3" width="1" height="1.5" fill="#d4d4d4"/><rect x="43" y="388.3" width="1" height="1.5" fill="#d4d4d4"/><rect x="44" y="388.3" width="1" height="1.5" fill="#d4d4d4"/><rect x="46" y="388.3" width="6" height="1.5" fill="#ce9178"/><rect x="53" y="388.3" width="1" height="1.5" fill="#d4d4d4"/><rect x="55" y="388.3" width="7" height="1.5" fill="#ce9178"/><rect x="63" y="388.3" width="1" height="1.5" fill="#d4d4d4"/><rect x="65" y="388.3" width="6" height="1.5" fill="#ce9178"/><rect x="71" y="388.3" width="1" height="1.5" fill="#d4d4d4"/><rect x="72" y="388.3" width="1" height="1.5" fill="#d4d4d4"/><rect x="8" y="390.3" width="1" height="1.5" fill="#d4d4d4"/><rect x="10" y="394.3" width="1" height="1.5" fill="#d4d4d4"/><rect x="11" y="394.3" width="8" height="1.5" fill="#4ec9b0"/><rect x="20" y="394.3" width="4" height="1.5" fill="#9cdcfe"/><rect x="24" y="394.3" width="1" height="1.5" fill="#d4d4d4"/><rect x="25" y="394.3" width="16" height="1.5" fill="#ce9178"/><rect x="42" y="394.3" width="4" height="1.5" fill="#9cdcfe"/><rect x="46" y="394.3" width="1" height="1.5" fill="#d4d4d4"/><rect x="47" y="394.3" width="1" height="1.5" fill="#d4d4d4"/><rect x="48" y="394.3" width="2" height="1.5" fill="#b5cea8"/><rect x="50" y="394.3" width="1" height="1.5" fill="#d4d4d4"/><rect x="52" y="394.3" width="5" height="1.5" fill="#9cdcfe"/><rect x="57" y="394.3" width="1" height="1.5" fill="#d4d4d4"/><rect x="58" y="394.3" width="6" height="1.5" fill="#ce9178"/><rect x="65" y="394.3" width="1" height="1.5" fill="#d4d4d4"/><rect x="66" y="394.3" width="1" height="1.5" fill="#d4d4d4"/><rect x="8" y="396.3" width="1" height="1.5" fill="#d4d4d4"/><rect x="9" y="396.3" width="1" height="1.5" fill="#d4d4d4"/><rect x="10" y="396.3" width="16" height="1.5" fill="#4ec9b0"/><rect x="26" y="396.3" width="1" height="1.5" fill="#d4d4d4"/><rect x="6" y="398.3" width="1" height="1.5" fill="#d4d4d4"/><rect x="7" y="398.3" width="1" height="1.5" fill="#d4d4d4"/><rect x="8" y="398.3" width="4" height="1.5" fill="#4ec9b0"/><rect x="12" y="398.3" width="1" height="1.5" fill="#d4d4d4"/><rect x="6" y="402.3" width="23" height="1.5" fill="#6a9955"/><rect x="6" y="404.3" width="1" height="1.5" fill="#d4d4d4"/><rect x="7" y="404.3" width="4" height="1.5" fill="#4ec9b0"/><rect x="12" y="404.3" width="5" height="1.5" fill="#9cdcfe"/><rect x="17" y="404.3" width="1" height="1.5" fill="#d4d4d4"/><rect x="18" y="404.3" width="1" height="1.5" fill="#d4d4d4"/><rect x="19" y="404.3" width="6" height="1.5" fill="#9cdcfe"/><rect x="25" y="404.3" width="1" height="1.5" fill="#d4d4d4"/><rect x="26" y="404.3" width="6" height="1.5" fill="#9cdcfe"/><rect x="32" y="404.3" width="1" height="1.5" fill="#d4d4d4"/><rect x="33" y="404.3" width="1" height="1.5" fill="#d4d4d4"/><rect x="8" y="406.3" width="1" height="1.5" fill="#d4d4d4"/><rect x="9" y="406.3" width="1" height="1.5" fill="#d4d4d4"/><rect x="10" y="406.3" width="5" height="1.5" fill="#9cdcfe"/><rect x="16" y="406.3" width="1" height="1.5" fill="#d4d4d4"/><rect x="18" y="406.3" width="1" height="1.5" fill="#d4d4d4"/><rect x="10" y="408.3" width="1" height="1.5" fill="#d4d4d4"/><rect x="11" y="408.3" width="4" height="1.5" fill="#4ec9b0"/><rect x="16" y="408.3" width="5" height="1.5" fill="#9cdcfe"/><rect x="21" y="408.3" width="1" height="1.5" fill="#d4d4d4"/><rect x="22" y="408.3" width="1" height="1.5" fill="#d4d4d4"/><rect x="23" y="408.3" width="6" height="1.5" fill="#9cdcfe"/><rect x="29" y="408.3" width="1" height="1.5" fill="#d4d4d4"/><rect x="30" y="408.3" width="3" height="1.5" fill="#9cdcfe"/><rect x="33" y="408.3" width="1" height="1.5" fill="#d4d4d4"/><rect x="34" y="408.3" width="1" height="1.5" fill="#d4d4d4"/><rect x="12" y="410.3" width="15" height="1.5" fill="#6a9955"/><rect x="12" y="412.3" width="1" height="1.5" fill="#d4d4d4"/><rect x="13" y="412.3" width="16" height="1.5" fill="#4ec9b0"/><rect x="30" y="412.3" width="7" height="1.5" fill="#9cdcfe"/><rect x="37" y="412.3" width="1" height="1.5" fill="#d4d4d4"/><rect x="38" y="412.3" width="1" height="1.5" fill="#d4d4d4"/><rect x="39" y="412.3" width="15" height="1.5" fill="#9cdcfe"/><rect x="54" y="412.3" width="1" height="1.5" fill="#d4d4d4"/><rect x="56" y="412.3" width="5" height="1.5" fill="#9cdcfe"/><rect x="61" y="412.3" width="1" height="1.5" fill="#d4d4d4"/><rect x="62" y="412.3" width="1" height="1.5" fill="#d4d4d4"/><rect x="63" y="412.3" width="6" height="1.5" fill="#9cdcfe"/><rect x="69" y="412.3" width="1" height="1.5" fill="#d4d4d4"/><rect x="70" y="412.3" width="7" height="1.5" fill="#9cdcfe"/><rect x="77" y="412.3" width="1" height="1.5" fill="#d4d4d4"/><rect x="78" y="412.3" width="1" height="1.5" fill="#d4d4d4"/><rect x="14" y="414.3" width="1" height="1.5" fill="#d4d4d4"/><rect x="15" y="414.3" width="8" height="1.5" fill="#4ec9b0"/><rect x="24" y="414.3" width="4" height="1.5" fill="#9cdcfe"/><rect x="28" y="414.3" width="1" height="1.5" fill="#d4d4d4"/><rect x="29" y="414.3" width="8" height="1.5" fill="#ce9178"/><rect x="38" y="414.3" width="4" height="1.5" fill="#9cdcfe"/><rect x="42" y="414.3" width="1" height="1.5" fill="#d4d4d4"/><rect x="43" y="414.3" width="1" height="1.5" fill="#d4d4d4"/><rect x="44" y="414.3" width="2" height="1.5" fill="#b5cea8"/><rect x="46" y="414.3" width="1" height="1.5" fill="#d4d4d4"/><rect x="48" y="414.3" width="5" height="1.5" fill="#9cdcfe"/><rect x="53" y="414.3" width="1" height="1.5" fill="#d4d4d4"/><rect x="54" y="414.3" width="6" height="1.5" fill="#ce9178"/><rect x="61" y="414.3" width="1" height="1.5" fill="#d4d4d4"/><rect x="62" y="414.3" width="1" height="1.5" fill="#d4d4d4"/><rect x="12" y="416.3" width="1" height="1.5" fill="#d4d4d4"/><rect x="13" y="416.3" width="1" height="1.5" fill="#d4d4d4"/><rect x="14" y="416.3" width="16" height="1.5" fill="#4ec9b0"/><rect x="30" y="416.3" width="1" height="1.5" fill="#d4d4d4"/><rect x="12" y="420.3" width="15" height="1.5" fill="#6a9955"/><rect x="12" y="422.3" width="1" height="1.5" fill="#d4d4d4"/><rect x="13" y="422.3" width="16" height="1.5" fill="#4ec9b0"/><rect x="30" y="422.3" width="7" height="1.5" fill="#9cdcfe"/><rect x="37" y="422.3" width="1" height="1.5" fill="#d4d4d4"/><rect x="38" y="422.3" width="1" height="1.5" fill="#d4d4d4"/><rect x="39" y="422.3" width="9" height="1.5" fill="#9cdcfe"/><rect x="48" y="422.3" width="1" height="1.5" fill="#d4d4d4"/><rect x="50" y="422.3" width="5" height="1.5" fill="#9cdcfe"/><rect x="55" y="422.3" width="1" height="1.5" fill="#d4d4d4"/><rect x="56" y="422.3" width="1" height="1.5" fill="#d4d4d4"/><rect x="57" y="422.3" width="6" height="1.5" fill="#9cdcfe"/><rect x="63" y="422.3" width="1" height="1.5" fill="#d4d4d4"/><rect x="64" y="422.3" width="7" height="1.5" fill="#9cdcfe"/><rect x="71" y="422.3" width="1" height="1.5" fill="#d4d4d4"/><rect x="72" y="422.3" width="1" height="1.5" fill="#d4d4d4"/><rect x="14" y="424.3" width="1" height="1.5" fill="#d4d4d4"/><rect x="15" y="424.3" width="4" height="1.5" fill="#4ec9b0"/><rect x="20" y="424.3" width="5" height="1.5" fill="#9cdcfe"/><rect x="25" y="424.3" width="1" height="1.5" fill="#d4d4d4"/><rect x="26" y="424.3" width="1" height="1.5" fill="#d4d4d4"/><rect x="27" y="424.3" width="6" height="1.5" fill="#9cdcfe"/><rect x="33" y="424.3" width="1" height="1.5" fill="#d4d4d4"/><rect x="34" y="424.3" width="12" height="1.5" fill="#9cdcfe"/><rect x="46" y="424.3" width="1" height="1.5" fill="#d4d4d4"/><rect x="48" y="424.3" width="1" height="1.5" fill="#d4d4d4"/><rect x="49" y="424.3" width="1" height="1.5" fill="#d4d4d4"/><rect x="12" y="426.3" width="1" height="1.5" fill="#d4d4d4"/><rect x="13" y="426.3" width="1" height="1.5" fill="#d4d4d4"/><rect x="14" y="426.3" width="16" height="1.5" fill="#4ec9b0"/><rect x="30" y="426.3" width="1" height="1.5" fill="#d4d4d4"/><rect x="12" y="430.3" width="20" height="1.5" fill="#6a9955"/><rect x="12" y="432.3" width="1" height="1.5" fill="#d4d4d4"/><rect x="13" y="432.3" width="4" height="1.5" fill="#4ec9b0"/><rect x="18" y="432.3" width="5" height="1.5" fill="#9cdcfe"/><rect x="23" y="432.3" width="1" height="1.5" fill="#d4d4d4"/><rect x="24" y="432.3" width="1" height="1.5" fill="#d4d4d4"/><rect x="25" y="432.3" width="1" height="1.5" fill="#d4d4d4"/><rect x="27" y="432.3" width="5" height="1.5" fill="#9cdcfe"/><rect x="32" y="432.3" width="1" height="1.5" fill="#d4d4d4"/><rect x="34" y="432.3" width="2" height="1.5" fill="#b5cea8"/><rect x="37" y="432.3" width="1" height="1.5" fill="#d4d4d4"/><rect x="38" y="432.3" width="1" height="1.5" fill="#d4d4d4"/><rect x="40" y="432.3" width="1" height="1.5" fill="#d4d4d4"/><rect x="41" y="432.3" width="1" height="1.5" fill="#d4d4d4"/><rect x="10" y="434.3" width="1" height="1.5" fill="#d4d4d4"/><rect x="11" y="434.3" width="1" height="1.5" fill="#d4d4d4"/><rect x="12" y="434.3" width="4" height="1.5" fill="#4ec9b0"/><rect x="16" y="434.3" width="1" height="1.5" fill="#d4d4d4"/><rect x="8" y="436.3" width="1" height="1.5" fill="#d4d4d4"/><rect x="10" y="436.3" width="1" height="1.5" fill="#d4d4d4"/><rect x="12" y="436.3" width="1" height="1.5" fill="#d4d4d4"/><rect x="10" y="440.3" width="1" height="1.5" fill="#d4d4d4"/><rect x="11" y="440.3" width="4" height="1.5" fill="#4ec9b0"/><rect x="16" y="440.3" width="5" height="1.5" fill="#9cdcfe"/><rect x="21" y="440.3" width="1" height="1.5" fill="#d4d4d4"/><rect x="22" y="440.3" width="1" height="1.5" fill="#d4d4d4"/><rect x="23" y="440.3" width="6" height="1.5" fill="#9cdcfe"/><rect x="29" y="440.3" width="1" height="1.5" fill="#d4d4d4"/><rect x="30" y="440.3" width="7" height="1.5" fill="#9cdcfe"/><rect x="37" y="440.3" width="1" height="1.5" fill="#d4d4d4"/><rect x="38" y="440.3" width="1" height="1.5" fill="#d4d4d4"/><rect x="12" y="442.3" width="1" height="1.5" fill="#d4d4d4"/><rect x="13" y="442.3" width="16" height="1.5" fill="#4ec9b0"/><rect x="30" y="442.3" width="7" height="1.5" fill="#9cdcfe"/><rect x="37" y="442.3" width="1" height="1.5" fill="#d4d4d4"/><rect x="38" y="442.3" width="1" height="1.5" fill="#d4d4d4"/><rect x="39" y="442.3" width="1" height="1.5" fill="#d4d4d4"/><rect x="40" y="442.3" width="1" height="1.5" fill="#d4d4d4"/><rect x="42" y="442.3" width="1" height="1.5" fill="#d4d4d4"/><rect x="43" y="442.3" width="1" height="1.5" fill="#d4d4d4"/><rect x="45" y="442.3" width="8" height="1.5" fill="#dcdcaa"/><rect x="53" y="442.3" width="1" height="1.5" fill="#d4d4d4"/><rect x="54" y="442.3" width="4" height="1.5" fill="#569cd6"/><rect x="58" y="442.3" width="1" height="1.5" fill="#d4d4d4"/><rect x="59" y="442.3" width="1" height="1.5" fill="#d4d4d4"/><rect x="61" y="442.3" width="5" height="1.5" fill="#9cdcfe"/><rect x="66" y="442.3" width="1" height="1.5" fill="#d4d4d4"/><rect x="67" y="442.3" width="1" height="1.5" fill="#d4d4d4"/><rect x="68" y="442.3" width="6" height="1.5" fill="#9cdcfe"/><rect x="74" y="442.3" width="1" height="1.5" fill="#d4d4d4"/><rect x="75" y="442.3" width="6" height="1.5" fill="#9cdcfe"/><rect x="81" y="442.3" width="1" height="1.5" fill="#d4d4d4"/><rect x="82" y="442.3" width="1" height="1.5" fill="#d4d4d4"/><rect x="14" y="444.3" width="1" height="1.5" fill="#d4d4d4"/><rect x="15" y="444.3" width="8" height="1.5" fill="#4ec9b0"/><rect x="24" y="444.3" width="4" height="1.5" fill="#9cdcfe"/><rect x="28" y="444.3" width="1" height="1.5" fill="#d4d4d4"/><rect x="29" y="444.3" width="9" height="1.5" fill="#ce9178"/><rect x="39" y="444.3" width="4" height="1.5" fill="#9cdcfe"/><rect x="43" y="444.3" width="1" height="1.5" fill="#d4d4d4"/><rect x="44" y="444.3" width="1" height="1.5" fill="#d4d4d4"/><rect x="45" y="444.3" width="2" height="1.5" fill="#b5cea8"/><rect x="47" y="444.3" width="1" height="1.5" fill="#d4d4d4"/><rect x="49" y="444.3" width="5" height="1.5" fill="#9cdcfe"/><rect x="54" y="444.3" width="1" height="1.5" fill="#d4d4d4"/><rect x="55" y="444.3" width="6" height="1.5" fill="#ce9178"/><rect x="62" y="444.3" width="1" height="1.5" fill="#d4d4d4"/><rect x="63" y="444.3" width="1" height="1.5" fill="#d4d4d4"/><rect x="14" y="446.3" width="1" height="1.5" fill="#d4d4d4"/><rect x="15" y="446.3" width="4" height="1.5" fill="#4ec9b0"/><rect x="20" y="446.3" width="5" height="1.5" fill="#9cdcfe"/><rect x="25" y="446.3" width="1" height="1.5" fill="#d4d4d4"/><rect x="26" y="446.3" width="1" height="1.5" fill="#d4d4d4"/><rect x="27" y="446.3" width="6" height="1.5" fill="#9cdcfe"/><rect x="33" y="446.3" width="1" height="1.5" fill="#d4d4d4"/><rect x="34" y="446.3" width="10" height="1.5" fill="#9cdcfe"/><rect x="44" y="446.3" width="1" height="1.5" fill="#d4d4d4"/><rect x="45" y="446.3" width="1" height="1.5" fill="#d4d4d4"/><rect x="46" y="446.3" width="6" height="1.5" fill="#9cdcfe"/><rect x="52" y="446.3" width="1" height="1.5" fill="#d4d4d4"/><rect x="53" y="446.3" width="1" height="1.5" fill="#d4d4d4"/><rect x="54" y="446.3" width="4" height="1.5" fill="#4ec9b0"/><rect x="58" y="446.3" width="1" height="1.5" fill="#d4d4d4"/><rect x="12" y="448.3" width="1" height="1.5" fill="#d4d4d4"/><rect x="13" y="448.3" width="1" height="1.5" fill="#d4d4d4"/><rect x="14" y="448.3" width="16" height="1.5" fill="#4ec9b0"/><rect x="30" y="448.3" width="1" height="1.5" fill="#d4d4d4"/><rect x="12" y="452.3" width="1" height="1.5" fill="#d4d4d4"/><rect x="13" y="452.3" width="16" height="1.5" fill="#4ec9b0"/><rect x="30" y="452.3" width="7" height="1.5" fill="#9cdcfe"/><rect x="37" y="452.3" width="1" height="1.5" fill="#d4d4d4"/><rect x="38" y="452.3" width="1" height="1.5" fill="#d4d4d4"/><rect x="39" y="452.3" width="11" height="1.5" fill="#9cdcfe"/><rect x="50" y="452.3" width="1" height="1.5" fill="#d4d4d4"/><rect x="52" y="452.3" width="5" height="1.5" fill="#9cdcfe"/><rect x="57" y="452.3" width="1" height="1.5" fill="#d4d4d4"/><rect x="58" y="452.3" width="1" height="1.5" fill="#d4d4d4"/><rect x="59" y="452.3" width="6" height="1.5" fill="#9cdcfe"/><rect x="65" y="452.3" width="1" height="1.5" fill="#d4d4d4"/><rect x="66" y="452.3" width="6" height="1.5" fill="#9cdcfe"/><rect x="72" y="452.3" width="1" height="1.5" fill="#d4d4d4"/><rect x="73" y="452.3" width="1" height="1.5" fill="#d4d4d4"/><rect x="14" y="454.3" width="1" height="1.5" fill="#d4d4d4"/><rect x="15" y="454.3" width="8" height="1.5" fill="#4ec9b0"/><rect x="24" y="454.3" width="4" height="1.5" fill="#9cdcfe"/><rect x="28" y="454.3" width="1" height="1.5" fill="#d4d4d4"/><rect x="29" y="454.3" width="14" height="1.5" fill="#ce9178"/><rect x="44" y="454.3" width="4" height="1.5" fill="#9cdcfe"/><rect x="48" y="454.3" width="1" height="1.5" fill="#d4d4d4"/><rect x="49" y="454.3" width="1" height="1.5" fill="#d4d4d4"/><rect x="50" y="454.3" width="2" height="1.5" fill="#b5cea8"/><rect x="52" y="454.3" width="1" height="1.5" fill="#d4d4d4"/><rect x="54" y="454.3" width="5" height="1.5" fill="#9cdcfe"/><rect x="59" y="454.3" width="1" height="1.5" fill="#d4d4d4"/><rect x="60" y="454.3" width="6" height="1.5" fill="#ce9178"/><rect x="67" y="454.3" width="1" height="1.5" fill="#d4d4d4"/><rect x="68" y="454.3" width="1" height="1.5" fill="#d4d4d4"/><rect x="14" y="456.3" width="1" height="1.5" fill="#d4d4d4"/><rect x="15" y="456.3" width="4" height="1.5" fill="#4ec9b0"/><rect x="20" y="456.3" width="5" height="1.5" fill="#9cdcfe"/><rect x="25" y="456.3" width="1" height="1.5" fill="#d4d4d4"/><rect x="26" y="456.3" width="1" height="1.5" fill="#d4d4d4"/><rect x="27" y="456.3" width="6" height="1.5" fill="#9cdcfe"/><rect x="33" y="456.3" width="1" height="1.5" fill="#d4d4d4"/><rect x="34" y="456.3" width="10" height="1.5" fill="#9cdcfe"/><rect x="44" y="456.3" width="1" height="1.5" fill="#d4d4d4"/><rect x="45" y="456.3" width="1" height="1.5" fill="#d4d4d4"/><rect x="46" y="456.3" width="6" height="1.5" fill="#9cdcfe"/><rect x="52" y="456.3" width="1" height="1.5" fill="#d4d4d4"/><rect x="53" y="456.3" width="1" height="1.5" fill="#d4d4d4"/><rect x="54" y="456.3" width="4" height="1.5" fill="#4ec9b0"/><rect x="58" y="456.3" width="1" height="1.5" fill="#d4d4d4"/><rect x="12" y="458.3" width="1" height="1.5" fill="#d4d4d4"/><rect x="13" y="458.3" width="1" height="1.5" fill="#d4d4d4"/><rect x="14" y="458.3" width="16" height="1.5" fill="#4ec9b0"/><rect x="30" y="458.3" width="1" height="1.5" fill="#d4d4d4"/><rect x="10" y="460.3" width="1" height="1.5" fill="#d4d4d4"/><rect x="11" y="460.3" width="1" height="1.5" fill="#d4d4d4"/><rect x="12" y="460.3" width="4" height="1.5" fill="#4ec9b0"/><rect x="16" y="460.3" width="1" height="1.5" fill="#d4d4d4"/><rect x="8" y="462.3" width="1" height="1.5" fill="#d4d4d4"/><rect x="9" y="462.3" width="1" height="1.5" fill="#d4d4d4"/><rect x="6" y="464.3" width="1" height="1.5" fill="#d4d4d4"/><rect x="7" y="464.3" width="1" height="1.5" fill="#d4d4d4"/><rect x="8" y="464.3" width="4" height="1.5" fill="#4ec9b0"/><rect x="12" y="464.3" width="1" height="1.5" fill="#d4d4d4"/><rect x="6" y="466.3" width="26" height="1.5" fill="#6a9955"/><rect x="6" y="468.3" width="1" height="1.5" fill="#d4d4d4"/><rect x="7" y="468.3" width="9" height="1.5" fill="#9cdcfe"/><rect x="17" y="468.3" width="1" height="1.5" fill="#d4d4d4"/><rect x="18" y="468.3" width="1" height="1.5" fill="#d4d4d4"/><rect x="20" y="468.3" width="1" height="1.5" fill="#d4d4d4"/><rect x="8" y="470.3" width="1" height="1.5" fill="#d4d4d4"/><rect x="9" y="470.3" width="4" height="1.5" fill="#4ec9b0"/><rect x="14" y="470.3" width="5" height="1.5" fill="#9cdcfe"/><rect x="19" y="470.3" width="1" height="1.5" fill="#d4d4d4"/><rect x="20" y="470.3" width="1" height="1.5" fill="#d4d4d4"/><rect x="21" y="470.3" width="6" height="1.5" fill="#9cdcfe"/><rect x="27" y="470.3" width="1" height="1.5" fill="#d4d4d4"/><rect x="28" y="470.3" width="7" height="1.5" fill="#9cdcfe"/><rect x="35" y="470.3" width="1" height="1.5" fill="#d4d4d4"/><rect x="36" y="470.3" width="1" height="1.5" fill="#d4d4d4"/><rect x="10" y="472.3" width="1" height="1.5" fill="#d4d4d4"/><rect x="11" y="472.3" width="10" height="1.5" fill="#4ec9b0"/><rect x="12" y="474.3" width="6" height="1.5" fill="#9cdcfe"/><rect x="18" y="474.3" width="1" height="1.5" fill="#d4d4d4"/><rect x="19" y="474.3" width="1" height="1.5" fill="#d4d4d4"/><rect x="20" y="474.3" width="7" height="1.5" fill="#dcdcaa"/><rect x="27" y="474.3" width="1" height="1.5" fill="#d4d4d4"/><rect x="28" y="474.3" width="26" height="1.5" fill="#ce9178"/><rect x="54" y="474.3" width="1" height="1.5" fill="#d4d4d4"/><rect x="55" y="474.3" width="1" height="1.5" fill="#d4d4d4"/><rect x="12" y="476.3" width="8" height="1.5" fill="#9cdcfe"/><rect x="12" y="478.3" width="4" height="1.5" fill="#9cdcfe"/><rect x="12" y="480.3" width="5" height="1.5" fill="#9cdcfe"/><rect x="17" y="480.3" width="1" height="1.5" fill="#d4d4d4"/><rect x="18" y="480.3" width="1" height="1.5" fill="#d4d4d4"/><rect x="19" y="480.3" width="1" height="1.5" fill="#d4d4d4"/><rect x="21" y="480.3" width="5" height="1.5" fill="#9cdcfe"/><rect x="26" y="480.3" width="1" height="1.5" fill="#d4d4d4"/><rect x="28" y="480.3" width="3" height="1.5" fill="#b5cea8"/><rect x="31" y="480.3" width="1" height="1.5" fill="#d4d4d4"/><rect x="33" y="480.3" width="6" height="1.5" fill="#9cdcfe"/><rect x="39" y="480.3" width="1" height="1.5" fill="#d4d4d4"/><rect x="41" y="480.3" width="3" height="1.5" fill="#b5cea8"/><rect x="45" y="480.3" width="1" height="1.5" fill="#d4d4d4"/><rect x="46" y="480.3" width="1" height="1.5" fill="#d4d4d4"/><rect x="10" y="482.3" width="1" height="1.5" fill="#d4d4d4"/><rect x="11" y="482.3" width="1" height="1.5" fill="#d4d4d4"/><rect x="10" y="484.3" width="1" height="1.5" fill="#d4d4d4"/><rect x="11" y="484.3" width="4" height="1.5" fill="#4ec9b0"/><rect x="16" y="484.3" width="5" height="1.5" fill="#9cdcfe"/><rect x="21" y="484.3" width="1" height="1.5" fill="#d4d4d4"/><rect x="22" y="484.3" width="1" height="1.5" fill="#d4d4d4"/><rect x="23" y="484.3" width="6" height="1.5" fill="#9cdcfe"/><rect x="29" y="484.3" width="1" height="1.5" fill="#d4d4d4"/><rect x="30" y="484.3" width="13" height="1.5" fill="#9cdcfe"/><rect x="43" y="484.3" width="1" height="1.5" fill="#d4d4d4"/><rect x="44" y="484.3" width="1" height="1.5" fill="#d4d4d4"/><rect x="45" y="484.3" width="9" height="1.5" fill="#9cdcfe"/><rect x="54" y="484.3" width="1" height="1.5" fill="#d4d4d4"/><rect x="55" y="484.3" width="1" height="1.5" fill="#d4d4d4"/><rect x="56" y="484.3" width="1" height="1.5" fill="#d4d4d4"/><rect x="57" y="484.3" width="1" height="1.5" fill="#d4d4d4"/><rect x="58" y="484.3" width="1" height="1.5" fill="#d4d4d4"/><rect x="59" y="484.3" width="4" height="1.5" fill="#4ec9b0"/><rect x="63" y="484.3" width="1" height="1.5" fill="#d4d4d4"/><rect x="8" y="486.3" width="1" height="1.5" fill="#d4d4d4"/><rect x="9" y="486.3" width="1" height="1.5" fill="#d4d4d4"/><rect x="10" y="486.3" width="4" height="1.5" fill="#4ec9b0"/><rect x="14" y="486.3" width="1" height="1.5" fill="#d4d4d4"/><rect x="6" y="488.3" width="1" height="1.5" fill="#d4d4d4"/><rect x="7" y="488.3" width="1" height="1.5" fill="#d4d4d4"/><rect x="6" y="492.3" width="1" height="1.5" fill="#d4d4d4"/><rect x="7" y="492.3" width="8" height="1.5" fill="#4ec9b0"/><rect x="8" y="494.3" width="7" height="1.5" fill="#9cdcfe"/><rect x="15" y="494.3" width="1" height="1.5" fill="#d4d4d4"/><rect x="16" y="494.3" width="1" height="1.5" fill="#d4d4d4"/><rect x="17" y="494.3" width="5" height="1.5" fill="#9cdcfe"/><rect x="22" y="494.3" width="1" height="1.5" fill="#d4d4d4"/><rect x="23" y="494.3" width="7" height="1.5" fill="#9cdcfe"/><rect x="30" y="494.3" width="1" height="1.5" fill="#d4d4d4"/><rect x="8" y="496.3" width="4" height="1.5" fill="#9cdcfe"/><rect x="12" y="496.3" width="1" height="1.5" fill="#d4d4d4"/><rect x="13" y="496.3" width="1" height="1.5" fill="#d4d4d4"/><rect x="14" y="496.3" width="5" height="1.5" fill="#9cdcfe"/><rect x="19" y="496.3" width="1" height="1.5" fill="#d4d4d4"/><rect x="20" y="496.3" width="4" height="1.5" fill="#9cdcfe"/><rect x="24" y="496.3" width="1" height="1.5" fill="#d4d4d4"/><rect x="8" y="498.3" width="7" height="1.5" fill="#9cdcfe"/><rect x="15" y="498.3" width="1" height="1.5" fill="#d4d4d4"/><rect x="16" y="498.3" width="1" height="1.5" fill="#d4d4d4"/><rect x="17" y="498.3" width="5" height="1.5" fill="#9cdcfe"/><rect x="22" y="498.3" width="1" height="1.5" fill="#d4d4d4"/><rect x="23" y="498.3" width="7" height="1.5" fill="#9cdcfe"/><rect x="30" y="498.3" width="1" height="1.5" fill="#d4d4d4"/><rect x="8" y="500.3" width="7" height="1.5" fill="#9cdcfe"/><rect x="15" y="500.3" width="1" height="1.5" fill="#d4d4d4"/><rect x="16" y="500.3" width="1" height="1.5" fill="#d4d4d4"/><rect x="17" y="500.3" width="1" height="1.5" fill="#d4d4d4"/><rect x="18" y="500.3" width="1" height="1.5" fill="#d4d4d4"/><rect x="20" y="500.3" width="1" height="1.5" fill="#d4d4d4"/><rect x="21" y="500.3" width="1" height="1.5" fill="#d4d4d4"/><rect x="23" y="500.3" width="1" height="1.5" fill="#d4d4d4"/><rect x="10" y="502.3" width="8" height="1.5" fill="#dcdcaa"/><rect x="18" y="502.3" width="1" height="1.5" fill="#d4d4d4"/><rect x="19" y="502.3" width="1" height="1.5" fill="#d4d4d4"/><rect x="21" y="502.3" width="1" height="1.5" fill="#d4d4d4"/><rect x="22" y="502.3" width="1" height="1.5" fill="#d4d4d4"/><rect x="23" y="502.3" width="1" height="1.5" fill="#d4d4d4"/><rect x="24" y="502.3" width="5" height="1.5" fill="#9cdcfe"/><rect x="29" y="502.3" width="1" height="1.5" fill="#d4d4d4"/><rect x="31" y="502.3" width="7" height="1.5" fill="#9cdcfe"/><rect x="38" y="502.3" width="1" height="1.5" fill="#d4d4d4"/><rect x="40" y="502.3" width="5" height="1.5" fill="#569cd6"/><rect x="46" y="502.3" width="1" height="1.5" fill="#d4d4d4"/><rect x="47" y="502.3" width="1" height="1.5" fill="#d4d4d4"/><rect x="48" y="502.3" width="1" height="1.5" fill="#d4d4d4"/><rect x="10" y="504.3" width="2" height="1.5" fill="#c586c0"/><rect x="13" y="504.3" width="1" height="1.5" fill="#d4d4d4"/><rect x="14" y="504.3" width="5" height="1.5" fill="#9cdcfe"/><rect x="19" y="504.3" width="1" height="1.5" fill="#d4d4d4"/><rect x="20" y="504.3" width="4" height="1.5" fill="#9cdcfe"/><rect x="25" y="504.3" width="1" height="1.5" fill="#d4d4d4"/><rect x="26" y="504.3" width="1" height="1.5" fill="#d4d4d4"/><rect x="27" y="504.3" width="1" height="1.5" fill="#d4d4d4"/><rect x="29" y="504.3" width="9" height="1.5" fill="#ce9178"/><rect x="38" y="504.3" width="1" height="1.5" fill="#d4d4d4"/><rect x="40" y="504.3" width="1" height="1.5" fill="#d4d4d4"/><rect x="12" y="506.3" width="10" height="1.5" fill="#9cdcfe"/><rect x="22" y="506.3" width="1" height="1.5" fill="#d4d4d4"/><rect x="23" y="506.3" width="7" height="1.5" fill="#dcdcaa"/><rect x="30" y="506.3" width="1" height="1.5" fill="#d4d4d4"/><rect x="31" y="506.3" width="6" height="1.5" fill="#ce9178"/><rect x="37" y="506.3" width="1" height="1.5" fill="#d4d4d4"/><rect x="38" y="506.3" width="1" height="1.5" fill="#d4d4d4"/><rect x="10" y="508.3" width="1" height="1.5" fill="#d4d4d4"/><rect x="8" y="510.3" width="1" height="1.5" fill="#d4d4d4"/><rect x="9" y="510.3" width="1" height="1.5" fill="#d4d4d4"/><rect x="6" y="512.3" width="1" height="1.5" fill="#d4d4d4"/><rect x="7" y="512.3" width="1" height="1.5" fill="#d4d4d4"/><rect x="4" y="516.3" width="1" height="1.5" fill="#d4d4d4"/><rect x="5" y="516.3" width="1" height="1.5" fill="#d4d4d4"/><rect x="6" y="516.3" width="4" height="1.5" fill="#4ec9b0"/><rect x="10" y="516.3" width="1" height="1.5" fill="#d4d4d4"/><rect x="2" y="518.3" width="1" height="1.5" fill="#d4d4d4"/><rect x="3" y="518.3" width="1" height="1.5" fill="#d4d4d4"/><rect x="0" y="520.3" width="1" height="1.5" fill="#d4d4d4"/><rect x="0" y="524.3" width="30" height="1.5" fill="#6a9955"/><rect x="0" y="526.3" width="8" height="1.5" fill="#569cd6"/><rect x="9" y="526.3" width="8" height="1.5" fill="#dcdcaa"/><rect x="17" y="526.3" width="1" height="1.5" fill="#d4d4d4"/><rect x="18" y="526.3" width="1" height="1.5" fill="#d4d4d4"/><rect x="20" y="526.3" width="7" height="1.5" fill="#9cdcfe"/><rect x="27" y="526.3" width="1" height="1.5" fill="#d4d4d4"/><rect x="29" y="526.3" width="4" height="1.5" fill="#9cdcfe"/><rect x="33" y="526.3" width="1" height="1.5" fill="#d4d4d4"/><rect x="35" y="526.3" width="7" height="1.5" fill="#9cdcfe"/><rect x="42" y="526.3" width="1" height="1.5" fill="#d4d4d4"/><rect x="44" y="526.3" width="7" height="1.5" fill="#9cdcfe"/><rect x="52" y="526.3" width="1" height="1.5" fill="#d4d4d4"/><rect x="53" y="526.3" width="1" height="1.5" fill="#d4d4d4"/><rect x="55" y="526.3" width="1" height="1.5" fill="#d4d4d4"/><rect x="2" y="528.3" width="5" height="1.5" fill="#569cd6"/><rect x="8" y="528.3" width="7" height="1.5" fill="#9cdcfe"/><rect x="16" y="528.3" width="1" height="1.5" fill="#d4d4d4"/><rect x="18" y="528.3" width="4" height="1.5" fill="#9cdcfe"/><rect x="23" y="528.3" width="1" height="1.5" fill="#d4d4d4"/><rect x="24" y="528.3" width="1" height="1.5" fill="#d4d4d4"/><rect x="25" y="528.3" width="1" height="1.5" fill="#d4d4d4"/><rect x="27" y="528.3" width="7" height="1.5" fill="#ce9178"/><rect x="34" y="528.3" width="1" height="1.5" fill="#d4d4d4"/><rect x="2" y="532.3" width="6" height="1.5" fill="#c586c0"/><rect x="9" y="532.3" width="1" height="1.5" fill="#d4d4d4"/><rect x="4" y="534.3" width="1" height="1.5" fill="#d4d4d4"/><rect x="5" y="534.3" width="5" height="1.5" fill="#4ec9b0"/><rect x="11" y="534.3" width="11" height="1.5" fill="#9cdcfe"/><rect x="23" y="534.3" width="7" height="1.5" fill="#9cdcfe"/><rect x="30" y="534.3" width="1" height="1.5" fill="#d4d4d4"/><rect x="31" y="534.3" width="1" height="1.5" fill="#d4d4d4"/><rect x="32" y="534.3" width="7" height="1.5" fill="#9cdcfe"/><rect x="39" y="534.3" width="1" height="1.5" fill="#d4d4d4"/><rect x="41" y="534.3" width="13" height="1.5" fill="#9cdcfe"/><rect x="54" y="534.3" width="1" height="1.5" fill="#d4d4d4"/><rect x="55" y="534.3" width="6" height="1.5" fill="#ce9178"/><rect x="61" y="534.3" width="1" height="1.5" fill="#d4d4d4"/><rect x="6" y="536.3" width="1" height="1.5" fill="#d4d4d4"/><rect x="7" y="536.3" width="4" height="1.5" fill="#4ec9b0"/><rect x="12" y="536.3" width="5" height="1.5" fill="#9cdcfe"/><rect x="17" y="536.3" width="1" height="1.5" fill="#d4d4d4"/><rect x="18" y="536.3" width="1" height="1.5" fill="#d4d4d4"/><rect x="19" y="536.3" width="6" height="1.5" fill="#9cdcfe"/><rect x="25" y="536.3" width="1" height="1.5" fill="#d4d4d4"/><rect x="26" y="536.3" width="7" height="1.5" fill="#9cdcfe"/><rect x="33" y="536.3" width="1" height="1.5" fill="#d4d4d4"/><rect x="34" y="536.3" width="1" height="1.5" fill="#d4d4d4"/><rect x="8" y="540.3" width="16" height="1.5" fill="#6a9955"/><rect x="8" y="544.3" width="1" height="1.5" fill="#d4d4d4"/><rect x="9" y="544.3" width="4" height="1.5" fill="#4ec9b0"/><rect x="14" y="544.3" width="5" height="1.5" fill="#9cdcfe"/><rect x="19" y="544.3" width="1" height="1.5" fill="#d4d4d4"/><rect x="20" y="544.3" width="1" height="1.5" fill="#d4d4d4"/><rect x="21" y="544.3" width="6" height="1.5" fill="#9cdcfe"/><rect x="27" y="544.3" width="1" height="1.5" fill="#d4d4d4"/><rect x="28" y="544.3" width="7" height="1.5" fill="#9cdcfe"/><rect x="35" y="544.3" width="1" height="1.5" fill="#d4d4d4"/><rect x="36" y="544.3" width="1" height="1.5" fill="#d4d4d4"/><rect x="10" y="546.3" width="1" height="1.5" fill="#d4d4d4"/><rect x="11" y="546.3" width="8" height="1.5" fill="#4ec9b0"/><rect x="12" y="548.3" width="4" height="1.5" fill="#9cdcfe"/><rect x="16" y="548.3" width="1" height="1.5" fill="#d4d4d4"/><rect x="17" y="548.3" width="1" height="1.5" fill="#d4d4d4"/><rect x="14" y="550.3" width="7" height="1.5" fill="#9cdcfe"/><rect x="16" y="552.3" width="1" height="1.5" fill="#d4d4d4"/><rect x="18" y="552.3" width="14" height="1.5" fill="#ce9178"/><rect x="33" y="552.3" width="1" height="1.5" fill="#d4d4d4"/><rect x="35" y="552.3" width="18" height="1.5" fill="#ce9178"/><rect x="16" y="554.3" width="1" height="1.5" fill="#d4d4d4"/><rect x="18" y="554.3" width="26" height="1.5" fill="#ce9178"/><rect x="12" y="556.3" width="1" height="1.5" fill="#d4d4d4"/><rect x="12" y="558.3" width="4" height="1.5" fill="#9cdcfe"/><rect x="16" y="558.3" width="1" height="1.5" fill="#d4d4d4"/><rect x="17" y="558.3" width="1" height="1.5" fill="#d4d4d4"/><rect x="18" y="558.3" width="2" height="1.5" fill="#b5cea8"/><rect x="20" y="558.3" width="1" height="1.5" fill="#d4d4d4"/><rect x="12" y="560.3" width="5" height="1.5" fill="#9cdcfe"/><rect x="17" y="560.3" width="1" height="1.5" fill="#d4d4d4"/><rect x="18" y="560.3" width="1" height="1.5" fill="#d4d4d4"/><rect x="19" y="560.3" width="6" height="1.5" fill="#9cdcfe"/><rect x="25" y="560.3" width="1" height="1.5" fill="#d4d4d4"/><rect x="8" y="564.3" width="1" height="1.5" fill="#d4d4d4"/><rect x="9" y="564.3" width="1" height="1.5" fill="#d4d4d4"/><rect x="10" y="564.3" width="4" height="1.5" fill="#4ec9b0"/><rect x="14" y="564.3" width="1" height="1.5" fill="#d4d4d4"/><rect x="8" y="568.3" width="13" height="1.5" fill="#6a9955"/><rect x="8" y="570.3" width="1" height="1.5" fill="#d4d4d4"/><rect x="9" y="570.3" width="4" height="1.5" fill="#4ec9b0"/><rect x="14" y="570.3" width="5" height="1.5" fill="#9cdcfe"/><rect x="19" y="570.3" width="1" height="1.5" fill="#d4d4d4"/><rect x="20" y="570.3" width="1" height="1.5" fill="#d4d4d4"/><rect x="21" y="570.3" width="6" height="1.5" fill="#9cdcfe"/><rect x="27" y="570.3" width="1" height="1.5" fill="#d4d4d4"/><rect x="28" y="570.3" width="5" height="1.5" fill="#9cdcfe"/><rect x="33" y="570.3" width="1" height="1.5" fill="#d4d4d4"/><rect x="34" y="570.3" width="1" height="1.5" fill="#d4d4d4"/><rect x="10" y="572.3" width="1" height="1.5" fill="#d4d4d4"/><rect x="11" y="572.3" width="7" height="1.5" fill="#9cdcfe"/><rect x="19" y="572.3" width="1" height="1.5" fill="#d4d4d4"/><rect x="21" y="572.3" width="15" height="1.5" fill="#ce9178"/><rect x="37" y="572.3" width="1" height="1.5" fill="#d4d4d4"/><rect x="39" y="572.3" width="19" height="1.5" fill="#ce9178"/><rect x="58" y="572.3" width="1" height="1.5" fill="#d4d4d4"/><rect x="8" y="574.3" width="1" height="1.5" fill="#d4d4d4"/><rect x="9" y="574.3" width="1" height="1.5" fill="#d4d4d4"/><rect x="10" y="574.3" width="4" height="1.5" fill="#4ec9b0"/><rect x="14" y="574.3" width="1" height="1.5" fill="#d4d4d4"/><rect x="8" y="578.3" width="1" height="1.5" fill="#d4d4d4"/><rect x="9" y="578.3" width="4" height="1.5" fill="#4ec9b0"/><rect x="14" y="578.3" width="5" height="1.5" fill="#9cdcfe"/><rect x="19" y="578.3" width="1" height="1.5" fill="#d4d4d4"/><rect x="20" y="578.3" width="1" height="1.5" fill="#d4d4d4"/><rect x="21" y="578.3" width="6" height="1.5" fill="#9cdcfe"/><rect x="27" y="578.3" width="1" height="1.5" fill="#d4d4d4"/><rect x="28" y="578.3" width="3" height="1.5" fill="#9cdcfe"/><rect x="31" y="578.3" width="1" height="1.5" fill="#d4d4d4"/><rect x="32" y="578.3" width="1" height="1.5" fill="#d4d4d4"/><rect x="10" y="580.3" width="1" height="1.5" fill="#d4d4d4"/><rect x="11" y="580.3" width="7" height="1.5" fill="#9cdcfe"/><rect x="18" y="580.3" width="1" height="1.5" fill="#d4d4d4"/><rect x="8" y="582.3" width="1" height="1.5" fill="#d4d4d4"/><rect x="9" y="582.3" width="1" height="1.5" fill="#d4d4d4"/><rect x="10" y="582.3" width="4" height="1.5" fill="#4ec9b0"/><rect x="14" y="582.3" width="1" height="1.5" fill="#d4d4d4"/><rect x="8" y="586.3" width="1" height="1.5" fill="#d4d4d4"/><rect x="9" y="586.3" width="16" height="1.5" fill="#4ec9b0"/><rect x="26" y="586.3" width="5" height="1.5" fill="#9cdcfe"/><rect x="31" y="586.3" width="1" height="1.5" fill="#d4d4d4"/><rect x="32" y="586.3" width="1" height="1.5" fill="#d4d4d4"/><rect x="33" y="586.3" width="6" height="1.5" fill="#9cdcfe"/><rect x="39" y="586.3" width="1" height="1.5" fill="#d4d4d4"/><rect x="40" y="586.3" width="3" height="1.5" fill="#9cdcfe"/><rect x="43" y="586.3" width="1" height="1.5" fill="#d4d4d4"/><rect x="45" y="586.3" width="7" height="1.5" fill="#9cdcfe"/><rect x="52" y="586.3" width="1" height="1.5" fill="#d4d4d4"/><rect x="53" y="586.3" width="1" height="1.5" fill="#d4d4d4"/><rect x="54" y="586.3" width="7" height="1.5" fill="#9cdcfe"/><rect x="61" y="586.3" width="1" height="1.5" fill="#d4d4d4"/><rect x="62" y="586.3" width="1" height="1.5" fill="#d4d4d4"/><rect x="10" y="588.3" width="1" height="1.5" fill="#d4d4d4"/><rect x="11" y="588.3" width="4" height="1.5" fill="#4ec9b0"/><rect x="16" y="588.3" width="5" height="1.5" fill="#9cdcfe"/><rect x="21" y="588.3" width="1" height="1.5" fill="#d4d4d4"/><rect x="22" y="588.3" width="1" height="1.5" fill="#d4d4d4"/><rect x="23" y="588.3" width="6" height="1.5" fill="#9cdcfe"/><rect x="29" y="588.3" width="1" height="1.5" fill="#d4d4d4"/><rect x="30" y="588.3" width="7" height="1.5" fill="#9cdcfe"/><rect x="37" y="588.3" width="1" height="1.5" fill="#d4d4d4"/><rect x="38" y="588.3" width="1" height="1.5" fill="#d4d4d4"/><rect x="39" y="588.3" width="2" height="1.5" fill="#9cdcfe"/><rect x="41" y="588.3" width="1" height="1.5" fill="#d4d4d4"/><rect x="42" y="588.3" width="1" height="1.5" fill="#d4d4d4"/><rect x="43" y="588.3" width="4" height="1.5" fill="#4ec9b0"/><rect x="47" y="588.3" width="1" height="1.5" fill="#d4d4d4"/><rect x="8" y="590.3" width="1" height="1.5" fill="#d4d4d4"/><rect x="9" y="590.3" width="1" height="1.5" fill="#d4d4d4"/><rect x="10" y="590.3" width="16" height="1.5" fill="#4ec9b0"/><rect x="26" y="590.3" width="1" height="1.5" fill="#d4d4d4"/><rect x="6" y="592.3" width="1" height="1.5" fill="#d4d4d4"/><rect x="7" y="592.3" width="1" height="1.5" fill="#d4d4d4"/><rect x="8" y="592.3" width="4" height="1.5" fill="#4ec9b0"/><rect x="12" y="592.3" width="1" height="1.5" fill="#d4d4d4"/><rect x="4" y="598.3" width="1" height="1.5" fill="#d4d4d4"/><rect x="5" y="598.3" width="1" height="1.5" fill="#d4d4d4"/><rect x="6" y="598.3" width="4" height="1.5" fill="#4ec9b0"/><rect x="10" y="598.3" width="1" height="1.5" fill="#d4d4d4"/><rect x="4" y="600.3" width="1" height="1.5" fill="#d4d4d4"/><rect x="5" y="600.3" width="1" height="1.5" fill="#d4d4d4"/><rect x="6" y="600.3" width="5" height="1.5" fill="#4ec9b0"/><rect x="11" y="600.3" width="1" height="1.5" fill="#d4d4d4"/><rect x="2" y="602.3" width="1" height="1.5" fill="#d4d4d4"/><rect x="3" y="602.3" width="1" height="1.5" fill="#d4d4d4"/><rect x="0" y="606.3" width="1" height="1.5" fill="#d4d4d4"/><rect x="0" y="612.3" width="38" height="1.5" fill="#6a9955"/><rect x="0" y="616.3" width="5" height="1.5" fill="#569cd6"/><rect x="6" y="616.3" width="6" height="1.5" fill="#9cdcfe"/><rect x="13" y="616.3" width="1" height="1.5" fill="#d4d4d4"/><rect x="15" y="616.3" width="10" height="1.5" fill="#4ec9b0"/><rect x="25" y="616.3" width="1" height="1.5" fill="#d4d4d4"/><rect x="26" y="616.3" width="6" height="1.5" fill="#dcdcaa"/><rect x="32" y="616.3" width="1" height="1.5" fill="#d4d4d4"/><rect x="33" y="616.3" width="1" height="1.5" fill="#d4d4d4"/><rect x="2" y="618.3" width="9" height="1.5" fill="#9cdcfe"/><rect x="11" y="618.3" width="1" height="1.5" fill="#d4d4d4"/><rect x="13" y="618.3" width="1" height="1.5" fill="#d4d4d4"/><rect x="15" y="618.3" width="4" height="1.5" fill="#9cdcfe"/><rect x="19" y="618.3" width="1" height="1.5" fill="#d4d4d4"/><rect x="21" y="618.3" width="1" height="1.5" fill="#b5cea8"/><rect x="22" y="618.3" width="1" height="1.5" fill="#d4d4d4"/><rect x="24" y="618.3" width="15" height="1.5" fill="#9cdcfe"/><rect x="39" y="618.3" width="1" height="1.5" fill="#d4d4d4"/><rect x="41" y="618.3" width="6" height="1.5" fill="#ce9178"/><rect x="47" y="618.3" width="1" height="1.5" fill="#d4d4d4"/><rect x="49" y="618.3" width="10" height="1.5" fill="#9cdcfe"/><rect x="59" y="618.3" width="1" height="1.5" fill="#d4d4d4"/><rect x="61" y="618.3" width="3" height="1.5" fill="#ce9178"/><rect x="65" y="618.3" width="1" height="1.5" fill="#d4d4d4"/><rect x="66" y="618.3" width="1" height="1.5" fill="#d4d4d4"/><rect x="2" y="620.3" width="6" height="1.5" fill="#9cdcfe"/><rect x="8" y="620.3" width="1" height="1.5" fill="#d4d4d4"/><rect x="10" y="620.3" width="1" height="1.5" fill="#d4d4d4"/><rect x="12" y="620.3" width="4" height="1.5" fill="#9cdcfe"/><rect x="16" y="620.3" width="1" height="1.5" fill="#d4d4d4"/><rect x="18" y="620.3" width="1" height="1.5" fill="#b5cea8"/><rect x="19" y="620.3" width="1" height="1.5" fill="#d4d4d4"/><rect x="21" y="620.3" width="5" height="1.5" fill="#9cdcfe"/><rect x="26" y="620.3" width="1" height="1.5" fill="#d4d4d4"/><rect x="28" y="620.3" width="6" height="1.5" fill="#ce9178"/><rect x="35" y="620.3" width="1" height="1.5" fill="#d4d4d4"/><rect x="36" y="620.3" width="1" height="1.5" fill="#d4d4d4"/><rect x="38" y="620.3" width="2" height="1.5" fill="#9cdcfe"/><rect x="40" y="620.3" width="1" height="1.5" fill="#d4d4d4"/><rect x="42" y="620.3" width="1" height="1.5" fill="#b5cea8"/><rect x="43" y="620.3" width="1" height="1.5" fill="#d4d4d4"/><rect x="2" y="622.3" width="12" height="1.5" fill="#9cdcfe"/><rect x="14" y="622.3" width="1" height="1.5" fill="#d4d4d4"/><rect x="16" y="622.3" width="1" height="1.5" fill="#d4d4d4"/><rect x="18" y="622.3" width="5" height="1.5" fill="#9cdcfe"/><rect x="23" y="622.3" width="1" height="1.5" fill="#d4d4d4"/><rect x="25" y="622.3" width="6" height="1.5" fill="#ce9178"/><rect x="31" y="622.3" width="1" height="1.5" fill="#d4d4d4"/><rect x="33" y="622.3" width="6" height="1.5" fill="#9cdcfe"/><rect x="39" y="622.3" width="1" height="1.5" fill="#d4d4d4"/><rect x="41" y="622.3" width="6" height="1.5" fill="#ce9178"/><rect x="47" y="622.3" width="1" height="1.5" fill="#d4d4d4"/><rect x="49" y="622.3" width="8" height="1.5" fill="#9cdcfe"/><rect x="57" y="622.3" width="1" height="1.5" fill="#d4d4d4"/><rect x="59" y="622.3" width="10" height="1.5" fill="#ce9178"/><rect x="70" y="622.3" width="1" height="1.5" fill="#d4d4d4"/><rect x="71" y="622.3" width="1" height="1.5" fill="#d4d4d4"/><rect x="2" y="626.3" width="6" height="1.5" fill="#9cdcfe"/><rect x="8" y="626.3" width="1" height="1.5" fill="#d4d4d4"/><rect x="10" y="626.3" width="1" height="1.5" fill="#d4d4d4"/><rect x="4" y="628.3" width="8" height="1.5" fill="#9cdcfe"/><rect x="12" y="628.3" width="1" height="1.5" fill="#d4d4d4"/><rect x="14" y="628.3" width="10" height="1.5" fill="#ce9178"/><rect x="24" y="628.3" width="1" height="1.5" fill="#d4d4d4"/><rect x="4" y="630.3" width="3" height="1.5" fill="#9cdcfe"/><rect x="7" y="630.3" width="1" height="1.5" fill="#d4d4d4"/><rect x="9" y="630.3" width="2" height="1.5" fill="#b5cea8"/><rect x="11" y="630.3" width="1" height="1.5" fill="#d4d4d4"/><rect x="4" y="632.3" width="4" height="1.5" fill="#9cdcfe"/><rect x="8" y="632.3" width="1" height="1.5" fill="#d4d4d4"/><rect x="10" y="632.3" width="2" height="1.5" fill="#b5cea8"/><rect x="12" y="632.3" width="1" height="1.5" fill="#d4d4d4"/><rect x="4" y="634.3" width="5" height="1.5" fill="#9cdcfe"/><rect x="9" y="634.3" width="1" height="1.5" fill="#d4d4d4"/><rect x="11" y="634.3" width="2" height="1.5" fill="#b5cea8"/><rect x="13" y="634.3" width="1" height="1.5" fill="#d4d4d4"/><rect x="4" y="636.3" width="13" height="1.5" fill="#9cdcfe"/><rect x="17" y="636.3" width="1" height="1.5" fill="#d4d4d4"/><rect x="19" y="636.3" width="5" height="1.5" fill="#ce9178"/><rect x="24" y="636.3" width="1" height="1.5" fill="#d4d4d4"/><rect x="4" y="638.3" width="14" height="1.5" fill="#9cdcfe"/><rect x="18" y="638.3" width="1" height="1.5" fill="#d4d4d4"/><rect x="20" y="638.3" width="15" height="1.5" fill="#ce9178"/><rect x="35" y="638.3" width="1" height="1.5" fill="#d4d4d4"/><rect x="2" y="640.3" width="1" height="1.5" fill="#d4d4d4"/><rect x="3" y="640.3" width="1" height="1.5" fill="#d4d4d4"/><rect x="2" y="644.3" width="7" height="1.5" fill="#9cdcfe"/><rect x="9" y="644.3" width="1" height="1.5" fill="#d4d4d4"/><rect x="11" y="644.3" width="1" height="1.5" fill="#d4d4d4"/><rect x="4" y="646.3" width="5" height="1.5" fill="#9cdcfe"/><rect x="9" y="646.3" width="1" height="1.5" fill="#d4d4d4"/><rect x="11" y="646.3" width="2" height="1.5" fill="#b5cea8"/><rect x="13" y="646.3" width="1" height="1.5" fill="#d4d4d4"/><rect x="4" y="648.3" width="6" height="1.5" fill="#9cdcfe"/><rect x="10" y="648.3" width="1" height="1.5" fill="#d4d4d4"/><rect x="12" y="648.3" width="2" height="1.5" fill="#b5cea8"/><rect x="14" y="648.3" width="1" height="1.5" fill="#d4d4d4"/><rect x="4" y="650.3" width="12" height="1.5" fill="#9cdcfe"/><rect x="16" y="650.3" width="1" height="1.5" fill="#d4d4d4"/><rect x="18" y="650.3" width="2" height="1.5" fill="#b5cea8"/><rect x="20" y="650.3" width="1" height="1.5" fill="#d4d4d4"/><rect x="4" y="652.3" width="15" height="1.5" fill="#9cdcfe"/><rect x="19" y="652.3" width="1" height="1.5" fill="#d4d4d4"/><rect x="21" y="652.3" width="7" height="1.5" fill="#ce9178"/><rect x="28" y="652.3" width="1" height="1.5" fill="#d4d4d4"/><rect x="4" y="654.3" width="14" height="1.5" fill="#9cdcfe"/><rect x="18" y="654.3" width="1" height="1.5" fill="#d4d4d4"/><rect x="20" y="654.3" width="8" height="1.5" fill="#ce9178"/><rect x="28" y="654.3" width="1" height="1.5" fill="#d4d4d4"/><rect x="4" y="656.3" width="10" height="1.5" fill="#9cdcfe"/><rect x="14" y="656.3" width="1" height="1.5" fill="#d4d4d4"/><rect x="16" y="656.3" width="8" height="1.5" fill="#ce9178"/><rect x="24" y="656.3" width="1" height="1.5" fill="#d4d4d4"/><rect x="4" y="658.3" width="10" height="1.5" fill="#9cdcfe"/><rect x="14" y="658.3" width="1" height="1.5" fill="#d4d4d4"/><rect x="16" y="658.3" width="2" height="1.5" fill="#b5cea8"/><rect x="18" y="658.3" width="1" height="1.5" fill="#d4d4d4"/><rect x="4" y="660.3" width="6" height="1.5" fill="#9cdcfe"/><rect x="10" y="660.3" width="1" height="1.5" fill="#d4d4d4"/><rect x="12" y="660.3" width="2" height="1.5" fill="#b5cea8"/><rect x="14" y="660.3" width="1" height="1.5" fill="#d4d4d4"/><rect x="4" y="662.3" width="9" height="1.5" fill="#9cdcfe"/><rect x="13" y="662.3" width="1" height="1.5" fill="#d4d4d4"/><rect x="15" y="662.3" width="1" height="1.5" fill="#b5cea8"/><rect x="16" y="662.3" width="1" height="1.5" fill="#d4d4d4"/><rect x="4" y="664.3" width="7" height="1.5" fill="#9cdcfe"/><rect x="11" y="664.3" width="1" height="1.5" fill="#d4d4d4"/><rect x="13" y="664.3" width="1" height="1.5" fill="#b5cea8"/><rect x="14" y="664.3" width="1" height="1.5" fill="#d4d4d4"/><rect x="2" y="666.3" width="1" height="1.5" fill="#d4d4d4"/><rect x="3" y="666.3" width="1" height="1.5" fill="#d4d4d4"/><rect x="2" y="670.3" width="8" height="1.5" fill="#9cdcfe"/><rect x="10" y="670.3" width="1" height="1.5" fill="#d4d4d4"/><rect x="12" y="670.3" width="1" height="1.5" fill="#d4d4d4"/><rect x="4" y="672.3" width="8" height="1.5" fill="#9cdcfe"/><rect x="12" y="672.3" width="1" height="1.5" fill="#d4d4d4"/><rect x="14" y="672.3" width="10" height="1.5" fill="#ce9178"/><rect x="24" y="672.3" width="1" height="1.5" fill="#d4d4d4"/><rect x="4" y="674.3" width="3" height="1.5" fill="#9cdcfe"/><rect x="7" y="674.3" width="1" height="1.5" fill="#d4d4d4"/><rect x="9" y="674.3" width="8" height="1.5" fill="#ce9178"/><rect x="17" y="674.3" width="1" height="1.5" fill="#d4d4d4"/><rect x="4" y="676.3" width="5" height="1.5" fill="#9cdcfe"/><rect x="9" y="676.3" width="1" height="1.5" fill="#d4d4d4"/><rect x="11" y="676.3" width="6" height="1.5" fill="#ce9178"/><rect x="17" y="676.3" width="1" height="1.5" fill="#d4d4d4"/><rect x="4" y="678.3" width="10" height="1.5" fill="#9cdcfe"/><rect x="14" y="678.3" width="1" height="1.5" fill="#d4d4d4"/><rect x="16" y="678.3" width="8" height="1.5" fill="#ce9178"/><rect x="24" y="678.3" width="1" height="1.5" fill="#d4d4d4"/><rect x="2" y="680.3" width="1" height="1.5" fill="#d4d4d4"/><rect x="3" y="680.3" width="1" height="1.5" fill="#d4d4d4"/><rect x="2" y="684.3" width="6" height="1.5" fill="#9cdcfe"/><rect x="8" y="684.3" width="1" height="1.5" fill="#d4d4d4"/><rect x="10" y="684.3" width="1" height="1.5" fill="#d4d4d4"/><rect x="4" y="686.3" width="3" height="1.5" fill="#9cdcfe"/><rect x="7" y="686.3" width="1" height="1.5" fill="#d4d4d4"/><rect x="9" y="686.3" width="2" height="1.5" fill="#b5cea8"/><rect x="11" y="686.3" width="1" height="1.5" fill="#d4d4d4"/><rect x="4" y="688.3" width="6" height="1.5" fill="#9cdcfe"/><rect x="10" y="688.3" width="1" height="1.5" fill="#d4d4d4"/><rect x="12" y="688.3" width="3" height="1.5" fill="#b5cea8"/><rect x="15" y="688.3" width="1" height="1.5" fill="#d4d4d4"/><rect x="4" y="690.3" width="14" height="1.5" fill="#9cdcfe"/><rect x="18" y="690.3" width="1" height="1.5" fill="#d4d4d4"/><rect x="20" y="690.3" width="8" height="1.5" fill="#ce9178"/><rect x="28" y="690.3" width="1" height="1.5" fill="#d4d4d4"/><rect x="2" y="692.3" width="1" height="1.5" fill="#d4d4d4"/><rect x="3" y="692.3" width="1" height="1.5" fill="#d4d4d4"/><rect x="2" y="696.3" width="5" height="1.5" fill="#9cdcfe"/><rect x="7" y="696.3" width="1" height="1.5" fill="#d4d4d4"/><rect x="9" y="696.3" width="1" height="1.5" fill="#d4d4d4"/><rect x="4" y="698.3" width="8" height="1.5" fill="#9cdcfe"/><rect x="12" y="698.3" width="1" height="1.5" fill="#d4d4d4"/><rect x="14" y="698.3" width="10" height="1.5" fill="#ce9178"/><rect x="24" y="698.3" width="1" height="1.5" fill="#d4d4d4"/><rect x="4" y="700.3" width="3" height="1.5" fill="#9cdcfe"/><rect x="7" y="700.3" width="1" height="1.5" fill="#d4d4d4"/><rect x="9" y="700.3" width="2" height="1.5" fill="#b5cea8"/><rect x="11" y="700.3" width="1" height="1.5" fill="#d4d4d4"/><rect x="4" y="702.3" width="4" height="1.5" fill="#9cdcfe"/><rect x="8" y="702.3" width="1" height="1.5" fill="#d4d4d4"/><rect x="10" y="702.3" width="2" height="1.5" fill="#b5cea8"/><rect x="12" y="702.3" width="1" height="1.5" fill="#d4d4d4"/><rect x="4" y="704.3" width="15" height="1.5" fill="#9cdcfe"/><rect x="19" y="704.3" width="1" height="1.5" fill="#d4d4d4"/><rect x="21" y="704.3" width="9" height="1.5" fill="#ce9178"/><rect x="30" y="704.3" width="1" height="1.5" fill="#d4d4d4"/><rect x="2" y="706.3" width="1" height="1.5" fill="#d4d4d4"/><rect x="3" y="706.3" width="1" height="1.5" fill="#d4d4d4"/><rect x="2" y="710.3" width="3" height="1.5" fill="#9cdcfe"/><rect x="5" y="710.3" width="1" height="1.5" fill="#d4d4d4"/><rect x="7" y="710.3" width="1" height="1.5" fill="#d4d4d4"/><rect x="4" y="712.3" width="3" height="1.5" fill="#9cdcfe"/><rect x="7" y="712.3" width="1" height="1.5" fill="#d4d4d4"/><rect x="9" y="712.3" width="1" height="1.5" fill="#b5cea8"/><rect x="10" y="712.3" width="1" height="1.5" fill="#d4d4d4"/><rect x="4" y="714.3" width="4" height="1.5" fill="#9cdcfe"/><rect x="8" y="714.3" width="1" height="1.5" fill="#d4d4d4"/><rect x="10" y="714.3" width="1" height="1.5" fill="#b5cea8"/><rect x="11" y="714.3" width="1" height="1.5" fill="#d4d4d4"/><rect x="4" y="716.3" width="10" height="1.5" fill="#9cdcfe"/><rect x="14" y="716.3" width="1" height="1.5" fill="#d4d4d4"/><rect x="16" y="716.3" width="1" height="1.5" fill="#b5cea8"/><rect x="17" y="716.3" width="1" height="1.5" fill="#d4d4d4"/><rect x="4" y="718.3" width="10" height="1.5" fill="#9cdcfe"/><rect x="14" y="718.3" width="1" height="1.5" fill="#d4d4d4"/><rect x="16" y="718.3" width="1" height="1.5" fill="#b5cea8"/><rect x="17" y="718.3" width="1" height="1.5" fill="#d4d4d4"/><rect x="4" y="720.3" width="17" height="1.5" fill="#9cdcfe"/><rect x="21" y="720.3" width="1" height="1.5" fill="#d4d4d4"/><rect x="23" y="720.3" width="2" height="1.5" fill="#b5cea8"/><rect x="25" y="720.3" width="1" height="1.5" fill="#d4d4d4"/><rect x="2" y="722.3" width="1" height="1.5" fill="#d4d4d4"/><rect x="3" y="722.3" width="1" height="1.5" fill="#d4d4d4"/><rect x="2" y="726.3" width="6" height="1.5" fill="#9cdcfe"/><rect x="8" y="726.3" width="1" height="1.5" fill="#d4d4d4"/><rect x="10" y="726.3" width="1" height="1.5" fill="#d4d4d4"/><rect x="4" y="728.3" width="3" height="1.5" fill="#9cdcfe"/><rect x="7" y="728.3" width="1" height="1.5" fill="#d4d4d4"/><rect x="9" y="728.3" width="1" height="1.5" fill="#b5cea8"/><rect x="10" y="728.3" width="1" height="1.5" fill="#d4d4d4"/><rect x="4" y="730.3" width="5" height="1.5" fill="#9cdcfe"/><rect x="9" y="730.3" width="1" height="1.5" fill="#d4d4d4"/><rect x="11" y="730.3" width="1" height="1.5" fill="#b5cea8"/><rect x="12" y="730.3" width="1" height="1.5" fill="#d4d4d4"/><rect x="4" y="732.3" width="10" height="1.5" fill="#9cdcfe"/><rect x="14" y="732.3" width="1" height="1.5" fill="#d4d4d4"/><rect x="16" y="732.3" width="1" height="1.5" fill="#b5cea8"/><rect x="17" y="732.3" width="1" height="1.5" fill="#d4d4d4"/><rect x="4" y="734.3" width="10" height="1.5" fill="#9cdcfe"/><rect x="14" y="734.3" width="1" height="1.5" fill="#d4d4d4"/><rect x="16" y="734.3" width="1" height="1.5" fill="#b5cea8"/><rect x="17" y="734.3" width="1" height="1.5" fill="#d4d4d4"/><rect x="4" y="736.3" width="17" height="1.5" fill="#9cdcfe"/><rect x="21" y="736.3" width="1" height="1.5" fill="#d4d4d4"/><rect x="23" y="736.3" width="2" height="1.5" fill="#b5cea8"/><rect x="25" y="736.3" width="1" height="1.5" fill="#d4d4d4"/><rect x="2" y="738.3" width="1" height="1.5" fill="#d4d4d4"/><rect x="3" y="738.3" width="1" height="1.5" fill="#d4d4d4"/><rect x="2" y="742.3" width="7" height="1.5" fill="#9cdcfe"/><rect x="9" y="742.3" width="1" height="1.5" fill="#d4d4d4"/><rect x="11" y="742.3" width="1" height="1.5" fill="#d4d4d4"/><rect x="4" y="744.3" width="5" height="1.5" fill="#9cdcfe"/><rect x="9" y="744.3" width="1" height="1.5" fill="#d4d4d4"/><rect x="11" y="744.3" width="1" height="1.5" fill="#b5cea8"/><rect x="12" y="744.3" width="1" height="1.5" fill="#d4d4d4"/><rect x="4" y="746.3" width="4" height="1.5" fill="#9cdcfe"/><rect x="8" y="746.3" width="1" height="1.5" fill="#d4d4d4"/><rect x="10" y="746.3" width="1" height="1.5" fill="#b5cea8"/><rect x="11" y="746.3" width="1" height="1.5" fill="#d4d4d4"/><rect x="4" y="748.3" width="14" height="1.5" fill="#9cdcfe"/><rect x="18" y="748.3" width="1" height="1.5" fill="#d4d4d4"/><rect x="20" y="748.3" width="1" height="1.5" fill="#b5cea8"/><rect x="21" y="748.3" width="1" height="1.5" fill="#d4d4d4"/><rect x="4" y="750.3" width="14" height="1.5" fill="#9cdcfe"/><rect x="18" y="750.3" width="1" height="1.5" fill="#d4d4d4"/><rect x="20" y="750.3" width="1" height="1.5" fill="#b5cea8"/><rect x="21" y="750.3" width="1" height="1.5" fill="#d4d4d4"/><rect x="4" y="752.3" width="18" height="1.5" fill="#9cdcfe"/><rect x="22" y="752.3" width="1" height="1.5" fill="#d4d4d4"/><rect x="24" y="752.3" width="2" height="1.5" fill="#b5cea8"/><rect x="26" y="752.3" width="1" height="1.5" fill="#d4d4d4"/><rect x="2" y="754.3" width="1" height="1.5" fill="#d4d4d4"/><rect x="3" y="754.3" width="1" height="1.5" fill="#d4d4d4"/><rect x="2" y="758.3" width="7" height="1.5" fill="#9cdcfe"/><rect x="9" y="758.3" width="1" height="1.5" fill="#d4d4d4"/><rect x="11" y="758.3" width="1" height="1.5" fill="#d4d4d4"/><rect x="4" y="760.3" width="6" height="1.5" fill="#9cdcfe"/><rect x="10" y="760.3" width="1" height="1.5" fill="#d4d4d4"/><rect x="12" y="760.3" width="1" height="1.5" fill="#b5cea8"/><rect x="13" y="760.3" width="1" height="1.5" fill="#d4d4d4"/><rect x="4" y="762.3" width="4" height="1.5" fill="#9cdcfe"/><rect x="8" y="762.3" width="1" height="1.5" fill="#d4d4d4"/><rect x="10" y="762.3" width="1" height="1.5" fill="#b5cea8"/><rect x="11" y="762.3" width="1" height="1.5" fill="#d4d4d4"/><rect x="4" y="764.3" width="12" height="1.5" fill="#9cdcfe"/><rect x="16" y="764.3" width="1" height="1.5" fill="#d4d4d4"/><rect x="18" y="764.3" width="1" height="1.5" fill="#b5cea8"/><rect x="19" y="764.3" width="1" height="1.5" fill="#d4d4d4"/><rect x="4" y="766.3" width="12" height="1.5" fill="#9cdcfe"/><rect x="16" y="766.3" width="1" height="1.5" fill="#d4d4d4"/><rect x="18" y="766.3" width="1" height="1.5" fill="#b5cea8"/><rect x="19" y="766.3" width="1" height="1.5" fill="#d4d4d4"/><rect x="4" y="768.3" width="19" height="1.5" fill="#9cdcfe"/><rect x="23" y="768.3" width="1" height="1.5" fill="#d4d4d4"/><rect x="25" y="768.3" width="2" height="1.5" fill="#b5cea8"/><rect x="27" y="768.3" width="1" height="1.5" fill="#d4d4d4"/><rect x="2" y="770.3" width="1" height="1.5" fill="#d4d4d4"/><rect x="3" y="770.3" width="1" height="1.5" fill="#d4d4d4"/><rect x="2" y="774.3" width="6" height="1.5" fill="#9cdcfe"/><rect x="8" y="774.3" width="1" height="1.5" fill="#d4d4d4"/><rect x="10" y="774.3" width="1" height="1.5" fill="#d4d4d4"/><rect x="4" y="776.3" width="8" height="1.5" fill="#9cdcfe"/><rect x="12" y="776.3" width="1" height="1.5" fill="#d4d4d4"/><rect x="14" y="776.3" width="10" height="1.5" fill="#ce9178"/><rect x="24" y="776.3" width="1" height="1.5" fill="#d4d4d4"/><rect x="4" y="778.3" width="3" height="1.5" fill="#9cdcfe"/><rect x="7" y="778.3" width="1" height="1.5" fill="#d4d4d4"/><rect x="9" y="778.3" width="1" height="1.5" fill="#b5cea8"/><rect x="10" y="778.3" width="1" height="1.5" fill="#d4d4d4"/><rect x="4" y="780.3" width="4" height="1.5" fill="#9cdcfe"/><rect x="8" y="780.3" width="1" height="1.5" fill="#d4d4d4"/><rect x="10" y="780.3" width="1" height="1.5" fill="#b5cea8"/><rect x="11" y="780.3" width="1" height="1.5" fill="#d4d4d4"/><rect x="4" y="782.3" width="5" height="1.5" fill="#9cdcfe"/><rect x="9" y="782.3" width="1" height="1.5" fill="#d4d4d4"/><rect x="11" y="782.3" width="1" height="1.5" fill="#b5cea8"/><rect x="12" y="782.3" width="1" height="1.5" fill="#d4d4d4"/><rect x="4" y="784.3" width="15" height="1.5" fill="#9cdcfe"/><rect x="19" y="784.3" width="1" height="1.5" fill="#d4d4d4"/><rect x="21" y="784.3" width="17" height="1.5" fill="#ce9178"/><rect x="38" y="784.3" width="1" height="1.5" fill="#d4d4d4"/><rect x="4" y="786.3" width="4" height="1.5" fill="#9cdcfe"/><rect x="8" y="786.3" width="1" height="1.5" fill="#d4d4d4"/><rect x="10" y="786.3" width="1" height="1.5" fill="#b5cea8"/><rect x="11" y="786.3" width="1" height="1.5" fill="#d4d4d4"/><rect x="2" y="788.3" width="1" height="1.5" fill="#d4d4d4"/><rect x="3" y="788.3" width="1" height="1.5" fill="#d4d4d4"/><rect x="2" y="792.3" width="7" height="1.5" fill="#9cdcfe"/><rect x="9" y="792.3" width="1" height="1.5" fill="#d4d4d4"/><rect x="11" y="792.3" width="1" height="1.5" fill="#d4d4d4"/><rect x="4" y="794.3" width="6" height="1.5" fill="#9cdcfe"/><rect x="10" y="794.3" width="1" height="1.5" fill="#d4d4d4"/><rect x="12" y="794.3" width="1" height="1.5" fill="#b5cea8"/><rect x="13" y="794.3" width="1" height="1.5" fill="#d4d4d4"/><rect x="4" y="796.3" width="15" height="1.5" fill="#9cdcfe"/><rect x="19" y="796.3" width="1" height="1.5" fill="#d4d4d4"/><rect x="21" y="796.3" width="17" height="1.5" fill="#ce9178"/><rect x="38" y="796.3" width="1" height="1.5" fill="#d4d4d4"/><rect x="4" y="798.3" width="13" height="1.5" fill="#9cdcfe"/><rect x="17" y="798.3" width="1" height="1.5" fill="#d4d4d4"/><rect x="19" y="798.3" width="2" height="1.5" fill="#b5cea8"/><rect x="21" y="798.3" width="1" height="1.5" fill="#d4d4d4"/><rect x="4" y="800.3" width="10" height="1.5" fill="#9cdcfe"/><rect x="14" y="800.3" width="1" height="1.5" fill="#d4d4d4"/><rect x="16" y="800.3" width="1" height="1.5" fill="#b5cea8"/><rect x="17" y="800.3" width="1" height="1.5" fill="#d4d4d4"/><rect x="4" y="802.3" width="7" height="1.5" fill="#9cdcfe"/><rect x="11" y="802.3" width="1" height="1.5" fill="#d4d4d4"/><rect x="13" y="802.3" width="2" height="1.5" fill="#b5cea8"/><rect x="15" y="802.3" width="1" height="1.5" fill="#d4d4d4"/><rect x="2" y="804.3" width="1" height="1.5" fill="#d4d4d4"/><rect x="3" y="804.3" width="1" height="1.5" fill="#d4d4d4"/><rect x="2" y="808.3" width="10" height="1.5" fill="#9cdcfe"/><rect x="12" y="808.3" width="1" height="1.5" fill="#d4d4d4"/><rect x="14" y="808.3" width="1" height="1.5" fill="#d4d4d4"/><rect x="4" y="810.3" width="5" height="1.5" fill="#9cdcfe"/><rect x="9" y="810.3" width="1" height="1.5" fill="#d4d4d4"/><rect x="11" y="810.3" width="9" height="1.5" fill="#ce9178"/><rect x="20" y="810.3" width="1" height="1.5" fill="#d4d4d4"/><rect x="4" y="812.3" width="8" height="1.5" fill="#9cdcfe"/><rect x="12" y="812.3" width="1" height="1.5" fill="#d4d4d4"/><rect x="14" y="812.3" width="2" height="1.5" fill="#b5cea8"/><rect x="16" y="812.3" width="1" height="1.5" fill="#d4d4d4"/><rect x="4" y="814.3" width="10" height="1.5" fill="#9cdcfe"/><rect x="14" y="814.3" width="1" height="1.5" fill="#d4d4d4"/><rect x="16" y="814.3" width="5" height="1.5" fill="#ce9178"/><rect x="21" y="814.3" width="1" height="1.5" fill="#d4d4d4"/><rect x="4" y="816.3" width="13" height="1.5" fill="#9cdcfe"/><rect x="17" y="816.3" width="1" height="1.5" fill="#d4d4d4"/><rect x="19" y="816.3" width="3" height="1.5" fill="#b5cea8"/><rect x="22" y="816.3" width="1" height="1.5" fill="#d4d4d4"/><rect x="2" y="818.3" width="1" height="1.5" fill="#d4d4d4"/><rect x="3" y="818.3" width="1" height="1.5" fill="#d4d4d4"/><rect x="2" y="824.3" width="6" height="1.5" fill="#9cdcfe"/><rect x="8" y="824.3" width="1" height="1.5" fill="#d4d4d4"/><rect x="10" y="824.3" width="1" height="1.5" fill="#d4d4d4"/><rect x="4" y="826.3" width="8" height="1.5" fill="#9cdcfe"/><rect x="12" y="826.3" width="1" height="1.5" fill="#d4d4d4"/><rect x="14" y="826.3" width="10" height="1.5" fill="#ce9178"/><rect x="24" y="826.3" width="1" height="1.5" fill="#d4d4d4"/><rect x="4" y="828.3" width="3" height="1.5" fill="#9cdcfe"/><rect x="7" y="828.3" width="1" height="1.5" fill="#d4d4d4"/><rect x="9" y="828.3" width="2" height="1.5" fill="#b5cea8"/><rect x="11" y="828.3" width="1" height="1.5" fill="#d4d4d4"/><rect x="4" y="830.3" width="5" height="1.5" fill="#9cdcfe"/><rect x="9" y="830.3" width="1" height="1.5" fill="#d4d4d4"/><rect x="11" y="830.3" width="6" height="1.5" fill="#ce9178"/><rect x="17" y="830.3" width="1" height="1.5" fill="#d4d4d4"/><rect x="4" y="832.3" width="8" height="1.5" fill="#9cdcfe"/><rect x="12" y="832.3" width="1" height="1.5" fill="#d4d4d4"/><rect x="14" y="832.3" width="6" height="1.5" fill="#ce9178"/><rect x="20" y="832.3" width="1" height="1.5" fill="#d4d4d4"/><rect x="2" y="834.3" width="1" height="1.5" fill="#d4d4d4"/><rect x="3" y="834.3" width="1" height="1.5" fill="#d4d4d4"/><rect x="2" y="838.3" width="6" height="1.5" fill="#9cdcfe"/><rect x="8" y="838.3" width="1" height="1.5" fill="#d4d4d4"/><rect x="10" y="838.3" width="1" height="1.5" fill="#d4d4d4"/><rect x="4" y="840.3" width="3" height="1.5" fill="#9cdcfe"/><rect x="7" y="840.3" width="1" height="1.5" fill="#d4d4d4"/><rect x="9" y="840.3" width="2" height="1.5" fill="#b5cea8"/><rect x="11" y="840.3" width="1" height="1.5" fill="#d4d4d4"/><rect x="4" y="842.3" width="4" height="1.5" fill="#9cdcfe"/><rect x="8" y="842.3" width="1" height="1.5" fill="#d4d4d4"/><rect x="10" y="842.3" width="2" height="1.5" fill="#b5cea8"/><rect x="12" y="842.3" width="1" height="1.5" fill="#d4d4d4"/><rect x="4" y="844.3" width="12" height="1.5" fill="#9cdcfe"/><rect x="16" y="844.3" width="1" height="1.5" fill="#d4d4d4"/><rect x="18" y="844.3" width="2" height="1.5" fill="#b5cea8"/><rect x="20" y="844.3" width="1" height="1.5" fill="#d4d4d4"/><rect x="4" y="846.3" width="15" height="1.5" fill="#9cdcfe"/><rect x="19" y="846.3" width="1" height="1.5" fill="#d4d4d4"/><rect x="21" y="846.3" width="9" height="1.5" fill="#ce9178"/><rect x="30" y="846.3" width="1" height="1.5" fill="#d4d4d4"/><rect x="4" y="848.3" width="11" height="1.5" fill="#9cdcfe"/><rect x="15" y="848.3" width="1" height="1.5" fill="#d4d4d4"/><rect x="17" y="848.3" width="7" height="1.5" fill="#ce9178"/><rect x="24" y="848.3" width="1" height="1.5" fill="#d4d4d4"/><rect x="4" y="850.3" width="10" height="1.5" fill="#9cdcfe"/><rect x="14" y="850.3" width="1" height="1.5" fill="#d4d4d4"/><rect x="16" y="850.3" width="8" height="1.5" fill="#ce9178"/><rect x="24" y="850.3" width="1" height="1.5" fill="#d4d4d4"/><rect x="4" y="852.3" width="9" height="1.5" fill="#9cdcfe"/><rect x="13" y="852.3" width="1" height="1.5" fill="#d4d4d4"/><rect x="15" y="852.3" width="2" height="1.5" fill="#b5cea8"/><rect x="17" y="852.3" width="1" height="1.5" fill="#d4d4d4"/><rect x="22" y="852.3" width="18" height="1.5" fill="#6a9955"/><rect x="2" y="854.3" width="1" height="1.5" fill="#d4d4d4"/><rect x="3" y="854.3" width="1" height="1.5" fill="#d4d4d4"/><rect x="2" y="858.3" width="7" height="1.5" fill="#9cdcfe"/><rect x="9" y="858.3" width="1" height="1.5" fill="#d4d4d4"/><rect x="11" y="858.3" width="1" height="1.5" fill="#d4d4d4"/><rect x="4" y="860.3" width="10" height="1.5" fill="#9cdcfe"/><rect x="14" y="860.3" width="1" height="1.5" fill="#d4d4d4"/><rect x="16" y="860.3" width="5" height="1.5" fill="#ce9178"/><rect x="21" y="860.3" width="1" height="1.5" fill="#d4d4d4"/><rect x="4" y="862.3" width="4" height="1.5" fill="#9cdcfe"/><rect x="8" y="862.3" width="1" height="1.5" fill="#d4d4d4"/><rect x="10" y="862.3" width="7" height="1.5" fill="#ce9178"/><rect x="17" y="862.3" width="1" height="1.5" fill="#d4d4d4"/><rect x="4" y="864.3" width="14" height="1.5" fill="#9cdcfe"/><rect x="18" y="864.3" width="1" height="1.5" fill="#d4d4d4"/><rect x="20" y="864.3" width="13" height="1.5" fill="#ce9178"/><rect x="33" y="864.3" width="1" height="1.5" fill="#d4d4d4"/><rect x="4" y="866.3" width="17" height="1.5" fill="#9cdcfe"/><rect x="21" y="866.3" width="1" height="1.5" fill="#d4d4d4"/><rect x="23" y="866.3" width="2" height="1.5" fill="#b5cea8"/><rect x="25" y="866.3" width="1" height="1.5" fill="#d4d4d4"/><rect x="2" y="868.3" width="1" height="1.5" fill="#d4d4d4"/><rect x="3" y="868.3" width="1" height="1.5" fill="#d4d4d4"/><rect x="2" y="872.3" width="7" height="1.5" fill="#9cdcfe"/><rect x="9" y="872.3" width="1" height="1.5" fill="#d4d4d4"/><rect x="11" y="872.3" width="1" height="1.5" fill="#d4d4d4"/><rect x="4" y="874.3" width="10" height="1.5" fill="#9cdcfe"/><rect x="14" y="874.3" width="1" height="1.5" fill="#d4d4d4"/><rect x="16" y="874.3" width="6" height="1.5" fill="#ce9178"/><rect x="22" y="874.3" width="1" height="1.5" fill="#d4d4d4"/><rect x="4" y="876.3" width="9" height="1.5" fill="#9cdcfe"/><rect x="13" y="876.3" width="1" height="1.5" fill="#d4d4d4"/><rect x="15" y="876.3" width="8" height="1.5" fill="#ce9178"/><rect x="23" y="876.3" width="1" height="1.5" fill="#d4d4d4"/><rect x="4" y="878.3" width="15" height="1.5" fill="#9cdcfe"/><rect x="19" y="878.3" width="1" height="1.5" fill="#d4d4d4"/><rect x="21" y="878.3" width="10" height="1.5" fill="#ce9178"/><rect x="31" y="878.3" width="1" height="1.5" fill="#d4d4d4"/><rect x="4" y="880.3" width="18" height="1.5" fill="#9cdcfe"/><rect x="22" y="880.3" width="1" height="1.5" fill="#d4d4d4"/><rect x="24" y="880.3" width="2" height="1.5" fill="#b5cea8"/><rect x="26" y="880.3" width="1" height="1.5" fill="#d4d4d4"/><rect x="4" y="882.3" width="13" height="1.5" fill="#9cdcfe"/><rect x="17" y="882.3" width="1" height="1.5" fill="#d4d4d4"/><rect x="19" y="882.3" width="2" height="1.5" fill="#b5cea8"/><rect x="21" y="882.3" width="1" height="1.5" fill="#d4d4d4"/><rect x="4" y="884.3" width="12" height="1.5" fill="#9cdcfe"/><rect x="16" y="884.3" width="1" height="1.5" fill="#d4d4d4"/><rect x="18" y="884.3" width="2" height="1.5" fill="#b5cea8"/><rect x="20" y="884.3" width="1" height="1.5" fill="#d4d4d4"/><rect x="4" y="886.3" width="9" height="1.5" fill="#9cdcfe"/><rect x="13" y="886.3" width="1" height="1.5" fill="#d4d4d4"/><rect x="15" y="886.3" width="2" height="1.5" fill="#b5cea8"/><rect x="17" y="886.3" width="1" height="1.5" fill="#d4d4d4"/><rect x="4" y="888.3" width="6" height="1.5" fill="#9cdcfe"/><rect x="10" y="888.3" width="1" height="1.5" fill="#d4d4d4"/><rect x="12" y="888.3" width="1" height="1.5" fill="#b5cea8"/><rect x="13" y="888.3" width="1" height="1.5" fill="#d4d4d4"/></g></svg>
<div style="left:0px;top:1020px;width:1920px;height:60px;background:linear-gradient(90deg,#202020 0%,#212020 58%,#291f1d 66%,#2a201e 72%,#20202a 77%,#1b2131 80%,#1b2232 84%,#2b2127 88%,#38201d 92%,#3b2320 100%);"></div>
<div style="left:0px;top:1020px;width:1920px;height:1px;background:#2e2e2e;"></div>
<svg style="left:0px;top:0px;pointer-events:none;" width="1920" height="1080" viewBox="0 0 1920 1080"><defs><linearGradient id="og" x1="0" y1="0" x2="0" y2="1"><stop offset="0" stop-color="#f8a51c"/><stop offset="1" stop-color="#f26522"/></linearGradient></defs><circle cx="41" cy="1050" r="12.5" fill="url(#og)"/><circle cx="50" cy="1039" r="9.5" fill="#c42b1c"/><text x="50" y="1042.96" font-family="Liberation Sans" font-size="11" font-weight="700" fill="#ffffff" text-anchor="middle">1</text><defs><linearGradient id="wg" gradientUnits="userSpaceOnUse" x1="293" y1="1036" x2="322" y2="1065"><stop offset="0" stop-color="#7fe3fb"/><stop offset="0.5" stop-color="#2fb6f2"/><stop offset="1" stop-color="#0f8ef0"/></linearGradient></defs><rect x="293" y="1036" width="13.8" height="13.8" rx="0.8" fill="url(#wg)"/><rect x="307.6" y="1036" width="13.8" height="13.8" rx="0.8" fill="url(#wg)"/><rect x="293" y="1050.6" width="13.8" height="13.8" rx="0.8" fill="url(#wg)"/><rect x="307.6" y="1050.6" width="13.8" height="13.8" rx="0.8" fill="url(#wg)"/><rect x="340" y="1031" width="273" height="38" rx="19" fill="#f3f3f3"/><circle cx="361" cy="1048" r="6.5" stroke="#1a1a1a" stroke-width="2" fill="none"/><path d="M365.5 1052.5 L371 1058" stroke="#1a1a1a" stroke-width="2.2"/><text x="385" y="1057" font-family="Liberation Sans" font-size="16.5" fill="#5f5f5f" textLength="50.5" lengthAdjust="spacingAndGlyphs">Search</text><rect x="629" y="1043" width="20" height="20" rx="2" fill="#7a7a7a"/><rect x="639" y="1036" width="20" height="20" rx="2" fill="#e8e8e8"/><rect x="639" y="1043" width="10" height="13" fill="#bdbdbd"/><defs><linearGradient id="cp" x1="0" y1="0" x2="1" y2="1"><stop offset="0" stop-color="#2dc4f0"/><stop offset="0.4" stop-color="#8cd24a"/><stop offset="0.7" stop-color="#f2b33d"/><stop offset="1" stop-color="#d43ad6"/></linearGradient></defs><defs><linearGradient id="cp1" x1="0" y1="0" x2="1" y2="1"><stop offset="0" stop-color="#28c4f5"/><stop offset="0.5" stop-color="#3d7bf0"/><stop offset="1" stop-color="#7a5af0"/></linearGradient><linearGradient id="cp2" x1="0" y1="0" x2="1" y2="1"><stop offset="0" stop-color="#ffc43a"/><stop offset="0.5" stop-color="#ff6a3d"/><stop offset="1" stop-color="#e64fd0"/></linearGradient></defs><path d="M696 1037 H704 Q708 1037 709 1041 L704.5 1057 Q703.5 1060 700 1060 H690 Q686 1060 686.5 1056 L690 1042 Q691.5 1037 696 1037 Z" fill="url(#cp1)"/><path d="M703 1063 H695 Q691 1063 690.5 1059 L695.5 1043 Q696.5 1040 700 1040 H709 Q713 1040 712.5 1044 L709 1058 Q707.5 1063 703 1063 Z" fill="url(#cp2)" opacity="0.92"/><path d="M692 1046 Q694 1040 700 1040 L696 1056 Q695 1060 690 1059 Z" fill="#8bd44a" opacity="0.7"/><path d="M699.5 1045 L704 1045 L701 1055.5 L696.5 1055.5 Z" fill="#202020" opacity="0.85"/><path d="M739 1040 Q739 1037 742 1037 H751 L754 1040 H766 Q769 1040 769 1043 V1063 Q769 1065 767 1065 H741 Q739 1065 739 1063 Z" fill="#f2c24b"/><rect x="739" y="1045" width="30" height="20" rx="2" fill="#ffd65c"/><rect x="747" y="1056" width="14" height="4" rx="1" fill="#1e6fd9"/><defs><linearGradient id="ed" x1="0" y1="0" x2="1" y2="1"><stop offset="0" stop-color="#35c1f1"/><stop offset="0.5" stop-color="#1e8fd6"/><stop offset="1" stop-color="#54c13a"/></linearGradient></defs><defs><linearGradient id="ed2" gradientUnits="userSpaceOnUse" x1="796" y1="1062" x2="822" y2="1038"><stop offset="0" stop-color="#1a7fd6"/><stop offset="0.55" stop-color="#2fb4f0"/><stop offset="1" stop-color="#6fd84a"/></linearGradient></defs><circle cx="809" cy="1050" r="15" fill="url(#ed2)"/><path d="M803.5 1054 Q805 1045 813 1045 Q821 1045.5 823.5 1052.5 Q823 1056 818 1056 H808.5 Q806 1056 805.5 1054 Z" fill="#202124"/><path d="M794 1051 Q795 1064 809 1065 Q819 1065 823.5 1058.5 Q816 1062.5 809.5 1060.5 Q802 1058 802 1051 Q802 1046 806 1043 Q798 1044 794 1051 Z" fill="#0f5aaa"/><rect x="849" y="1039" width="30" height="26" rx="3" fill="#f0f0f0"/><path d="M856 1039 V1035 H872 V1039" stroke="#29a3e6" stroke-width="2" fill="none"/><rect x="857" y="1045" width="6" height="6" fill="#f25022"/><rect x="865" y="1045" width="6" height="6" fill="#7fba00"/><rect x="857" y="1053" width="6" height="6" fill="#00a4ef"/><rect x="865" y="1053" width="6" height="6" fill="#ffb900"/><rect x="904" y="1035" width="30" height="30" fill="#0061fe"/><path d="M913.5 1041 L919 1044.5 L913.5 1048 L908 1044.5 Z M924.5 1041 L930 1044.5 L924.5 1048 L919 1044.5 Z M913.5 1048 L919 1051.5 L913.5 1055 L908 1051.5 Z M924.5 1048 L930 1051.5 L924.5 1055 L919 1051.5 Z M913.5 1056.3 L919 1052.8 L924.5 1056.3 L919 1059.8 Z" fill="#ffffff"/><path d="M974 1050 L961.01 1042.50 A15 15 0 0 1 986.99 1042.50 Z" fill="#db4437"/><path d="M974 1050 L986.99 1042.50 A15 15 0 0 1 974.00 1065.00 Z" fill="#f4c20d"/><path d="M974 1050 L974.00 1065.00 A15 15 0 0 1 961.01 1042.50 Z" fill="#0f9d58"/><circle cx="974" cy="1050" r="6.90" fill="#ffffff"/><circle cx="974" cy="1050" r="5.40" fill="#4285f4"/><circle cx="985" cy="1039" r="10" fill="#455a64"/><text x="985" y="1042.96" font-family="Liberation Sans" font-size="11" font-weight="700" fill="#ffffff" text-anchor="middle">H</text><defs><linearGradient id="rd" x1="0" y1="0" x2="1" y2="1"><stop offset="0" stop-color="#ff2f7a"/><stop offset="0.5" stop-color="#ff2020"/><stop offset="1" stop-color="#ff9a00"/></linearGradient></defs><path d="M1029 1035 L1044 1050 L1029 1065 L1014 1050 Z" fill="url(#rd)"/><circle cx="1084" cy="1050" r="14" fill="#f4f4f4"/><rect x="1076" y="1047" width="16" height="3.5" rx="1.7" fill="#36c5f0"/><rect x="1081" y="1041" width="3.5" height="16" rx="1.7" fill="#2eb67d"/><rect x="1087" y="1043" width="3.5" height="14" rx="1.7" fill="#e01e5a"/><rect x="1076" y="1053" width="16" height="3.5" rx="1.7" fill="#ecb22e"/><circle cx="1095" cy="1039" r="9.5" fill="#d0254f"/><text x="1095" y="1043.32" font-family="Liberation Sans" font-size="12" font-weight="700" fill="#ffffff" text-anchor="middle">3</text><polygon points="1153.70,1047.02 1153.70,1052.98 1149.68,1054.27 1149.57,1054.54 1151.50,1058.29 1147.29,1062.50 1143.54,1060.57 1143.27,1060.68 1141.98,1064.70 1136.02,1064.70 1134.73,1060.68 1134.46,1060.57 1130.71,1062.50 1126.50,1058.29 1128.43,1054.54 1128.32,1054.27 1124.30,1052.98 1124.30,1047.02 1128.32,1045.73 1128.43,1045.46 1126.50,1041.71 1130.71,1037.50 1134.46,1039.43 1134.73,1039.32 1136.02,1035.30 1141.98,1035.30 1143.27,1039.32 1143.54,1039.43 1147.29,1037.50 1151.50,1041.71 1149.57,1045.46 1149.68,1045.73" fill="#8a8f96"/><circle cx="1139" cy="1050" r="7" fill="#ffffff"/><circle cx="1139" cy="1050" r="5.5" fill="#0f5fb8"/><rect x="1170" y="1026" width="48" height="48" rx="5" fill="#2d2e31"/><polygon points="1200.77,1035.00 1200.77,1044.51 1181.49,1057.56 1178.50,1055.04" fill="#0f7fcf"/><polygon points="1200.77,1065.00 1200.77,1055.49 1181.49,1042.44 1178.50,1044.96" fill="#1b93e3"/><polygon points="1200.77,1035.00 1209.00,1038.84 1209.00,1061.16 1200.77,1065.00" fill="#24aaf2"/><rect x="1184" y="1070" width="20" height="4" rx="2" fill="#4cc2ff"/><path d="M1249 1050 L1236.01 1042.50 A15 15 0 0 1 1261.99 1042.50 Z" fill="#db4437"/><path d="M1249 1050 L1261.99 1042.50 A15 15 0 0 1 1249.00 1065.00 Z" fill="#f4c20d"/><path d="M1249 1050 L1249.00 1065.00 A15 15 0 0 1 1236.01 1042.50 Z" fill="#0f9d58"/><circle cx="1249" cy="1050" r="6.90" fill="#ffffff"/><circle cx="1249" cy="1050" r="5.40" fill="#4285f4"/><circle cx="1260" cy="1039" r="10" fill="#1976d2"/><text x="1260" y="1042.96" font-family="Liberation Sans" font-size="11" font-weight="700" fill="#ffffff" text-anchor="middle">H</text><circle cx="1304" cy="1050" r="14" fill="#8a3fbf"/><circle cx="1304" cy="1050" r="10.5" fill="#f0f0f0"/><g transform="translate(1304 1052) scale(0.72) translate(-1304 -1052)"><path d="M1300.5 1062 V1057.5 Q1296 1056 1296 1050.5 Q1296 1048 1297.5 1046.5 Q1297 1044.5 1297.8 1042.5 Q1300 1042.8 1301.5 1044 Q1304 1043.3 1306.5 1044 Q1308 1042.8 1310.2 1042.5 Q1311 1044.5 1310.5 1046.5 Q1312 1048 1312 1050.5 Q1312 1056 1307.5 1057.5 V1062 Z" fill="#8a3fbf"/><path d="M1300.5 1059 Q1297 1059.5 1296 1056.5" stroke="#8a3fbf" stroke-width="1.3" fill="none"/></g><path d="M1359 1050 L1346.01 1042.50 A15 15 0 0 1 1371.99 1042.50 Z" fill="#db4437"/><path d="M1359 1050 L1371.99 1042.50 A15 15 0 0 1 1359.00 1065.00 Z" fill="#f4c20d"/><path d="M1359 1050 L1359.00 1065.00 A15 15 0 0 1 1346.01 1042.50 Z" fill="#0f9d58"/><circle cx="1359" cy="1050" r="6.90" fill="#ffffff"/><circle cx="1359" cy="1050" r="5.40" fill="#4285f4"/><circle cx="1370" cy="1039" r="10" fill="#c2391b"/><text x="1370" y="1042.96" font-family="Liberation Sans" font-size="11" font-weight="700" fill="#ffffff" text-anchor="middle">S</text><path d="M1400 1063 L1402 1056 Q1399 1051 1400.5 1046 Q1404 1037 1413 1036.5 Q1423 1037 1426 1046 Q1428 1056 1420 1061 Q1413 1065 1406 1061 Z" stroke="#25d366" stroke-width="2.6" fill="none" stroke-linejoin="round"/><path d="M1408 1044 Q1406 1046 1408 1050 Q1411 1055 1417 1057 Q1420 1056 1420 1054 L1417 1052 L1415 1053 Q1412 1051 1411 1048 L1412 1046 L1410 1043 Z" fill="#25d366"/><rect x="1408.0" y="1029.5" width="32" height="19.0" rx="9.5" fill="#4cc2ff"/><text x="1424" y="1043.32" font-family="Liberation Sans" font-size="12" fill="#111111" text-anchor="middle">99+</text><rect x="1458" y="1036" width="23" height="27" rx="3" fill="#3a8cf0"/><rect x="1458" y="1036" width="23" height="10" rx="3" fill="#64b5ff"/><rect x="1454" y="1051" width="14" height="13" rx="2" fill="#1a5fc8"/><text x="1461" y="1062" font-family="Liberation Sans" font-size="10" font-weight="700" fill="#ffffff" text-anchor="middle">W</text><defs><linearGradient id="ph" x1="0" y1="0" x2="0" y2="1"><stop offset="0" stop-color="#47b8f5"/><stop offset="1" stop-color="#2a6fd6"/></linearGradient></defs><rect x="1511" y="1036" width="27" height="27" rx="4" fill="url(#ph)"/><path d="M1511 1058 L1521 1047 L1529 1055 L1533 1051 L1538 1056 V1063 H1511 Z" fill="#9be1ff"/><circle cx="1531" cy="1042" r="2.2" fill="#ffffff"/><rect x="750" y="1071" width="8" height="3" rx="1.5" fill="#8a8a8a"/><rect x="970" y="1071" width="8" height="3" rx="1.5" fill="#8a8a8a"/><rect x="1080" y="1071" width="8" height="3" rx="1.5" fill="#8a8a8a"/><rect x="1135" y="1071" width="8" height="3" rx="1.5" fill="#8a8a8a"/><rect x="1245" y="1071" width="8" height="3" rx="1.5" fill="#8a8a8a"/><rect x="1300" y="1071" width="8" height="3" rx="1.5" fill="#8a8a8a"/><rect x="1355" y="1071" width="8" height="3" rx="1.5" fill="#8a8a8a"/><rect x="1410" y="1071" width="8" height="3" rx="1.5" fill="#8a8a8a"/><rect x="1465" y="1071" width="8" height="3" rx="1.5" fill="#8a8a8a"/><rect x="1520" y="1071" width="8" height="3" rx="1.5" fill="#8a8a8a"/><path d="M1636 1053.5 L1643 1046 L1650 1053.5" stroke="#ffffff" stroke-width="1.6" fill="none"/><path d="M1675 1058 Q1672 1058 1672.5 1054 Q1673 1050 1677 1050 Q1679 1045 1684 1046 Q1689 1046 1690 1051 Q1693 1051 1693 1055 Q1693 1058 1690 1058 Z" fill="#9a9a9a"/><path d="M1675 1043 L1692 1061" stroke="#ffffff" stroke-width="1.4"/><path d="M1713 1046 Q1723 1037 1733 1046 M1716.5 1049.5 Q1723 1043.5 1729.5 1049.5 M1720 1053 Q1723 1050 1726 1053" stroke="#ffffff" stroke-width="1.8" fill="none"/><circle cx="1723" cy="1056.5" r="1.8" fill="#ffffff"/><path d="M1743 1046.5 H1747 L1752 1042 V1058 L1747 1053.5 H1743 Z" stroke="#ffffff" stroke-width="1.4" fill="none" stroke-linejoin="round"/><path d="M1755 1046 Q1757.5 1050 1755 1054 M1758 1043 Q1762.5 1050 1758 1057" stroke="#ffffff" stroke-width="1.4" fill="none"/><rect x="1773" y="1044" width="22" height="12" rx="3" stroke="#ffffff" stroke-width="1.4" fill="none"/><rect x="1775.5" y="1046.5" width="11" height="7" rx="1" fill="#ffffff"/><rect x="1796" y="1047.5" width="2" height="5" rx="1" fill="#ffffff"/></svg>
<div style="left:1859.5px;top:1033.15px;font-family:'Liberation Sans', sans-serif;font-size:14px;line-height:14px;color:#ffffff;white-space:pre;transform:scaleX(1.0562186658102732);transform-origin:0 0;">15:37</div>
<div style="left:1818.5px;top:1053.15px;font-family:'Liberation Sans', sans-serif;font-size:14px;line-height:14px;color:#ffffff;white-space:pre;transform:scaleX(1.1061749540580563);transform-origin:0 0;">10/03/2026</div>
</body></html>
